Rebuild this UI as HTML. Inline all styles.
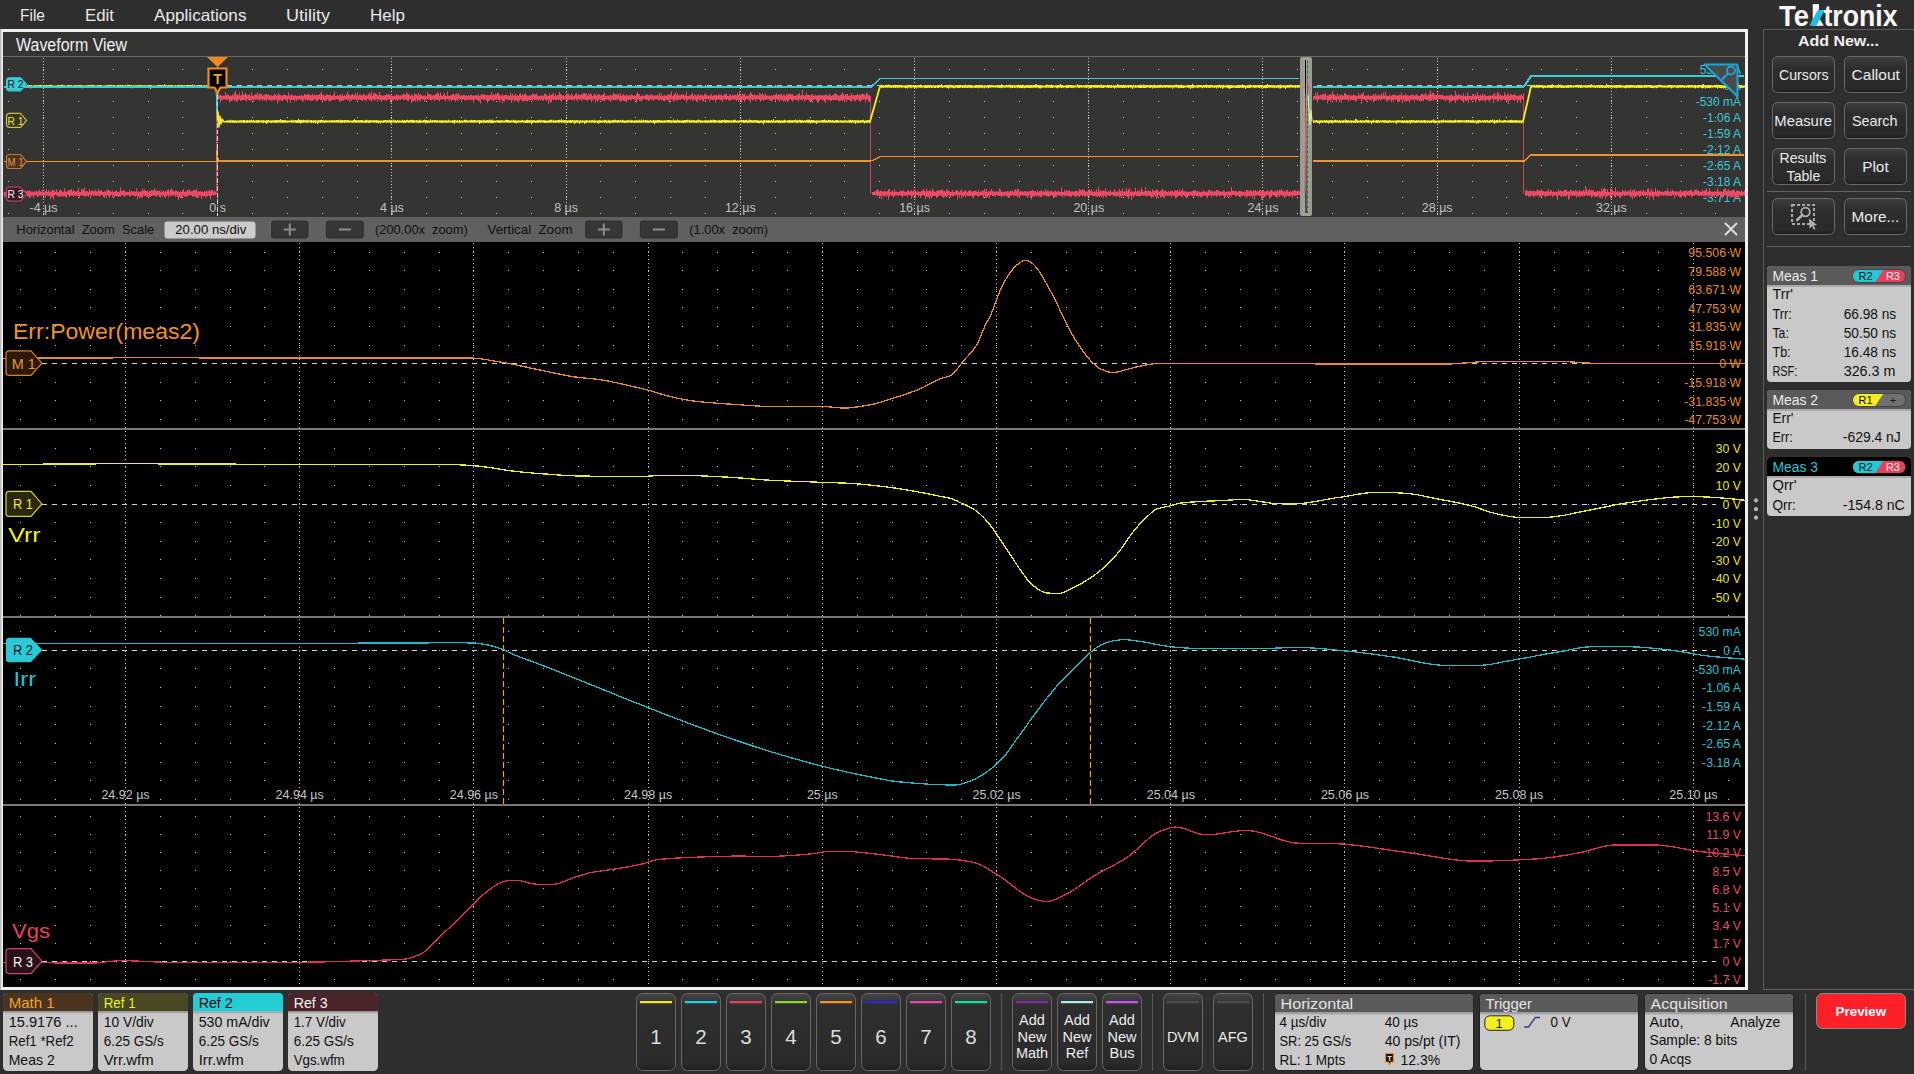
<!DOCTYPE html><html><head><meta charset="utf-8"><style>html,body{margin:0;padding:0;background:#2e2e2e;width:1914px;height:1074px;overflow:hidden;position:relative;font-family:"Liberation Sans",sans-serif}</style></head><body><svg width="1914" height="1074" viewBox="0 0 1914 1074" style="position:absolute;left:0;top:0;font-family:'Liberation Sans', sans-serif">
<defs>
<linearGradient id="btn" x1="0" y1="0" x2="0" y2="1">
<stop offset="0" stop-color="#3d3e40"/><stop offset="0.3" stop-color="#2e2e2e"/><stop offset="0.88" stop-color="#2a2a2a"/><stop offset="1" stop-color="#1c1c1c"/></linearGradient>
<linearGradient id="cbtn" x1="0" y1="0" x2="0" y2="1">
<stop offset="0" stop-color="#434446"/><stop offset="0.16" stop-color="#2e2e2e"/><stop offset="0.9" stop-color="#2b2b2b"/><stop offset="1" stop-color="#1e1e1e"/></linearGradient>
<linearGradient id="lb" x1="0" y1="0" x2="1" y2="0">
<stop offset="0" stop-color="#a9a9a9"/><stop offset="0.5" stop-color="#dcdcdc"/><stop offset="1" stop-color="#f4f4f4"/></linearGradient>
</defs>
<rect x="0" y="0" width="1914" height="1074" fill="#2e2e2e"/>
<text x="20" y="20.5" font-size="16.5" fill="#e8e8e8" text-anchor="start" font-weight="normal" textLength="25" lengthAdjust="spacingAndGlyphs">File</text>
<text x="85" y="20.5" font-size="16.5" fill="#e8e8e8" text-anchor="start" font-weight="normal" textLength="29" lengthAdjust="spacingAndGlyphs">Edit</text>
<text x="154" y="20.5" font-size="16.5" fill="#e8e8e8" text-anchor="start" font-weight="normal" textLength="92.5" lengthAdjust="spacingAndGlyphs">Applications</text>
<text x="286" y="20.5" font-size="16.5" fill="#e8e8e8" text-anchor="start" font-weight="normal" textLength="44" lengthAdjust="spacingAndGlyphs">Utility</text>
<text x="370" y="20.5" font-size="16.5" fill="#e8e8e8" text-anchor="start" font-weight="normal" textLength="35" lengthAdjust="spacingAndGlyphs">Help</text>
<text x="1779" y="25.8" font-size="30" font-weight="bold" fill="#f6f6f6" textLength="30" lengthAdjust="spacingAndGlyphs">Te</text>
<rect x="1812.7" y="4.1" width="6.3" height="21.7" fill="#f6f6f6"/>
<path d="M1818.5 17 L1823.8 25.8 L1817 25.8 L1815.5 22 Z" fill="#f6f6f6"/>
<path d="M1809.3 25.8 L1816.3 25.8 L1824.8 9.9 L1817.8 9.9 Z" fill="#1ec0e0"/>
<text x="1823.5" y="25.8" font-size="30" font-weight="bold" fill="#f6f6f6" textLength="74" lengthAdjust="spacingAndGlyphs">tronix</text>
<rect x="0" y="29" width="1748" height="961" fill="#f0f0f0"/>
<rect x="0" y="29" width="3" height="961" fill="url(#lb)"/>
<rect x="3" y="32" width="1742" height="955" fill="#343433"/>
<text x="16" y="51" font-size="17.5" fill="#f0f0f0" text-anchor="start" font-weight="normal" textLength="111" lengthAdjust="spacingAndGlyphs">Waveform View</text>
<rect x="3" y="56" width="1742" height="1" fill="#666666"/>
<rect x="3" y="217" width="1742" height="25" fill="#5f6060"/>
<rect x="3" y="242" width="1742" height="745" fill="#000000"/>
<path d="M8 69h1v1h-1zM8 85h1v1h-1zM8 101h1v1h-1zM8 117h1v1h-1zM8 133h1v1h-1zM8 149h1v1h-1zM8 165h1v1h-1zM8 181h1v1h-1zM8 197h1v1h-1zM8 213h1v1h-1zM43 69h1v1h-1zM43 85h1v1h-1zM43 101h1v1h-1zM43 117h1v1h-1zM43 133h1v1h-1zM43 149h1v1h-1zM43 165h1v1h-1zM43 181h1v1h-1zM43 197h1v1h-1zM43 213h1v1h-1zM78 69h1v1h-1zM78 85h1v1h-1zM78 101h1v1h-1zM78 117h1v1h-1zM78 133h1v1h-1zM78 149h1v1h-1zM78 165h1v1h-1zM78 181h1v1h-1zM78 197h1v1h-1zM78 213h1v1h-1zM113 69h1v1h-1zM113 85h1v1h-1zM113 101h1v1h-1zM113 117h1v1h-1zM113 133h1v1h-1zM113 149h1v1h-1zM113 165h1v1h-1zM113 181h1v1h-1zM113 197h1v1h-1zM113 213h1v1h-1zM148 69h1v1h-1zM148 85h1v1h-1zM148 101h1v1h-1zM148 117h1v1h-1zM148 133h1v1h-1zM148 149h1v1h-1zM148 165h1v1h-1zM148 181h1v1h-1zM148 197h1v1h-1zM148 213h1v1h-1zM182 69h1v1h-1zM182 85h1v1h-1zM182 101h1v1h-1zM182 117h1v1h-1zM182 133h1v1h-1zM182 149h1v1h-1zM182 165h1v1h-1zM182 181h1v1h-1zM182 197h1v1h-1zM182 213h1v1h-1zM217 69h1v1h-1zM217 85h1v1h-1zM217 101h1v1h-1zM217 117h1v1h-1zM217 133h1v1h-1zM217 149h1v1h-1zM217 165h1v1h-1zM217 181h1v1h-1zM217 197h1v1h-1zM217 213h1v1h-1zM252 69h1v1h-1zM252 85h1v1h-1zM252 101h1v1h-1zM252 117h1v1h-1zM252 133h1v1h-1zM252 149h1v1h-1zM252 165h1v1h-1zM252 181h1v1h-1zM252 197h1v1h-1zM252 213h1v1h-1zM287 69h1v1h-1zM287 85h1v1h-1zM287 101h1v1h-1zM287 117h1v1h-1zM287 133h1v1h-1zM287 149h1v1h-1zM287 165h1v1h-1zM287 181h1v1h-1zM287 197h1v1h-1zM287 213h1v1h-1zM322 69h1v1h-1zM322 85h1v1h-1zM322 101h1v1h-1zM322 117h1v1h-1zM322 133h1v1h-1zM322 149h1v1h-1zM322 165h1v1h-1zM322 181h1v1h-1zM322 197h1v1h-1zM322 213h1v1h-1zM357 69h1v1h-1zM357 85h1v1h-1zM357 101h1v1h-1zM357 117h1v1h-1zM357 133h1v1h-1zM357 149h1v1h-1zM357 165h1v1h-1zM357 181h1v1h-1zM357 197h1v1h-1zM357 213h1v1h-1zM391 69h1v1h-1zM391 85h1v1h-1zM391 101h1v1h-1zM391 117h1v1h-1zM391 133h1v1h-1zM391 149h1v1h-1zM391 165h1v1h-1zM391 181h1v1h-1zM391 197h1v1h-1zM391 213h1v1h-1zM426 69h1v1h-1zM426 85h1v1h-1zM426 101h1v1h-1zM426 117h1v1h-1zM426 133h1v1h-1zM426 149h1v1h-1zM426 165h1v1h-1zM426 181h1v1h-1zM426 197h1v1h-1zM426 213h1v1h-1zM461 69h1v1h-1zM461 85h1v1h-1zM461 101h1v1h-1zM461 117h1v1h-1zM461 133h1v1h-1zM461 149h1v1h-1zM461 165h1v1h-1zM461 181h1v1h-1zM461 197h1v1h-1zM461 213h1v1h-1zM496 69h1v1h-1zM496 85h1v1h-1zM496 101h1v1h-1zM496 117h1v1h-1zM496 133h1v1h-1zM496 149h1v1h-1zM496 165h1v1h-1zM496 181h1v1h-1zM496 197h1v1h-1zM496 213h1v1h-1zM531 69h1v1h-1zM531 85h1v1h-1zM531 101h1v1h-1zM531 117h1v1h-1zM531 133h1v1h-1zM531 149h1v1h-1zM531 165h1v1h-1zM531 181h1v1h-1zM531 197h1v1h-1zM531 213h1v1h-1zM566 69h1v1h-1zM566 85h1v1h-1zM566 101h1v1h-1zM566 117h1v1h-1zM566 133h1v1h-1zM566 149h1v1h-1zM566 165h1v1h-1zM566 181h1v1h-1zM566 197h1v1h-1zM566 213h1v1h-1zM600 69h1v1h-1zM600 85h1v1h-1zM600 101h1v1h-1zM600 117h1v1h-1zM600 133h1v1h-1zM600 149h1v1h-1zM600 165h1v1h-1zM600 181h1v1h-1zM600 197h1v1h-1zM600 213h1v1h-1zM635 69h1v1h-1zM635 85h1v1h-1zM635 101h1v1h-1zM635 117h1v1h-1zM635 133h1v1h-1zM635 149h1v1h-1zM635 165h1v1h-1zM635 181h1v1h-1zM635 197h1v1h-1zM635 213h1v1h-1zM670 69h1v1h-1zM670 85h1v1h-1zM670 101h1v1h-1zM670 117h1v1h-1zM670 133h1v1h-1zM670 149h1v1h-1zM670 165h1v1h-1zM670 181h1v1h-1zM670 197h1v1h-1zM670 213h1v1h-1zM705 69h1v1h-1zM705 85h1v1h-1zM705 101h1v1h-1zM705 117h1v1h-1zM705 133h1v1h-1zM705 149h1v1h-1zM705 165h1v1h-1zM705 181h1v1h-1zM705 197h1v1h-1zM705 213h1v1h-1zM740 69h1v1h-1zM740 85h1v1h-1zM740 101h1v1h-1zM740 117h1v1h-1zM740 133h1v1h-1zM740 149h1v1h-1zM740 165h1v1h-1zM740 181h1v1h-1zM740 197h1v1h-1zM740 213h1v1h-1zM775 69h1v1h-1zM775 85h1v1h-1zM775 101h1v1h-1zM775 117h1v1h-1zM775 133h1v1h-1zM775 149h1v1h-1zM775 165h1v1h-1zM775 181h1v1h-1zM775 197h1v1h-1zM775 213h1v1h-1zM810 69h1v1h-1zM810 85h1v1h-1zM810 101h1v1h-1zM810 117h1v1h-1zM810 133h1v1h-1zM810 149h1v1h-1zM810 165h1v1h-1zM810 181h1v1h-1zM810 197h1v1h-1zM810 213h1v1h-1zM844 69h1v1h-1zM844 85h1v1h-1zM844 101h1v1h-1zM844 117h1v1h-1zM844 133h1v1h-1zM844 149h1v1h-1zM844 165h1v1h-1zM844 181h1v1h-1zM844 197h1v1h-1zM844 213h1v1h-1zM879 69h1v1h-1zM879 85h1v1h-1zM879 101h1v1h-1zM879 117h1v1h-1zM879 133h1v1h-1zM879 149h1v1h-1zM879 165h1v1h-1zM879 181h1v1h-1zM879 197h1v1h-1zM879 213h1v1h-1zM914 69h1v1h-1zM914 85h1v1h-1zM914 101h1v1h-1zM914 117h1v1h-1zM914 133h1v1h-1zM914 149h1v1h-1zM914 165h1v1h-1zM914 181h1v1h-1zM914 197h1v1h-1zM914 213h1v1h-1zM949 69h1v1h-1zM949 85h1v1h-1zM949 101h1v1h-1zM949 117h1v1h-1zM949 133h1v1h-1zM949 149h1v1h-1zM949 165h1v1h-1zM949 181h1v1h-1zM949 197h1v1h-1zM949 213h1v1h-1zM984 69h1v1h-1zM984 85h1v1h-1zM984 101h1v1h-1zM984 117h1v1h-1zM984 133h1v1h-1zM984 149h1v1h-1zM984 165h1v1h-1zM984 181h1v1h-1zM984 197h1v1h-1zM984 213h1v1h-1zM1019 69h1v1h-1zM1019 85h1v1h-1zM1019 101h1v1h-1zM1019 117h1v1h-1zM1019 133h1v1h-1zM1019 149h1v1h-1zM1019 165h1v1h-1zM1019 181h1v1h-1zM1019 197h1v1h-1zM1019 213h1v1h-1zM1053 69h1v1h-1zM1053 85h1v1h-1zM1053 101h1v1h-1zM1053 117h1v1h-1zM1053 133h1v1h-1zM1053 149h1v1h-1zM1053 165h1v1h-1zM1053 181h1v1h-1zM1053 197h1v1h-1zM1053 213h1v1h-1zM1088 69h1v1h-1zM1088 85h1v1h-1zM1088 101h1v1h-1zM1088 117h1v1h-1zM1088 133h1v1h-1zM1088 149h1v1h-1zM1088 165h1v1h-1zM1088 181h1v1h-1zM1088 197h1v1h-1zM1088 213h1v1h-1zM1123 69h1v1h-1zM1123 85h1v1h-1zM1123 101h1v1h-1zM1123 117h1v1h-1zM1123 133h1v1h-1zM1123 149h1v1h-1zM1123 165h1v1h-1zM1123 181h1v1h-1zM1123 197h1v1h-1zM1123 213h1v1h-1zM1158 69h1v1h-1zM1158 85h1v1h-1zM1158 101h1v1h-1zM1158 117h1v1h-1zM1158 133h1v1h-1zM1158 149h1v1h-1zM1158 165h1v1h-1zM1158 181h1v1h-1zM1158 197h1v1h-1zM1158 213h1v1h-1zM1193 69h1v1h-1zM1193 85h1v1h-1zM1193 101h1v1h-1zM1193 117h1v1h-1zM1193 133h1v1h-1zM1193 149h1v1h-1zM1193 165h1v1h-1zM1193 181h1v1h-1zM1193 197h1v1h-1zM1193 213h1v1h-1zM1228 69h1v1h-1zM1228 85h1v1h-1zM1228 101h1v1h-1zM1228 117h1v1h-1zM1228 133h1v1h-1zM1228 149h1v1h-1zM1228 165h1v1h-1zM1228 181h1v1h-1zM1228 197h1v1h-1zM1228 213h1v1h-1zM1262 69h1v1h-1zM1262 85h1v1h-1zM1262 101h1v1h-1zM1262 117h1v1h-1zM1262 133h1v1h-1zM1262 149h1v1h-1zM1262 165h1v1h-1zM1262 181h1v1h-1zM1262 197h1v1h-1zM1262 213h1v1h-1zM1297 69h1v1h-1zM1297 85h1v1h-1zM1297 101h1v1h-1zM1297 117h1v1h-1zM1297 133h1v1h-1zM1297 149h1v1h-1zM1297 165h1v1h-1zM1297 181h1v1h-1zM1297 197h1v1h-1zM1297 213h1v1h-1zM1332 69h1v1h-1zM1332 85h1v1h-1zM1332 101h1v1h-1zM1332 117h1v1h-1zM1332 133h1v1h-1zM1332 149h1v1h-1zM1332 165h1v1h-1zM1332 181h1v1h-1zM1332 197h1v1h-1zM1332 213h1v1h-1zM1367 69h1v1h-1zM1367 85h1v1h-1zM1367 101h1v1h-1zM1367 117h1v1h-1zM1367 133h1v1h-1zM1367 149h1v1h-1zM1367 165h1v1h-1zM1367 181h1v1h-1zM1367 197h1v1h-1zM1367 213h1v1h-1zM1402 69h1v1h-1zM1402 85h1v1h-1zM1402 101h1v1h-1zM1402 117h1v1h-1zM1402 133h1v1h-1zM1402 149h1v1h-1zM1402 165h1v1h-1zM1402 181h1v1h-1zM1402 197h1v1h-1zM1402 213h1v1h-1zM1437 69h1v1h-1zM1437 85h1v1h-1zM1437 101h1v1h-1zM1437 117h1v1h-1zM1437 133h1v1h-1zM1437 149h1v1h-1zM1437 165h1v1h-1zM1437 181h1v1h-1zM1437 197h1v1h-1zM1437 213h1v1h-1zM1472 69h1v1h-1zM1472 85h1v1h-1zM1472 101h1v1h-1zM1472 117h1v1h-1zM1472 133h1v1h-1zM1472 149h1v1h-1zM1472 165h1v1h-1zM1472 181h1v1h-1zM1472 197h1v1h-1zM1472 213h1v1h-1zM1506 69h1v1h-1zM1506 85h1v1h-1zM1506 101h1v1h-1zM1506 117h1v1h-1zM1506 133h1v1h-1zM1506 149h1v1h-1zM1506 165h1v1h-1zM1506 181h1v1h-1zM1506 197h1v1h-1zM1506 213h1v1h-1zM1541 69h1v1h-1zM1541 85h1v1h-1zM1541 101h1v1h-1zM1541 117h1v1h-1zM1541 133h1v1h-1zM1541 149h1v1h-1zM1541 165h1v1h-1zM1541 181h1v1h-1zM1541 197h1v1h-1zM1541 213h1v1h-1zM1576 69h1v1h-1zM1576 85h1v1h-1zM1576 101h1v1h-1zM1576 117h1v1h-1zM1576 133h1v1h-1zM1576 149h1v1h-1zM1576 165h1v1h-1zM1576 181h1v1h-1zM1576 197h1v1h-1zM1576 213h1v1h-1zM1611 69h1v1h-1zM1611 85h1v1h-1zM1611 101h1v1h-1zM1611 117h1v1h-1zM1611 133h1v1h-1zM1611 149h1v1h-1zM1611 165h1v1h-1zM1611 181h1v1h-1zM1611 197h1v1h-1zM1611 213h1v1h-1zM1646 69h1v1h-1zM1646 85h1v1h-1zM1646 101h1v1h-1zM1646 117h1v1h-1zM1646 133h1v1h-1zM1646 149h1v1h-1zM1646 165h1v1h-1zM1646 181h1v1h-1zM1646 197h1v1h-1zM1646 213h1v1h-1zM1681 69h1v1h-1zM1681 85h1v1h-1zM1681 101h1v1h-1zM1681 117h1v1h-1zM1681 133h1v1h-1zM1681 149h1v1h-1zM1681 165h1v1h-1zM1681 181h1v1h-1zM1681 197h1v1h-1zM1681 213h1v1h-1zM1715 69h1v1h-1zM1715 85h1v1h-1zM1715 101h1v1h-1zM1715 117h1v1h-1zM1715 133h1v1h-1zM1715 149h1v1h-1zM1715 165h1v1h-1zM1715 181h1v1h-1zM1715 197h1v1h-1zM1715 213h1v1h-1z" fill="#c9c9c9"/>
<line x1="43.5" y1="58" x2="43.5" y2="216" stroke="#c9c9c9" stroke-width="1" stroke-dasharray="1 2"/>
<line x1="217.5" y1="58" x2="217.5" y2="216" stroke="#c9c9c9" stroke-width="1" stroke-dasharray="1 2"/>
<line x1="391.5" y1="58" x2="391.5" y2="216" stroke="#c9c9c9" stroke-width="1" stroke-dasharray="1 2"/>
<line x1="566.5" y1="58" x2="566.5" y2="216" stroke="#c9c9c9" stroke-width="1" stroke-dasharray="1 2"/>
<line x1="740.5" y1="58" x2="740.5" y2="216" stroke="#c9c9c9" stroke-width="1" stroke-dasharray="1 2"/>
<line x1="914.5" y1="58" x2="914.5" y2="216" stroke="#c9c9c9" stroke-width="1" stroke-dasharray="1 2"/>
<line x1="1088.5" y1="58" x2="1088.5" y2="216" stroke="#c9c9c9" stroke-width="1" stroke-dasharray="1 2"/>
<line x1="1262.5" y1="58" x2="1262.5" y2="216" stroke="#c9c9c9" stroke-width="1" stroke-dasharray="1 2"/>
<line x1="1437.5" y1="58" x2="1437.5" y2="216" stroke="#c9c9c9" stroke-width="1" stroke-dasharray="1 2"/>
<line x1="1611.5" y1="58" x2="1611.5" y2="216" stroke="#c9c9c9" stroke-width="1" stroke-dasharray="1 2"/>
<text x="43.5" y="212" font-size="12.5" fill="#c0c0c0" text-anchor="middle" font-weight="normal">-4 µs</text>
<text x="217.7" y="212" font-size="12.5" fill="#c0c0c0" text-anchor="middle" font-weight="normal">0 s</text>
<text x="391.9" y="212" font-size="12.5" fill="#c0c0c0" text-anchor="middle" font-weight="normal">4 µs</text>
<text x="566.1" y="212" font-size="12.5" fill="#c0c0c0" text-anchor="middle" font-weight="normal">8 µs</text>
<text x="740.3" y="212" font-size="12.5" fill="#c0c0c0" text-anchor="middle" font-weight="normal">12 µs</text>
<text x="914.6" y="212" font-size="12.5" fill="#c0c0c0" text-anchor="middle" font-weight="normal">16 µs</text>
<text x="1088.8" y="212" font-size="12.5" fill="#c0c0c0" text-anchor="middle" font-weight="normal">20 µs</text>
<text x="1263.0" y="212" font-size="12.5" fill="#c0c0c0" text-anchor="middle" font-weight="normal">24 µs</text>
<text x="1437.2" y="212" font-size="12.5" fill="#c0c0c0" text-anchor="middle" font-weight="normal">28 µs</text>
<text x="1611.4" y="212" font-size="12.5" fill="#c0c0c0" text-anchor="middle" font-weight="normal">32 µs</text>
<text x="1741" y="73.5" font-size="12" fill="#3cc8d8" text-anchor="end" font-weight="normal">530 mA</text>
<text x="1741" y="89.5" font-size="12" fill="#3cc8d8" text-anchor="end" font-weight="normal">0 A</text>
<text x="1741" y="106.0" font-size="12" fill="#3cc8d8" text-anchor="end" font-weight="normal">-530 mA</text>
<text x="1741" y="122.0" font-size="12" fill="#3cc8d8" text-anchor="end" font-weight="normal">-1.06 A</text>
<text x="1741" y="138.0" font-size="12" fill="#3cc8d8" text-anchor="end" font-weight="normal">-1.59 A</text>
<text x="1741" y="154.0" font-size="12" fill="#3cc8d8" text-anchor="end" font-weight="normal">-2.12 A</text>
<text x="1741" y="170.0" font-size="12" fill="#3cc8d8" text-anchor="end" font-weight="normal">-2.65 A</text>
<text x="1741" y="186.0" font-size="12" fill="#3cc8d8" text-anchor="end" font-weight="normal">-3.18 A</text>
<text x="1741" y="202.0" font-size="12" fill="#3cc8d8" text-anchor="end" font-weight="normal">-3.71 A</text>
<line x1="27" y1="85.5" x2="1745" y2="85.5" stroke="#c8c8c8" stroke-width="1" stroke-dasharray="5 5"/>
<path d="M4 191.7h1V197.2h-1zM5 191.7h1V196.6h-1zM6 191.5h1V195.2h-1zM7 191.4h1V195.6h-1zM8 190.9h1V198.1h-1zM9 190.9h1V195.6h-1zM10 191.3h1V196.4h-1zM11 191.0h1V195.1h-1zM12 191.1h1V195.5h-1zM13 191.3h1V197.0h-1zM14 190.7h1V195.7h-1zM15 190.0h1V198.3h-1zM16 189.2h1V196.1h-1zM17 189.8h1V196.1h-1zM18 190.7h1V195.9h-1zM19 190.7h1V197.6h-1zM20 189.7h1V198.0h-1zM21 189.3h1V196.5h-1zM22 189.3h1V195.7h-1zM23 191.7h1V195.4h-1zM24 190.3h1V196.5h-1zM25 191.0h1V195.6h-1zM26 191.6h1V195.6h-1zM27 190.4h1V196.4h-1zM28 190.9h1V196.1h-1zM29 190.3h1V197.9h-1zM30 191.5h1V197.4h-1zM31 191.5h1V195.5h-1zM32 191.8h1V195.7h-1zM33 191.7h1V198.1h-1zM34 191.5h1V195.4h-1zM35 191.6h1V195.5h-1zM36 190.3h1V195.3h-1zM37 191.7h1V197.2h-1zM38 191.3h1V196.7h-1zM39 189.6h1V195.3h-1zM40 191.5h1V195.5h-1zM41 191.8h1V196.1h-1zM42 189.7h1V195.2h-1zM43 191.9h1V195.9h-1zM44 191.7h1V195.1h-1zM45 190.9h1V197.8h-1zM46 189.0h1V195.2h-1zM47 191.9h1V195.8h-1zM48 190.1h1V196.3h-1zM49 191.8h1V195.5h-1zM50 191.6h1V199.3h-1zM51 190.9h1V196.9h-1zM52 189.6h1V197.1h-1zM53 190.5h1V199.6h-1zM54 190.3h1V195.2h-1zM55 191.9h1V195.1h-1zM56 189.2h1V195.5h-1zM57 191.6h1V195.7h-1zM58 191.9h1V196.6h-1zM59 190.2h1V196.9h-1zM60 189.7h1V196.3h-1zM61 190.5h1V196.3h-1zM62 192.0h1V196.5h-1zM63 191.8h1V196.5h-1zM64 188.3h1V195.7h-1zM65 191.7h1V197.0h-1zM66 191.8h1V197.6h-1zM67 190.6h1V195.1h-1zM68 190.7h1V195.3h-1zM69 190.0h1V197.0h-1zM70 189.5h1V195.8h-1zM71 189.2h1V195.4h-1zM72 191.4h1V195.4h-1zM73 190.5h1V196.9h-1zM74 190.8h1V195.4h-1zM75 191.6h1V195.6h-1zM76 191.6h1V195.7h-1zM77 190.5h1V196.2h-1zM78 188.0h1V196.0h-1zM79 191.4h1V197.4h-1zM80 191.9h1V195.6h-1zM81 188.9h1V195.8h-1zM82 189.8h1V195.5h-1zM83 189.5h1V196.2h-1zM84 187.4h1V196.2h-1zM85 191.2h1V196.3h-1zM86 191.0h1V196.5h-1zM87 191.2h1V195.3h-1zM88 191.9h1V197.0h-1zM89 188.9h1V195.1h-1zM90 191.5h1V198.7h-1zM91 190.7h1V195.6h-1zM92 190.2h1V195.1h-1zM93 191.1h1V196.6h-1zM94 191.6h1V195.3h-1zM95 189.5h1V195.7h-1zM96 191.5h1V195.9h-1zM97 191.3h1V195.2h-1zM98 188.9h1V195.8h-1zM99 191.0h1V196.4h-1zM100 190.6h1V195.2h-1zM101 189.9h1V195.1h-1zM102 191.7h1V195.8h-1zM103 192.0h1V196.8h-1zM104 191.2h1V197.9h-1zM105 191.8h1V195.3h-1zM106 190.6h1V198.0h-1zM107 189.7h1V195.1h-1zM108 189.8h1V196.3h-1zM109 190.9h1V197.8h-1zM110 190.4h1V195.6h-1zM111 191.9h1V195.0h-1zM112 190.5h1V197.2h-1zM113 192.0h1V195.5h-1zM114 191.5h1V196.9h-1zM115 191.0h1V195.9h-1zM116 190.3h1V196.2h-1zM117 192.0h1V196.2h-1zM118 191.8h1V196.8h-1zM119 191.6h1V196.4h-1zM120 187.2h1V196.7h-1zM121 190.7h1V195.1h-1zM122 191.1h1V195.3h-1zM123 190.0h1V196.5h-1zM124 190.5h1V196.6h-1zM125 191.7h1V195.8h-1zM126 191.9h1V195.0h-1zM127 191.8h1V195.6h-1zM128 192.0h1V195.1h-1zM129 190.0h1V196.9h-1zM130 191.7h1V196.1h-1zM131 191.0h1V195.6h-1zM132 191.5h1V195.2h-1zM133 191.2h1V195.4h-1zM134 191.6h1V196.1h-1zM135 191.4h1V196.6h-1zM136 188.0h1V195.6h-1zM137 192.0h1V199.5h-1zM138 191.1h1V196.0h-1zM139 191.8h1V198.3h-1zM140 191.5h1V196.9h-1zM141 191.3h1V197.5h-1zM142 188.6h1V197.8h-1zM143 190.4h1V195.6h-1zM144 189.7h1V196.1h-1zM145 190.7h1V195.8h-1zM146 191.1h1V196.9h-1zM147 190.4h1V196.7h-1zM148 192.0h1V196.2h-1zM149 190.5h1V197.0h-1zM150 190.9h1V197.0h-1zM151 190.0h1V196.0h-1zM152 190.4h1V195.6h-1zM153 190.2h1V195.7h-1zM154 188.2h1V195.4h-1zM155 190.5h1V196.6h-1zM156 190.6h1V196.4h-1zM157 191.0h1V195.6h-1zM158 191.0h1V195.1h-1zM159 190.5h1V197.0h-1zM160 191.9h1V198.1h-1zM161 190.6h1V195.2h-1zM162 191.9h1V196.8h-1zM163 190.9h1V195.2h-1zM164 191.3h1V197.0h-1zM165 191.1h1V198.1h-1zM166 191.9h1V195.8h-1zM167 190.0h1V195.4h-1zM168 189.3h1V197.5h-1zM169 191.2h1V195.1h-1zM170 190.0h1V196.5h-1zM171 188.2h1V195.4h-1zM172 190.3h1V195.4h-1zM173 190.8h1V195.6h-1zM174 191.4h1V195.2h-1zM175 190.6h1V196.7h-1zM176 190.7h1V195.4h-1zM177 191.6h1V197.3h-1zM178 191.1h1V199.7h-1zM179 191.9h1V197.0h-1zM180 191.6h1V198.0h-1zM181 191.8h1V198.3h-1zM182 190.5h1V196.6h-1zM183 189.0h1V195.5h-1zM184 192.0h1V196.3h-1zM185 191.1h1V197.0h-1zM186 191.8h1V196.6h-1zM187 190.1h1V196.6h-1zM188 190.3h1V195.4h-1zM189 189.5h1V195.3h-1zM190 191.5h1V195.3h-1zM191 191.2h1V195.3h-1zM192 191.1h1V196.8h-1zM193 190.3h1V196.6h-1zM194 189.9h1V196.4h-1zM195 190.6h1V197.0h-1zM196 189.0h1V197.3h-1zM197 191.4h1V198.1h-1zM198 191.0h1V198.0h-1zM199 191.4h1V195.5h-1zM200 191.0h1V195.5h-1zM201 191.9h1V198.9h-1zM202 191.4h1V196.2h-1zM203 191.9h1V196.6h-1zM204 190.9h1V196.0h-1zM205 191.4h1V197.4h-1zM206 190.8h1V196.4h-1zM207 191.6h1V196.2h-1zM208 191.0h1V195.3h-1zM209 189.9h1V196.2h-1zM210 191.4h1V199.5h-1zM211 190.0h1V196.0h-1zM212 189.7h1V195.2h-1zM213 191.6h1V195.3h-1zM214 191.3h1V195.0h-1zM215 191.5h1V195.3h-1zM218 92.4h1V99.2h-1zM219 95.6h1V99.0h-1zM220 94.6h1V102.3h-1zM221 95.8h1V100.2h-1zM222 95.7h1V99.8h-1zM223 95.5h1V99.4h-1zM224 95.7h1V99.2h-1zM225 92.0h1V99.5h-1zM226 95.3h1V99.7h-1zM227 94.4h1V99.8h-1zM228 94.4h1V99.2h-1zM229 95.8h1V102.5h-1zM230 95.5h1V100.7h-1zM231 95.7h1V101.2h-1zM232 94.2h1V100.4h-1zM233 95.4h1V99.2h-1zM234 92.8h1V101.2h-1zM235 91.1h1V99.7h-1zM236 95.0h1V102.1h-1zM237 94.1h1V101.2h-1zM238 95.8h1V99.9h-1zM239 92.5h1V99.2h-1zM240 95.4h1V101.0h-1zM241 95.3h1V99.9h-1zM242 90.8h1V100.2h-1zM243 94.3h1V100.3h-1zM244 95.0h1V99.5h-1zM245 92.7h1V100.8h-1zM246 93.8h1V101.6h-1zM247 95.5h1V99.1h-1zM248 94.7h1V100.3h-1zM249 94.8h1V100.3h-1zM250 95.7h1V100.6h-1zM251 92.2h1V100.0h-1zM252 95.7h1V99.4h-1zM253 95.8h1V102.1h-1zM254 95.0h1V99.4h-1zM255 94.2h1V99.8h-1zM256 94.6h1V99.4h-1zM257 92.4h1V99.7h-1zM258 95.5h1V99.6h-1zM259 93.7h1V100.7h-1zM260 93.6h1V99.8h-1zM261 93.7h1V99.1h-1zM262 95.9h1V101.0h-1zM263 94.9h1V99.3h-1zM264 94.9h1V100.6h-1zM265 94.1h1V99.8h-1zM266 94.0h1V101.4h-1zM267 95.1h1V99.1h-1zM268 94.1h1V99.7h-1zM269 95.6h1V99.8h-1zM270 95.4h1V100.7h-1zM271 95.0h1V100.6h-1zM272 95.8h1V100.5h-1zM273 95.7h1V99.4h-1zM274 93.8h1V100.8h-1zM275 94.2h1V99.5h-1zM276 96.0h1V99.4h-1zM277 95.1h1V103.6h-1zM278 92.9h1V100.6h-1zM279 94.7h1V100.8h-1zM280 95.0h1V99.7h-1zM281 95.7h1V100.8h-1zM282 95.6h1V100.9h-1zM283 94.6h1V99.3h-1zM284 94.8h1V99.2h-1zM285 94.9h1V100.5h-1zM286 95.7h1V99.4h-1zM287 95.4h1V102.4h-1zM288 92.4h1V99.1h-1zM289 95.5h1V99.8h-1zM290 95.6h1V102.7h-1zM291 94.2h1V100.0h-1zM292 95.2h1V99.8h-1zM293 95.6h1V99.9h-1zM294 95.8h1V101.6h-1zM295 95.3h1V99.6h-1zM296 95.9h1V101.0h-1zM297 95.7h1V99.6h-1zM298 96.0h1V99.7h-1zM299 95.5h1V99.3h-1zM300 95.9h1V99.8h-1zM301 94.9h1V99.6h-1zM302 95.3h1V102.0h-1zM303 95.9h1V100.7h-1zM304 93.9h1V99.2h-1zM305 94.8h1V100.6h-1zM306 94.8h1V99.3h-1zM307 94.3h1V100.8h-1zM308 94.4h1V100.1h-1zM309 94.2h1V99.9h-1zM310 95.6h1V101.4h-1zM311 94.9h1V100.4h-1zM312 94.1h1V100.6h-1zM313 95.6h1V100.6h-1zM314 94.4h1V99.5h-1zM315 95.3h1V99.3h-1zM316 94.9h1V101.5h-1zM317 94.9h1V100.8h-1zM318 94.7h1V99.9h-1zM319 94.3h1V99.1h-1zM320 93.5h1V100.6h-1zM321 91.5h1V100.3h-1zM322 95.1h1V100.6h-1zM323 94.4h1V99.9h-1zM324 95.7h1V100.9h-1zM325 95.6h1V101.1h-1zM326 94.6h1V100.5h-1zM327 94.5h1V99.3h-1zM328 95.0h1V100.4h-1zM329 95.0h1V101.7h-1zM330 94.6h1V100.9h-1zM331 96.0h1V100.3h-1zM332 95.8h1V99.9h-1zM333 94.5h1V99.7h-1zM334 91.4h1V100.0h-1zM335 95.9h1V99.6h-1zM336 95.8h1V99.0h-1zM337 95.3h1V99.6h-1zM338 95.6h1V99.6h-1zM339 94.8h1V101.2h-1zM340 94.8h1V101.2h-1zM341 95.4h1V100.7h-1zM342 93.7h1V99.9h-1zM343 95.9h1V101.1h-1zM344 95.1h1V100.1h-1zM345 95.9h1V99.1h-1zM346 94.4h1V99.7h-1zM347 91.4h1V100.5h-1zM348 94.4h1V99.3h-1zM349 94.4h1V102.0h-1zM350 95.7h1V99.2h-1zM351 94.7h1V101.0h-1zM352 94.0h1V99.3h-1zM353 94.7h1V99.7h-1zM354 95.4h1V100.1h-1zM355 92.7h1V99.1h-1zM356 95.5h1V99.9h-1zM357 92.4h1V100.6h-1zM358 95.6h1V99.7h-1zM359 94.6h1V99.8h-1zM360 94.6h1V99.9h-1zM361 95.5h1V100.5h-1zM362 95.3h1V100.7h-1zM363 94.0h1V99.5h-1zM364 94.5h1V100.6h-1zM365 95.9h1V100.0h-1zM366 94.4h1V101.4h-1zM367 95.4h1V99.1h-1zM368 93.7h1V99.6h-1zM369 92.9h1V100.3h-1zM370 94.6h1V100.1h-1zM371 91.3h1V101.7h-1zM372 95.8h1V99.2h-1zM373 93.6h1V99.8h-1zM374 92.9h1V100.5h-1zM375 93.3h1V99.7h-1zM376 94.0h1V99.2h-1zM377 95.1h1V102.1h-1zM378 95.6h1V99.0h-1zM379 91.9h1V99.7h-1zM380 95.0h1V100.3h-1zM381 95.3h1V101.8h-1zM382 95.9h1V99.4h-1zM383 95.5h1V100.0h-1zM384 95.2h1V100.4h-1zM385 95.1h1V99.8h-1zM386 94.3h1V101.1h-1zM387 94.6h1V99.7h-1zM388 93.8h1V99.6h-1zM389 95.1h1V99.4h-1zM390 94.9h1V103.1h-1zM391 95.8h1V99.8h-1zM392 95.8h1V100.6h-1zM393 95.8h1V99.9h-1zM394 95.5h1V99.1h-1zM395 95.8h1V100.6h-1zM396 94.6h1V99.8h-1zM397 95.2h1V100.7h-1zM398 94.7h1V99.8h-1zM399 95.6h1V99.4h-1zM400 95.1h1V100.3h-1zM401 95.7h1V99.0h-1zM402 94.5h1V99.1h-1zM403 93.4h1V100.3h-1zM404 94.5h1V99.5h-1zM405 94.5h1V99.5h-1zM406 91.7h1V99.9h-1zM407 93.8h1V101.1h-1zM408 94.1h1V101.3h-1zM409 95.3h1V99.2h-1zM410 95.9h1V99.3h-1zM411 93.9h1V102.9h-1zM412 95.6h1V101.1h-1zM413 95.9h1V101.8h-1zM414 93.3h1V100.1h-1zM415 94.3h1V102.0h-1zM416 94.0h1V99.2h-1zM417 95.5h1V101.7h-1zM418 92.4h1V100.0h-1zM419 95.1h1V100.0h-1zM420 93.7h1V101.4h-1zM421 95.4h1V99.2h-1zM422 95.4h1V99.4h-1zM423 95.6h1V99.6h-1zM424 95.5h1V102.0h-1zM425 95.6h1V99.7h-1zM426 96.0h1V99.8h-1zM427 92.4h1V99.0h-1zM428 94.2h1V99.7h-1zM429 93.8h1V99.2h-1zM430 94.0h1V100.3h-1zM431 95.2h1V100.5h-1zM432 95.5h1V99.8h-1zM433 95.0h1V99.0h-1zM434 95.4h1V101.1h-1zM435 94.2h1V99.8h-1zM436 93.9h1V99.7h-1zM437 92.3h1V100.1h-1zM438 92.9h1V99.7h-1zM439 95.4h1V101.5h-1zM440 92.5h1V99.5h-1zM441 95.3h1V99.8h-1zM442 96.0h1V99.4h-1zM443 94.6h1V99.0h-1zM444 92.9h1V99.7h-1zM445 95.7h1V101.2h-1zM446 95.9h1V99.2h-1zM447 91.5h1V99.3h-1zM448 95.4h1V99.2h-1zM449 95.9h1V101.4h-1zM450 95.6h1V99.5h-1zM451 94.8h1V100.9h-1zM452 94.0h1V100.1h-1zM453 94.1h1V99.7h-1zM454 95.3h1V100.1h-1zM455 94.1h1V101.7h-1zM456 93.3h1V99.7h-1zM457 95.2h1V101.1h-1zM458 92.8h1V99.0h-1zM459 94.4h1V99.7h-1zM460 95.8h1V99.2h-1zM461 95.6h1V99.9h-1zM462 95.3h1V99.6h-1zM463 95.1h1V99.3h-1zM464 94.8h1V100.1h-1zM465 95.8h1V100.7h-1zM466 95.3h1V99.7h-1zM467 96.0h1V99.5h-1zM468 94.8h1V100.0h-1zM469 95.7h1V100.3h-1zM470 95.0h1V99.2h-1zM471 94.8h1V100.2h-1zM472 95.4h1V99.7h-1zM473 95.2h1V102.5h-1zM474 95.8h1V99.4h-1zM475 94.9h1V99.5h-1zM476 95.3h1V99.5h-1zM477 95.4h1V99.9h-1zM478 94.3h1V100.6h-1zM479 95.9h1V101.0h-1zM480 95.6h1V103.5h-1zM481 94.0h1V99.1h-1zM482 94.5h1V99.4h-1zM483 94.9h1V100.2h-1zM484 94.1h1V99.5h-1zM485 94.9h1V99.4h-1zM486 95.2h1V101.1h-1zM487 95.0h1V103.0h-1zM488 95.0h1V101.1h-1zM489 95.6h1V100.4h-1zM490 94.7h1V99.6h-1zM491 91.8h1V100.0h-1zM492 95.5h1V100.1h-1zM493 94.3h1V101.3h-1zM494 95.1h1V99.7h-1zM495 93.8h1V100.1h-1zM496 94.4h1V99.6h-1zM497 92.9h1V99.4h-1zM498 92.7h1V100.3h-1zM499 94.4h1V102.3h-1zM500 95.4h1V99.8h-1zM501 95.7h1V99.7h-1zM502 93.7h1V103.3h-1zM503 95.8h1V100.9h-1zM504 95.1h1V101.8h-1zM505 95.1h1V99.3h-1zM506 94.4h1V99.5h-1zM507 95.5h1V99.6h-1zM508 95.3h1V100.5h-1zM509 95.9h1V100.1h-1zM510 92.8h1V99.8h-1zM511 95.2h1V102.7h-1zM512 93.4h1V100.5h-1zM513 96.0h1V99.4h-1zM514 95.0h1V101.4h-1zM515 93.6h1V100.8h-1zM516 95.9h1V100.2h-1zM517 95.1h1V101.3h-1zM518 96.0h1V102.7h-1zM519 94.0h1V100.5h-1zM520 93.2h1V99.3h-1zM521 96.0h1V99.8h-1zM522 94.3h1V101.5h-1zM523 95.2h1V100.9h-1zM524 93.8h1V100.9h-1zM525 93.8h1V101.1h-1zM526 95.1h1V101.1h-1zM527 95.8h1V101.6h-1zM528 96.0h1V100.6h-1zM529 95.0h1V100.0h-1zM530 95.8h1V100.2h-1zM531 95.0h1V100.1h-1zM532 93.6h1V100.6h-1zM533 94.1h1V99.0h-1zM534 94.7h1V100.4h-1zM535 94.3h1V100.1h-1zM536 93.3h1V99.7h-1zM537 95.3h1V100.0h-1zM538 96.0h1V101.3h-1zM539 95.8h1V99.5h-1zM540 95.4h1V100.2h-1zM541 95.8h1V99.2h-1zM542 95.0h1V101.1h-1zM543 96.0h1V100.3h-1zM544 93.7h1V99.0h-1zM545 93.7h1V100.4h-1zM546 94.4h1V100.4h-1zM547 96.0h1V99.5h-1zM548 96.0h1V104.1h-1zM549 93.5h1V100.3h-1zM550 95.2h1V102.6h-1zM551 94.7h1V101.9h-1zM552 94.2h1V99.5h-1zM553 93.0h1V99.9h-1zM554 96.0h1V99.4h-1zM555 93.6h1V100.0h-1zM556 95.9h1V99.9h-1zM557 95.0h1V99.4h-1zM558 95.0h1V100.2h-1zM559 92.1h1V99.6h-1zM560 94.0h1V100.4h-1zM561 94.6h1V101.7h-1zM562 95.4h1V99.2h-1zM563 95.5h1V99.6h-1zM564 96.0h1V99.5h-1zM565 95.5h1V99.2h-1zM566 92.7h1V100.4h-1zM567 94.0h1V101.0h-1zM568 93.7h1V99.7h-1zM569 95.8h1V99.7h-1zM570 95.3h1V99.3h-1zM571 93.5h1V100.1h-1zM572 95.0h1V100.1h-1zM573 96.0h1V99.3h-1zM574 95.2h1V100.7h-1zM575 93.7h1V99.0h-1zM576 93.1h1V99.9h-1zM577 95.7h1V101.4h-1zM578 93.7h1V99.0h-1zM579 95.1h1V99.4h-1zM580 95.0h1V99.5h-1zM581 93.9h1V101.3h-1zM582 94.7h1V99.4h-1zM583 92.9h1V99.8h-1zM584 93.0h1V99.5h-1zM585 94.3h1V99.7h-1zM586 93.3h1V100.3h-1zM587 95.7h1V100.6h-1zM588 93.5h1V100.2h-1zM589 94.9h1V99.6h-1zM590 92.9h1V99.4h-1zM591 94.2h1V102.1h-1zM592 96.0h1V100.4h-1zM593 95.5h1V99.3h-1zM594 93.6h1V99.6h-1zM595 94.2h1V102.6h-1zM596 95.9h1V99.5h-1zM597 94.6h1V101.7h-1zM598 93.9h1V100.6h-1zM599 94.4h1V99.2h-1zM600 95.7h1V100.2h-1zM601 94.9h1V100.1h-1zM602 95.0h1V100.7h-1zM603 93.9h1V101.0h-1zM604 92.4h1V101.3h-1zM605 95.8h1V99.6h-1zM606 96.0h1V99.8h-1zM607 95.2h1V99.3h-1zM608 95.4h1V100.4h-1zM609 95.5h1V99.5h-1zM610 95.2h1V102.1h-1zM611 95.2h1V100.2h-1zM612 95.3h1V99.2h-1zM613 92.4h1V99.9h-1zM614 93.9h1V100.2h-1zM615 94.2h1V100.0h-1zM616 94.5h1V99.3h-1zM617 94.4h1V100.4h-1zM618 93.6h1V99.0h-1zM619 95.8h1V100.4h-1zM620 93.0h1V101.2h-1zM621 95.7h1V101.4h-1zM622 95.2h1V99.9h-1zM623 94.0h1V101.0h-1zM624 95.8h1V101.0h-1zM625 95.1h1V101.2h-1zM626 94.4h1V102.2h-1zM627 96.0h1V99.9h-1zM628 95.1h1V100.0h-1zM629 94.9h1V99.7h-1zM630 95.8h1V100.5h-1zM631 94.1h1V99.8h-1zM632 94.9h1V99.1h-1zM633 95.7h1V99.3h-1zM634 95.4h1V99.9h-1zM635 95.8h1V99.8h-1zM636 94.1h1V102.6h-1zM637 92.0h1V99.4h-1zM638 94.0h1V99.5h-1zM639 94.3h1V101.1h-1zM640 96.0h1V100.7h-1zM641 95.8h1V101.2h-1zM642 95.3h1V100.2h-1zM643 95.8h1V99.0h-1zM644 95.6h1V99.0h-1zM645 95.3h1V99.5h-1zM646 94.1h1V100.2h-1zM647 94.7h1V99.8h-1zM648 95.0h1V100.7h-1zM649 95.8h1V101.1h-1zM650 94.7h1V99.2h-1zM651 94.0h1V99.2h-1zM652 95.8h1V100.1h-1zM653 95.6h1V101.0h-1zM654 95.3h1V99.3h-1zM655 95.6h1V99.6h-1zM656 95.8h1V99.2h-1zM657 94.6h1V99.2h-1zM658 95.6h1V100.3h-1zM659 92.5h1V100.2h-1zM660 95.7h1V99.3h-1zM661 93.5h1V100.4h-1zM662 96.0h1V99.9h-1zM663 95.4h1V100.9h-1zM664 95.2h1V101.6h-1zM665 95.4h1V99.7h-1zM666 95.8h1V100.1h-1zM667 95.0h1V100.5h-1zM668 93.8h1V100.2h-1zM669 94.7h1V103.2h-1zM670 94.7h1V99.0h-1zM671 91.2h1V99.7h-1zM672 95.8h1V99.5h-1zM673 95.5h1V102.1h-1zM674 94.0h1V100.8h-1zM675 92.5h1V99.2h-1zM676 95.6h1V100.7h-1zM677 93.0h1V100.6h-1zM678 95.1h1V99.7h-1zM679 95.5h1V99.7h-1zM680 95.1h1V100.1h-1zM681 94.8h1V99.1h-1zM682 94.2h1V99.1h-1zM683 94.2h1V99.6h-1zM684 95.8h1V100.2h-1zM685 94.8h1V99.2h-1zM686 91.5h1V102.4h-1zM687 96.0h1V100.6h-1zM688 95.8h1V99.6h-1zM689 95.7h1V99.2h-1zM690 95.1h1V100.2h-1zM691 94.0h1V99.0h-1zM692 92.7h1V101.1h-1zM693 96.0h1V100.2h-1zM694 94.4h1V99.3h-1zM695 95.0h1V100.1h-1zM696 95.8h1V101.6h-1zM697 94.6h1V102.0h-1zM698 94.6h1V99.3h-1zM699 95.9h1V99.7h-1zM700 94.6h1V100.7h-1zM701 94.9h1V99.3h-1zM702 95.5h1V100.6h-1zM703 95.5h1V101.6h-1zM704 94.2h1V99.0h-1zM705 93.4h1V100.9h-1zM706 95.1h1V99.1h-1zM707 95.8h1V99.2h-1zM708 95.3h1V99.3h-1zM709 95.6h1V101.7h-1zM710 95.5h1V99.6h-1zM711 93.8h1V99.8h-1zM712 95.8h1V100.0h-1zM713 95.6h1V100.0h-1zM714 95.3h1V99.4h-1zM715 94.8h1V102.5h-1zM716 94.9h1V100.0h-1zM717 96.0h1V99.3h-1zM718 93.8h1V99.5h-1zM719 95.0h1V99.8h-1zM720 95.2h1V100.6h-1zM721 94.2h1V99.5h-1zM722 95.9h1V102.0h-1zM723 95.6h1V99.3h-1zM724 94.3h1V99.6h-1zM725 94.3h1V99.6h-1zM726 93.8h1V100.0h-1zM727 95.9h1V99.0h-1zM728 95.9h1V100.0h-1zM729 94.7h1V100.4h-1zM730 94.6h1V100.6h-1zM731 95.9h1V99.4h-1zM732 94.6h1V99.3h-1zM733 95.7h1V99.8h-1zM734 95.0h1V99.3h-1zM735 95.0h1V99.4h-1zM736 95.5h1V100.8h-1zM737 93.3h1V99.8h-1zM738 94.8h1V102.0h-1zM739 91.8h1V99.7h-1zM740 95.6h1V100.3h-1zM741 95.8h1V102.5h-1zM742 93.5h1V99.5h-1zM743 94.5h1V99.9h-1zM744 93.6h1V102.1h-1zM745 95.8h1V99.8h-1zM746 95.4h1V99.3h-1zM747 95.6h1V99.6h-1zM748 95.8h1V99.2h-1zM749 94.4h1V100.5h-1zM750 91.9h1V102.5h-1zM751 93.2h1V99.1h-1zM752 94.8h1V100.6h-1zM753 94.8h1V99.8h-1zM754 94.7h1V99.1h-1zM755 95.5h1V101.5h-1zM756 94.9h1V99.2h-1zM757 95.0h1V99.3h-1zM758 96.0h1V99.8h-1zM759 93.0h1V99.6h-1zM760 93.4h1V101.7h-1zM761 94.9h1V100.2h-1zM762 92.8h1V99.6h-1zM763 94.7h1V101.3h-1zM764 95.6h1V99.4h-1zM765 93.4h1V99.9h-1zM766 95.5h1V99.6h-1zM767 95.4h1V99.6h-1zM768 95.8h1V99.1h-1zM769 95.6h1V100.5h-1zM770 96.0h1V100.9h-1zM771 95.0h1V100.8h-1zM772 95.8h1V100.6h-1zM773 95.2h1V99.3h-1zM774 94.4h1V99.4h-1zM775 94.8h1V100.8h-1zM776 93.2h1V99.2h-1zM777 95.2h1V99.5h-1zM778 94.8h1V99.9h-1zM779 94.4h1V101.9h-1zM780 94.6h1V99.2h-1zM781 94.1h1V100.7h-1zM782 95.9h1V99.5h-1zM783 94.4h1V101.7h-1zM784 94.5h1V100.7h-1zM785 95.9h1V101.3h-1zM786 93.9h1V99.9h-1zM787 95.1h1V101.9h-1zM788 93.6h1V101.1h-1zM789 94.2h1V99.7h-1zM790 93.4h1V99.1h-1zM791 94.4h1V100.3h-1zM792 93.9h1V101.8h-1zM793 95.4h1V99.9h-1zM794 96.0h1V99.4h-1zM795 95.5h1V100.2h-1zM796 95.6h1V99.7h-1zM797 94.5h1V99.7h-1zM798 94.4h1V101.7h-1zM799 93.0h1V99.6h-1zM800 95.4h1V99.7h-1zM801 95.1h1V99.7h-1zM802 89.9h1V100.7h-1zM803 95.3h1V99.0h-1zM804 95.7h1V101.5h-1zM805 95.1h1V100.1h-1zM806 92.7h1V100.1h-1zM807 94.9h1V99.3h-1zM808 95.0h1V100.0h-1zM809 94.9h1V101.5h-1zM810 95.4h1V100.4h-1zM811 94.5h1V101.2h-1zM812 94.1h1V103.0h-1zM813 95.7h1V99.2h-1zM814 95.4h1V99.8h-1zM815 94.8h1V99.3h-1zM816 95.4h1V100.7h-1zM817 95.5h1V102.5h-1zM818 95.0h1V102.4h-1zM819 95.5h1V100.4h-1zM820 95.0h1V99.3h-1zM821 95.2h1V99.2h-1zM822 95.7h1V100.8h-1zM823 95.1h1V99.7h-1zM824 95.3h1V101.5h-1zM825 94.6h1V102.9h-1zM826 94.5h1V99.3h-1zM827 95.8h1V100.1h-1zM828 95.6h1V100.6h-1zM829 93.8h1V99.6h-1zM830 95.1h1V101.0h-1zM831 96.0h1V100.8h-1zM832 95.2h1V99.7h-1zM833 94.8h1V100.4h-1zM834 94.2h1V99.7h-1zM835 93.0h1V100.0h-1zM836 94.2h1V100.3h-1zM837 94.9h1V99.5h-1zM838 95.2h1V100.4h-1zM839 95.7h1V101.3h-1zM840 95.0h1V100.5h-1zM841 93.9h1V100.5h-1zM842 92.4h1V101.0h-1zM843 93.5h1V99.6h-1zM844 95.9h1V101.9h-1zM845 93.9h1V99.3h-1zM846 93.9h1V101.9h-1zM847 94.0h1V99.7h-1zM848 95.9h1V100.0h-1zM849 95.2h1V99.8h-1zM850 95.6h1V101.1h-1zM851 93.1h1V101.9h-1zM852 95.6h1V99.2h-1zM853 95.0h1V99.6h-1zM854 95.6h1V101.4h-1zM855 95.0h1V100.7h-1zM856 95.1h1V100.0h-1zM857 93.7h1V99.3h-1zM858 95.3h1V100.8h-1zM859 94.6h1V100.8h-1zM860 95.0h1V102.1h-1zM861 94.3h1V100.5h-1zM862 93.6h1V99.2h-1zM863 94.0h1V100.1h-1zM864 94.8h1V99.3h-1zM865 95.2h1V102.6h-1zM866 92.4h1V99.7h-1zM867 93.5h1V99.3h-1zM868 95.2h1V101.8h-1zM869 95.3h1V101.8h-1zM870 95.9h1V100.2h-1zM872 191.9h1V195.1h-1zM873 191.9h1V195.1h-1zM874 191.7h1V195.1h-1zM875 191.0h1V195.5h-1zM876 190.3h1V195.2h-1zM877 189.2h1V196.3h-1zM878 190.5h1V195.4h-1zM879 191.6h1V196.6h-1zM880 190.5h1V196.1h-1zM881 190.9h1V199.2h-1zM882 191.6h1V195.3h-1zM883 191.8h1V196.2h-1zM884 190.4h1V196.5h-1zM885 191.2h1V195.3h-1zM886 191.7h1V196.8h-1zM887 191.1h1V195.5h-1zM888 189.4h1V199.4h-1zM889 188.9h1V196.2h-1zM890 191.9h1V195.0h-1zM891 191.4h1V196.3h-1zM892 190.2h1V195.5h-1zM893 191.9h1V197.6h-1zM894 189.5h1V196.2h-1zM895 191.5h1V195.3h-1zM896 191.7h1V195.4h-1zM897 191.7h1V195.5h-1zM898 191.9h1V195.7h-1zM899 191.6h1V195.1h-1zM900 190.8h1V195.8h-1zM901 190.7h1V196.1h-1zM902 191.2h1V197.5h-1zM903 190.2h1V195.3h-1zM904 191.5h1V195.5h-1zM905 191.8h1V195.9h-1zM906 191.8h1V195.5h-1zM907 190.4h1V197.3h-1zM908 190.0h1V195.1h-1zM909 191.8h1V195.1h-1zM910 191.1h1V195.5h-1zM911 190.4h1V198.8h-1zM912 191.3h1V196.6h-1zM913 191.3h1V195.2h-1zM914 189.3h1V195.7h-1zM915 190.2h1V197.9h-1zM916 191.8h1V195.1h-1zM917 191.3h1V195.0h-1zM918 191.3h1V196.9h-1zM919 192.0h1V195.3h-1zM920 191.8h1V198.1h-1zM921 191.1h1V196.3h-1zM922 190.5h1V195.5h-1zM923 188.8h1V195.1h-1zM924 191.0h1V195.7h-1zM925 191.5h1V199.0h-1zM926 188.3h1V196.9h-1zM927 190.7h1V196.7h-1zM928 191.2h1V197.0h-1zM929 190.1h1V198.9h-1zM930 190.7h1V196.2h-1zM931 191.8h1V198.0h-1zM932 188.4h1V196.5h-1zM933 190.3h1V196.1h-1zM934 191.7h1V196.1h-1zM935 191.7h1V195.8h-1zM936 191.1h1V198.0h-1zM937 190.2h1V197.1h-1zM938 190.4h1V196.2h-1zM939 190.4h1V195.2h-1zM940 189.9h1V195.6h-1zM941 189.8h1V195.9h-1zM942 189.8h1V196.8h-1zM943 190.9h1V197.9h-1zM944 190.8h1V197.0h-1zM945 191.7h1V195.7h-1zM946 189.5h1V197.4h-1zM947 189.8h1V196.2h-1zM948 191.1h1V195.2h-1zM949 191.6h1V195.5h-1zM950 191.9h1V197.4h-1zM951 191.6h1V195.8h-1zM952 190.0h1V196.0h-1zM953 192.0h1V196.6h-1zM954 191.9h1V195.2h-1zM955 190.6h1V195.2h-1zM956 190.3h1V195.1h-1zM957 190.6h1V199.5h-1zM958 191.0h1V195.3h-1zM959 191.9h1V197.7h-1zM960 190.4h1V195.0h-1zM961 189.5h1V198.6h-1zM962 191.6h1V195.5h-1zM963 191.7h1V197.0h-1zM964 190.8h1V195.4h-1zM965 190.1h1V197.3h-1zM966 191.7h1V195.3h-1zM967 191.8h1V196.0h-1zM968 190.7h1V195.7h-1zM969 190.4h1V196.2h-1zM970 190.2h1V196.1h-1zM971 191.8h1V195.4h-1zM972 191.2h1V196.7h-1zM973 191.0h1V198.3h-1zM974 191.0h1V196.0h-1zM975 190.6h1V195.1h-1zM976 191.5h1V195.6h-1zM977 191.9h1V196.3h-1zM978 189.4h1V196.7h-1zM979 191.9h1V196.1h-1zM980 191.4h1V195.6h-1zM981 191.4h1V195.1h-1zM982 190.6h1V195.7h-1zM983 190.8h1V197.9h-1zM984 189.1h1V195.2h-1zM985 191.8h1V197.3h-1zM986 188.8h1V198.0h-1zM987 191.9h1V197.2h-1zM988 190.8h1V196.1h-1zM989 191.8h1V198.0h-1zM990 191.1h1V195.0h-1zM991 189.0h1V195.0h-1zM992 191.4h1V195.9h-1zM993 190.8h1V195.9h-1zM994 191.7h1V195.4h-1zM995 191.8h1V197.1h-1zM996 191.2h1V195.0h-1zM997 191.3h1V195.2h-1zM998 191.8h1V195.8h-1zM999 188.6h1V195.9h-1zM1000 189.8h1V195.8h-1zM1001 191.5h1V197.5h-1zM1002 191.9h1V195.9h-1zM1003 192.0h1V195.3h-1zM1004 191.6h1V196.7h-1zM1005 191.3h1V195.5h-1zM1006 192.0h1V195.7h-1zM1007 191.1h1V196.7h-1zM1008 191.6h1V197.8h-1zM1009 191.7h1V198.0h-1zM1010 190.7h1V195.9h-1zM1011 190.9h1V195.2h-1zM1012 190.7h1V195.6h-1zM1013 192.0h1V196.8h-1zM1014 190.1h1V195.3h-1zM1015 189.4h1V195.9h-1zM1016 191.0h1V195.8h-1zM1017 188.7h1V197.2h-1zM1018 189.0h1V195.7h-1zM1019 191.5h1V198.1h-1zM1020 191.1h1V195.6h-1zM1021 191.4h1V195.3h-1zM1022 191.6h1V195.6h-1zM1023 191.7h1V195.5h-1zM1024 191.3h1V195.6h-1zM1025 190.9h1V195.8h-1zM1026 191.7h1V196.3h-1zM1027 191.5h1V198.0h-1zM1028 191.5h1V195.8h-1zM1029 191.3h1V195.0h-1zM1030 191.1h1V198.0h-1zM1031 191.0h1V199.4h-1zM1032 190.0h1V196.6h-1zM1033 190.7h1V196.8h-1zM1034 191.2h1V196.5h-1zM1035 191.0h1V195.7h-1zM1036 192.0h1V195.9h-1zM1037 190.1h1V195.1h-1zM1038 192.0h1V196.8h-1zM1039 191.0h1V196.1h-1zM1040 190.7h1V196.9h-1zM1041 190.2h1V197.2h-1zM1042 191.8h1V195.3h-1zM1043 190.9h1V195.3h-1zM1044 191.4h1V195.6h-1zM1045 188.7h1V195.6h-1zM1046 191.6h1V196.6h-1zM1047 190.2h1V196.2h-1zM1048 190.3h1V196.9h-1zM1049 191.9h1V196.0h-1zM1050 190.7h1V196.0h-1zM1051 190.8h1V195.1h-1zM1052 191.7h1V196.1h-1zM1053 191.8h1V197.4h-1zM1054 190.3h1V197.4h-1zM1055 191.1h1V196.9h-1zM1056 191.9h1V197.2h-1zM1057 190.7h1V195.1h-1zM1058 191.3h1V195.3h-1zM1059 191.9h1V195.8h-1zM1060 191.7h1V195.6h-1zM1061 187.3h1V195.8h-1zM1062 191.9h1V197.4h-1zM1063 191.9h1V195.3h-1zM1064 189.6h1V196.7h-1zM1065 191.4h1V195.2h-1zM1066 190.6h1V195.8h-1zM1067 190.7h1V195.7h-1zM1068 191.0h1V196.6h-1zM1069 190.1h1V196.4h-1zM1070 191.5h1V196.5h-1zM1071 191.6h1V196.8h-1zM1072 191.6h1V195.2h-1zM1073 191.6h1V195.2h-1zM1074 191.2h1V196.0h-1zM1075 190.9h1V197.2h-1zM1076 190.6h1V196.5h-1zM1077 191.3h1V195.4h-1zM1078 191.4h1V196.3h-1zM1079 189.1h1V197.0h-1zM1080 189.4h1V195.6h-1zM1081 191.1h1V195.6h-1zM1082 189.0h1V196.1h-1zM1083 189.7h1V195.1h-1zM1084 190.2h1V197.0h-1zM1085 191.5h1V196.5h-1zM1086 191.4h1V195.2h-1zM1087 191.6h1V196.5h-1zM1088 190.6h1V195.9h-1zM1089 189.3h1V196.3h-1zM1090 190.9h1V195.0h-1zM1091 189.3h1V195.6h-1zM1092 191.4h1V196.0h-1zM1093 191.9h1V196.2h-1zM1094 190.7h1V195.8h-1zM1095 191.7h1V196.2h-1zM1096 189.3h1V196.6h-1zM1097 191.8h1V196.9h-1zM1098 186.7h1V195.9h-1zM1099 191.3h1V196.9h-1zM1100 190.0h1V196.3h-1zM1101 191.3h1V197.2h-1zM1102 191.1h1V195.4h-1zM1103 190.5h1V197.8h-1zM1104 190.9h1V195.5h-1zM1105 188.2h1V196.2h-1zM1106 191.4h1V197.5h-1zM1107 191.9h1V195.3h-1zM1108 190.8h1V195.6h-1zM1109 191.4h1V196.0h-1zM1110 190.2h1V195.8h-1zM1111 192.0h1V195.1h-1zM1112 191.9h1V195.0h-1zM1113 191.2h1V196.4h-1zM1114 189.1h1V195.7h-1zM1115 191.5h1V196.1h-1zM1116 191.4h1V197.0h-1zM1117 191.6h1V196.0h-1zM1118 191.5h1V195.5h-1zM1119 188.8h1V197.7h-1zM1120 190.8h1V196.6h-1zM1121 190.9h1V198.0h-1zM1122 188.6h1V195.6h-1zM1123 191.9h1V195.9h-1zM1124 190.9h1V195.8h-1zM1125 191.5h1V195.8h-1zM1126 188.1h1V196.5h-1zM1127 191.3h1V196.9h-1zM1128 189.6h1V199.0h-1zM1129 187.9h1V196.4h-1zM1130 192.0h1V195.6h-1zM1131 190.6h1V199.8h-1zM1132 191.8h1V195.2h-1zM1133 191.6h1V196.9h-1zM1134 191.7h1V196.2h-1zM1135 188.1h1V195.0h-1zM1136 191.8h1V195.9h-1zM1137 190.6h1V195.9h-1zM1138 191.0h1V196.1h-1zM1139 189.8h1V196.5h-1zM1140 192.0h1V195.9h-1zM1141 187.3h1V195.6h-1zM1142 190.0h1V195.4h-1zM1143 191.9h1V196.1h-1zM1144 191.4h1V195.4h-1zM1145 187.0h1V195.8h-1zM1146 190.9h1V196.6h-1zM1147 191.3h1V195.7h-1zM1148 190.3h1V195.6h-1zM1149 191.0h1V196.1h-1zM1150 191.0h1V196.3h-1zM1151 191.9h1V198.2h-1zM1152 189.1h1V196.4h-1zM1153 190.9h1V197.5h-1zM1154 190.7h1V195.1h-1zM1155 190.2h1V196.4h-1zM1156 189.5h1V198.7h-1zM1157 189.8h1V196.7h-1zM1158 190.9h1V195.1h-1zM1159 191.9h1V195.4h-1zM1160 190.5h1V197.4h-1zM1161 190.4h1V197.5h-1zM1162 188.6h1V196.2h-1zM1163 190.4h1V197.5h-1zM1164 191.1h1V197.8h-1zM1165 190.6h1V195.7h-1zM1166 191.6h1V195.0h-1zM1167 192.0h1V195.9h-1zM1168 190.9h1V195.8h-1zM1169 191.9h1V195.8h-1zM1170 190.6h1V195.4h-1zM1171 190.8h1V197.4h-1zM1172 191.1h1V195.5h-1zM1173 192.0h1V195.7h-1zM1174 190.4h1V196.1h-1zM1175 190.3h1V198.5h-1zM1176 190.7h1V197.7h-1zM1177 189.7h1V196.4h-1zM1178 191.7h1V196.1h-1zM1179 189.3h1V195.5h-1zM1180 191.5h1V195.8h-1zM1181 190.5h1V196.3h-1zM1182 188.5h1V197.5h-1zM1183 191.2h1V195.1h-1zM1184 191.6h1V195.9h-1zM1185 191.3h1V197.2h-1zM1186 191.5h1V198.6h-1zM1187 191.8h1V197.3h-1zM1188 191.8h1V196.1h-1zM1189 191.8h1V195.9h-1zM1190 191.5h1V195.0h-1zM1191 191.5h1V195.5h-1zM1192 191.1h1V195.9h-1zM1193 190.5h1V196.9h-1zM1194 190.2h1V196.1h-1zM1195 190.3h1V195.3h-1zM1196 191.5h1V196.4h-1zM1197 191.0h1V196.0h-1zM1198 191.8h1V196.4h-1zM1199 191.6h1V195.7h-1zM1200 191.8h1V196.9h-1zM1201 192.0h1V197.7h-1zM1202 191.7h1V196.2h-1zM1203 190.1h1V195.2h-1zM1204 191.4h1V195.8h-1zM1205 191.9h1V195.8h-1zM1206 191.0h1V196.5h-1zM1207 191.9h1V198.3h-1zM1208 190.2h1V195.3h-1zM1209 189.5h1V196.1h-1zM1210 190.9h1V195.1h-1zM1211 191.4h1V197.5h-1zM1212 190.8h1V195.5h-1zM1213 191.7h1V195.6h-1zM1214 191.4h1V195.9h-1zM1215 191.3h1V195.3h-1zM1216 190.1h1V196.8h-1zM1217 190.1h1V195.5h-1zM1218 190.8h1V195.1h-1zM1219 191.2h1V196.5h-1zM1220 191.2h1V195.6h-1zM1221 191.3h1V195.5h-1zM1222 191.9h1V195.3h-1zM1223 190.2h1V195.9h-1zM1224 191.0h1V198.5h-1zM1225 191.9h1V197.4h-1zM1226 191.8h1V195.2h-1zM1227 191.8h1V197.1h-1zM1228 190.9h1V195.4h-1zM1229 191.6h1V197.3h-1zM1230 191.8h1V195.5h-1zM1231 187.1h1V196.4h-1zM1232 190.4h1V195.0h-1zM1233 191.0h1V195.0h-1zM1234 191.3h1V195.1h-1zM1235 190.3h1V196.7h-1zM1236 191.3h1V195.8h-1zM1237 191.9h1V195.5h-1zM1238 190.7h1V196.2h-1zM1239 190.9h1V197.0h-1zM1240 190.9h1V197.3h-1zM1241 191.3h1V196.1h-1zM1242 191.7h1V196.3h-1zM1243 192.0h1V195.3h-1zM1244 191.3h1V196.6h-1zM1245 191.8h1V195.7h-1zM1246 190.1h1V198.3h-1zM1247 190.0h1V196.4h-1zM1248 191.3h1V195.8h-1zM1249 190.4h1V196.4h-1zM1250 189.9h1V195.8h-1zM1251 191.1h1V196.0h-1zM1252 191.7h1V198.3h-1zM1253 190.1h1V195.3h-1zM1254 191.0h1V199.7h-1zM1255 189.9h1V195.8h-1zM1256 191.5h1V195.6h-1zM1257 190.7h1V195.2h-1zM1258 191.5h1V195.5h-1zM1259 189.7h1V196.3h-1zM1260 190.0h1V195.8h-1zM1261 191.3h1V199.6h-1zM1262 190.4h1V197.6h-1zM1263 189.9h1V198.3h-1zM1264 191.6h1V196.9h-1zM1265 191.6h1V196.1h-1zM1266 190.9h1V195.3h-1zM1267 190.0h1V195.3h-1zM1268 191.5h1V195.6h-1zM1269 191.3h1V198.8h-1zM1270 190.6h1V197.4h-1zM1271 189.8h1V196.7h-1zM1272 190.8h1V195.1h-1zM1273 191.9h1V195.0h-1zM1274 191.3h1V196.3h-1zM1275 190.5h1V196.5h-1zM1276 191.6h1V196.8h-1zM1277 190.3h1V197.6h-1zM1278 191.3h1V195.0h-1zM1279 189.7h1V196.9h-1zM1280 190.7h1V195.3h-1zM1281 189.1h1V195.3h-1zM1282 190.7h1V195.6h-1zM1283 191.3h1V196.8h-1zM1284 191.3h1V197.9h-1zM1285 191.8h1V195.6h-1zM1286 190.2h1V197.1h-1zM1287 189.7h1V195.5h-1zM1288 191.6h1V196.3h-1zM1289 191.9h1V196.6h-1zM1290 190.6h1V196.2h-1zM1291 191.9h1V195.3h-1zM1292 190.9h1V198.3h-1zM1293 190.7h1V195.1h-1zM1294 190.1h1V196.2h-1zM1295 190.5h1V196.0h-1zM1296 191.2h1V195.4h-1zM1297 191.0h1V195.6h-1zM1298 190.3h1V195.1h-1zM1299 191.4h1V195.1h-1zM1313 95.9h1V99.8h-1zM1314 95.9h1V99.2h-1zM1315 93.1h1V99.6h-1zM1316 95.7h1V100.0h-1zM1317 91.7h1V102.5h-1zM1318 95.5h1V99.6h-1zM1319 95.5h1V99.3h-1zM1320 94.8h1V99.2h-1zM1321 95.0h1V99.2h-1zM1322 94.4h1V100.4h-1zM1323 93.7h1V99.8h-1zM1324 94.4h1V100.0h-1zM1325 93.6h1V100.0h-1zM1326 95.7h1V99.2h-1zM1327 95.5h1V103.3h-1zM1328 95.2h1V100.8h-1zM1329 94.6h1V100.0h-1zM1330 94.0h1V101.7h-1zM1331 95.2h1V99.5h-1zM1332 91.3h1V99.6h-1zM1333 93.9h1V100.4h-1zM1334 94.4h1V100.0h-1zM1335 95.5h1V100.2h-1zM1336 95.7h1V102.3h-1zM1337 93.6h1V99.0h-1zM1338 95.8h1V100.1h-1zM1339 95.5h1V102.3h-1zM1340 95.1h1V99.3h-1zM1341 94.8h1V103.0h-1zM1342 95.5h1V100.0h-1zM1343 95.4h1V99.5h-1zM1344 93.1h1V100.0h-1zM1345 93.0h1V99.3h-1zM1346 95.0h1V99.5h-1zM1347 95.3h1V100.0h-1zM1348 94.9h1V101.7h-1zM1349 94.7h1V99.1h-1zM1350 95.9h1V100.9h-1zM1351 95.3h1V99.7h-1zM1352 95.6h1V100.1h-1zM1353 94.5h1V100.5h-1zM1354 95.3h1V100.1h-1zM1355 95.6h1V101.3h-1zM1356 95.7h1V101.2h-1zM1357 95.9h1V99.1h-1zM1358 93.0h1V99.0h-1zM1359 95.5h1V99.1h-1zM1360 95.1h1V99.0h-1zM1361 93.5h1V104.1h-1zM1362 94.1h1V99.2h-1zM1363 92.3h1V99.7h-1zM1364 95.4h1V99.5h-1zM1365 95.7h1V100.7h-1zM1366 95.4h1V100.4h-1zM1367 95.6h1V99.4h-1zM1368 94.4h1V99.7h-1zM1369 95.8h1V100.3h-1zM1370 95.8h1V99.5h-1zM1371 96.0h1V101.2h-1zM1372 94.9h1V99.0h-1zM1373 94.0h1V102.6h-1zM1374 95.8h1V100.9h-1zM1375 93.5h1V100.6h-1zM1376 95.7h1V100.6h-1zM1377 94.8h1V99.1h-1zM1378 95.3h1V100.5h-1zM1379 95.7h1V99.2h-1zM1380 95.0h1V100.6h-1zM1381 93.5h1V99.8h-1zM1382 95.7h1V99.3h-1zM1383 92.6h1V99.1h-1zM1384 95.5h1V99.3h-1zM1385 91.3h1V99.2h-1zM1386 95.6h1V101.7h-1zM1387 96.0h1V100.6h-1zM1388 95.9h1V100.7h-1zM1389 94.6h1V99.7h-1zM1390 95.7h1V99.0h-1zM1391 95.5h1V102.1h-1zM1392 95.0h1V100.1h-1zM1393 94.9h1V101.5h-1zM1394 94.3h1V99.3h-1zM1395 95.4h1V99.6h-1zM1396 95.2h1V99.7h-1zM1397 95.5h1V101.9h-1zM1398 95.2h1V101.4h-1zM1399 94.8h1V101.8h-1zM1400 95.3h1V99.3h-1zM1401 92.4h1V100.2h-1zM1402 95.4h1V103.2h-1zM1403 95.3h1V99.0h-1zM1404 95.4h1V101.8h-1zM1405 93.6h1V101.3h-1zM1406 95.8h1V100.7h-1zM1407 94.9h1V101.0h-1zM1408 95.3h1V100.7h-1zM1409 95.9h1V102.5h-1zM1410 95.3h1V99.6h-1zM1411 94.5h1V100.4h-1zM1412 95.2h1V99.6h-1zM1413 94.7h1V99.6h-1zM1414 95.8h1V101.4h-1zM1415 95.2h1V99.5h-1zM1416 93.9h1V99.7h-1zM1417 95.5h1V100.8h-1zM1418 95.8h1V99.6h-1zM1419 95.6h1V100.9h-1zM1420 95.5h1V101.3h-1zM1421 94.0h1V100.9h-1zM1422 93.8h1V100.0h-1zM1423 94.9h1V101.2h-1zM1424 94.6h1V99.1h-1zM1425 93.2h1V99.7h-1zM1426 94.4h1V99.8h-1zM1427 95.7h1V100.3h-1zM1428 93.7h1V100.5h-1zM1429 94.3h1V101.1h-1zM1430 90.3h1V100.9h-1zM1431 94.4h1V100.6h-1zM1432 92.4h1V99.2h-1zM1433 93.2h1V100.8h-1zM1434 94.6h1V99.8h-1zM1435 95.0h1V99.9h-1zM1436 94.9h1V99.7h-1zM1437 92.4h1V100.0h-1zM1438 94.8h1V99.3h-1zM1439 94.7h1V99.1h-1zM1440 94.9h1V99.4h-1zM1441 95.3h1V99.6h-1zM1442 94.4h1V99.3h-1zM1443 95.6h1V100.1h-1zM1444 95.9h1V99.4h-1zM1445 95.9h1V101.6h-1zM1446 95.3h1V99.7h-1zM1447 95.7h1V99.7h-1zM1448 95.8h1V100.1h-1zM1449 95.3h1V102.9h-1zM1450 95.3h1V101.3h-1zM1451 94.4h1V101.3h-1zM1452 95.6h1V100.9h-1zM1453 95.7h1V100.0h-1zM1454 95.9h1V100.6h-1zM1455 90.8h1V103.1h-1zM1456 94.4h1V100.3h-1zM1457 95.7h1V100.5h-1zM1458 94.0h1V99.5h-1zM1459 95.1h1V99.0h-1zM1460 95.2h1V100.0h-1zM1461 95.6h1V100.4h-1zM1462 95.7h1V101.0h-1zM1463 93.6h1V102.8h-1zM1464 95.7h1V99.4h-1zM1465 95.7h1V101.5h-1zM1466 96.0h1V100.9h-1zM1467 92.2h1V99.9h-1zM1468 95.6h1V102.7h-1zM1469 95.9h1V99.2h-1zM1470 95.9h1V100.1h-1zM1471 96.0h1V100.6h-1zM1472 94.0h1V99.3h-1zM1473 94.2h1V100.0h-1zM1474 95.7h1V99.6h-1zM1475 93.8h1V102.7h-1zM1476 95.9h1V100.5h-1zM1477 92.3h1V99.0h-1zM1478 95.2h1V99.9h-1zM1479 95.5h1V101.8h-1zM1480 94.6h1V100.6h-1zM1481 95.9h1V100.3h-1zM1482 93.6h1V100.8h-1zM1483 95.4h1V99.5h-1zM1484 94.3h1V100.6h-1zM1485 95.6h1V101.7h-1zM1486 95.8h1V100.0h-1zM1487 96.0h1V99.4h-1zM1488 95.6h1V100.3h-1zM1489 95.7h1V101.7h-1zM1490 95.4h1V100.1h-1zM1491 95.5h1V99.1h-1zM1492 95.8h1V99.1h-1zM1493 94.2h1V103.0h-1zM1494 93.0h1V99.3h-1zM1495 95.8h1V99.7h-1zM1496 95.4h1V99.3h-1zM1497 91.8h1V101.9h-1zM1498 92.9h1V100.6h-1zM1499 95.3h1V99.0h-1zM1500 94.3h1V100.8h-1zM1501 95.9h1V100.3h-1zM1502 94.9h1V99.9h-1zM1503 96.0h1V99.2h-1zM1504 92.3h1V99.9h-1zM1505 94.7h1V100.3h-1zM1506 95.4h1V100.8h-1zM1507 93.3h1V100.2h-1zM1508 94.3h1V104.3h-1zM1509 96.0h1V100.7h-1zM1510 93.5h1V100.0h-1zM1511 94.8h1V99.7h-1zM1512 95.1h1V99.9h-1zM1513 94.9h1V99.4h-1zM1514 93.7h1V101.3h-1zM1515 95.0h1V99.8h-1zM1516 96.0h1V99.2h-1zM1517 95.7h1V103.0h-1zM1518 95.5h1V99.8h-1zM1519 95.6h1V100.3h-1zM1520 95.3h1V103.1h-1zM1521 94.1h1V99.4h-1zM1522 95.9h1V99.4h-1zM1523 93.5h1V99.4h-1zM1525 190.7h1V195.9h-1zM1526 189.6h1V195.8h-1zM1527 191.0h1V195.5h-1zM1528 191.2h1V196.7h-1zM1529 191.0h1V196.6h-1zM1530 190.8h1V196.6h-1zM1531 191.3h1V195.3h-1zM1532 190.8h1V195.8h-1zM1533 190.9h1V197.1h-1zM1534 191.0h1V195.4h-1zM1535 191.4h1V196.0h-1zM1536 190.8h1V195.2h-1zM1537 189.6h1V196.2h-1zM1538 190.2h1V195.3h-1zM1539 190.4h1V196.9h-1zM1540 190.6h1V196.4h-1zM1541 189.2h1V196.4h-1zM1542 191.2h1V195.4h-1zM1543 191.0h1V195.3h-1zM1544 191.8h1V196.1h-1zM1545 191.2h1V197.5h-1zM1546 191.5h1V195.8h-1zM1547 190.9h1V195.7h-1zM1548 189.0h1V196.1h-1zM1549 191.7h1V195.5h-1zM1550 190.6h1V195.6h-1zM1551 190.3h1V195.2h-1zM1552 191.9h1V197.3h-1zM1553 191.5h1V195.6h-1zM1554 192.0h1V195.7h-1zM1555 191.2h1V195.6h-1zM1556 191.9h1V196.4h-1zM1557 191.6h1V200.0h-1zM1558 189.2h1V195.1h-1zM1559 191.3h1V195.7h-1zM1560 190.6h1V196.2h-1zM1561 191.0h1V197.0h-1zM1562 191.5h1V195.4h-1zM1563 190.8h1V196.4h-1zM1564 189.8h1V196.0h-1zM1565 189.9h1V196.2h-1zM1566 190.0h1V196.4h-1zM1567 191.5h1V195.1h-1zM1568 191.3h1V199.7h-1zM1569 191.6h1V198.6h-1zM1570 189.9h1V195.5h-1zM1571 190.0h1V195.2h-1zM1572 191.6h1V196.1h-1zM1573 190.9h1V195.4h-1zM1574 191.1h1V196.0h-1zM1575 189.9h1V195.5h-1zM1576 190.8h1V198.1h-1zM1577 191.5h1V195.4h-1zM1578 191.4h1V196.8h-1zM1579 190.2h1V197.1h-1zM1580 191.2h1V196.2h-1zM1581 190.9h1V195.8h-1zM1582 191.6h1V196.8h-1zM1583 189.9h1V195.2h-1zM1584 191.5h1V196.2h-1zM1585 186.3h1V195.6h-1zM1586 188.7h1V195.2h-1zM1587 191.5h1V196.0h-1zM1588 189.7h1V195.2h-1zM1589 189.2h1V196.3h-1zM1590 190.8h1V195.5h-1zM1591 190.1h1V197.7h-1zM1592 190.7h1V196.7h-1zM1593 189.7h1V195.2h-1zM1594 192.0h1V196.8h-1zM1595 191.4h1V196.7h-1zM1596 191.4h1V196.9h-1zM1597 190.7h1V196.6h-1zM1598 191.4h1V195.5h-1zM1599 190.7h1V197.6h-1zM1600 191.7h1V198.5h-1zM1601 188.5h1V196.3h-1zM1602 191.1h1V198.5h-1zM1603 188.5h1V196.2h-1zM1604 188.1h1V195.3h-1zM1605 189.1h1V198.5h-1zM1606 191.9h1V196.5h-1zM1607 189.3h1V196.2h-1zM1608 191.9h1V195.2h-1zM1609 192.0h1V196.1h-1zM1610 188.8h1V198.8h-1zM1611 188.6h1V195.5h-1zM1612 189.9h1V195.5h-1zM1613 191.1h1V195.2h-1zM1614 191.8h1V196.8h-1zM1615 187.2h1V197.5h-1zM1616 191.4h1V195.3h-1zM1617 191.5h1V196.1h-1zM1618 191.5h1V195.8h-1zM1619 191.2h1V197.2h-1zM1620 192.0h1V197.9h-1zM1621 191.9h1V196.6h-1zM1622 189.7h1V195.8h-1zM1623 190.9h1V195.1h-1zM1624 191.4h1V196.0h-1zM1625 189.9h1V195.7h-1zM1626 191.5h1V195.3h-1zM1627 191.6h1V195.5h-1zM1628 190.7h1V195.2h-1zM1629 191.3h1V195.4h-1zM1630 188.9h1V197.4h-1zM1631 191.7h1V196.7h-1zM1632 190.3h1V199.2h-1zM1633 190.4h1V195.7h-1zM1634 189.1h1V197.9h-1zM1635 191.9h1V196.7h-1zM1636 190.2h1V196.6h-1zM1637 191.5h1V195.6h-1zM1638 190.9h1V195.3h-1zM1639 191.1h1V197.1h-1zM1640 190.1h1V196.0h-1zM1641 191.8h1V195.5h-1zM1642 190.8h1V195.2h-1zM1643 189.7h1V196.3h-1zM1644 191.8h1V195.2h-1zM1645 191.3h1V195.8h-1zM1646 191.8h1V195.0h-1zM1647 189.0h1V196.4h-1zM1648 188.6h1V195.0h-1zM1649 191.4h1V199.6h-1zM1650 191.3h1V196.3h-1zM1651 188.3h1V195.7h-1zM1652 191.7h1V197.1h-1zM1653 191.6h1V200.0h-1zM1654 191.8h1V196.1h-1zM1655 187.8h1V195.5h-1zM1656 191.6h1V196.4h-1zM1657 190.3h1V196.0h-1zM1658 191.2h1V197.2h-1zM1659 190.4h1V195.8h-1zM1660 191.7h1V195.3h-1zM1661 191.4h1V195.5h-1zM1662 191.4h1V195.6h-1zM1663 191.9h1V195.7h-1zM1664 191.3h1V195.3h-1zM1665 191.1h1V195.4h-1zM1666 190.7h1V195.8h-1zM1667 188.8h1V196.1h-1zM1668 191.6h1V195.4h-1zM1669 191.8h1V196.0h-1zM1670 190.6h1V195.5h-1zM1671 191.4h1V196.1h-1zM1672 189.7h1V195.3h-1zM1673 191.1h1V195.0h-1zM1674 191.4h1V198.6h-1zM1675 191.4h1V195.2h-1zM1676 191.2h1V196.5h-1zM1677 191.8h1V195.1h-1zM1678 191.6h1V196.3h-1zM1679 191.3h1V197.3h-1zM1680 189.9h1V196.9h-1zM1681 191.6h1V198.2h-1zM1682 191.7h1V195.6h-1zM1683 191.0h1V196.1h-1zM1684 190.9h1V196.7h-1zM1685 190.5h1V197.7h-1zM1686 190.5h1V195.8h-1zM1687 191.6h1V195.3h-1zM1688 190.8h1V195.8h-1zM1689 191.0h1V195.8h-1zM1690 190.0h1V195.2h-1zM1691 190.0h1V197.3h-1zM1692 191.7h1V196.5h-1zM1693 191.8h1V195.8h-1zM1694 190.3h1V195.8h-1zM1695 189.8h1V195.0h-1zM1696 189.2h1V195.1h-1zM1697 190.7h1V195.2h-1zM1698 190.4h1V195.8h-1zM1699 191.2h1V196.2h-1zM1700 191.8h1V195.2h-1zM1701 191.8h1V196.1h-1zM1702 189.5h1V195.1h-1zM1703 191.2h1V195.9h-1zM1704 190.5h1V195.6h-1zM1705 190.1h1V199.1h-1zM1706 188.2h1V195.3h-1zM1707 191.4h1V195.8h-1zM1708 191.6h1V197.5h-1zM1709 188.0h1V195.3h-1zM1710 190.9h1V195.6h-1zM1711 191.8h1V195.6h-1zM1712 191.5h1V196.2h-1zM1713 192.0h1V196.2h-1zM1714 190.9h1V197.6h-1zM1715 191.4h1V195.1h-1zM1716 191.8h1V196.4h-1zM1717 187.8h1V196.2h-1zM1718 191.1h1V196.1h-1zM1719 191.4h1V195.1h-1zM1720 191.2h1V197.1h-1zM1721 191.5h1V195.0h-1zM1722 191.9h1V198.5h-1zM1723 189.5h1V196.9h-1zM1724 189.1h1V195.2h-1zM1725 188.1h1V195.1h-1zM1726 191.2h1V195.4h-1zM1727 190.3h1V195.2h-1zM1728 189.3h1V196.5h-1zM1729 190.7h1V195.9h-1zM1730 190.8h1V197.4h-1zM1731 189.9h1V197.4h-1zM1732 190.5h1V196.5h-1zM1733 189.7h1V196.9h-1zM1734 190.3h1V196.7h-1zM1735 191.9h1V198.3h-1zM1736 190.8h1V197.8h-1zM1737 190.4h1V197.0h-1zM1738 191.0h1V195.4h-1zM1739 190.9h1V195.3h-1zM1740 191.9h1V196.5h-1zM1741 190.6h1V195.6h-1zM1742 191.3h1V196.4h-1zM1743 191.9h1V195.2h-1zM1744 190.2h1V196.3h-1z" fill="#ea4a64"/>
<path d="M216 96h1V194h-1z M870 96h1V194h-1z M1523 96h1V194h-1z" fill="#ea4a64" opacity="0.8"/>
<polyline points="4.0,161.5 215.0,161.5 216.5,161.5 217.0,150.0 217.5,170.0 218.0,158.5 219.0,161.0 871.0,161.0 880.0,156.7 1299.0,156.7" fill="none" stroke="#f0922e" stroke-width="1.3" stroke-linejoin="round" shape-rendering="crispEdges"/>
<polyline points="1313.0,161.0 1524.0,161.0 1531.0,155.0 1744.0,155.0" fill="none" stroke="#f0922e" stroke-width="1.6" stroke-linejoin="round" shape-rendering="crispEdges"/>
<path d="M27 85.5h1V87.7h-1zM28 85.5h1V88.0h-1zM29 85.6h1V88.1h-1zM30 85.6h1V88.6h-1zM31 85.5h1V87.7h-1zM32 85.4h1V87.7h-1zM33 85.5h1V87.5h-1zM34 85.1h1V87.5h-1zM35 84.9h1V87.7h-1zM36 85.5h1V87.8h-1zM37 85.3h1V87.4h-1zM38 85.2h1V87.4h-1zM39 85.5h1V87.4h-1zM40 84.8h1V87.7h-1zM41 85.5h1V87.5h-1zM42 85.4h1V87.5h-1zM43 85.3h1V87.8h-1zM44 85.0h1V87.5h-1zM45 85.2h1V87.8h-1zM46 85.1h1V87.5h-1zM47 85.4h1V87.5h-1zM48 85.5h1V87.4h-1zM49 85.1h1V87.7h-1zM50 84.8h1V87.6h-1zM51 85.5h1V87.6h-1zM52 85.3h1V87.6h-1zM53 85.5h1V87.8h-1zM54 85.5h1V87.6h-1zM55 85.5h1V87.5h-1zM56 85.5h1V88.0h-1zM57 84.9h1V88.3h-1zM58 85.3h1V87.7h-1zM59 85.4h1V87.9h-1zM60 85.3h1V87.8h-1zM61 85.3h1V87.8h-1zM62 84.5h1V87.7h-1zM63 85.2h1V88.0h-1zM64 85.3h1V87.8h-1zM65 85.4h1V87.8h-1zM66 85.6h1V87.8h-1zM67 85.2h1V87.8h-1zM68 85.5h1V87.5h-1zM69 85.2h1V87.5h-1zM70 85.4h1V87.7h-1zM71 85.3h1V87.5h-1zM72 85.5h1V87.5h-1zM73 85.6h1V87.7h-1zM74 85.0h1V87.6h-1zM75 85.1h1V87.6h-1zM76 85.3h1V87.7h-1zM77 85.6h1V87.4h-1zM78 85.5h1V87.5h-1zM79 85.3h1V87.7h-1zM80 85.5h1V87.5h-1zM81 85.3h1V87.9h-1zM82 85.4h1V88.2h-1zM83 85.3h1V88.0h-1zM84 85.5h1V87.7h-1zM85 85.5h1V87.7h-1zM86 85.3h1V87.5h-1zM87 85.4h1V87.7h-1zM88 85.3h1V87.7h-1zM89 85.5h1V87.8h-1zM90 85.3h1V87.7h-1zM91 84.8h1V87.7h-1zM92 85.1h1V87.5h-1zM93 85.1h1V87.7h-1zM94 85.3h1V87.6h-1zM95 85.5h1V87.6h-1zM96 85.6h1V87.5h-1zM97 85.3h1V87.5h-1zM98 85.3h1V87.5h-1zM99 85.5h1V87.7h-1zM100 85.5h1V87.9h-1zM101 85.4h1V87.5h-1zM102 85.4h1V87.7h-1zM103 85.6h1V87.6h-1zM104 85.4h1V87.5h-1zM105 85.2h1V87.6h-1zM106 85.3h1V87.6h-1zM107 85.5h1V87.5h-1zM108 85.4h1V87.6h-1zM109 85.6h1V87.6h-1zM110 84.7h1V87.6h-1zM111 85.6h1V87.5h-1zM112 85.3h1V87.7h-1zM113 85.4h1V87.5h-1zM114 85.1h1V87.9h-1zM115 85.5h1V87.8h-1zM116 85.5h1V87.9h-1zM117 85.2h1V87.6h-1zM118 85.5h1V87.6h-1zM119 85.4h1V87.9h-1zM120 85.4h1V87.4h-1zM121 85.3h1V87.7h-1zM122 84.9h1V87.6h-1zM123 85.6h1V87.6h-1zM124 85.3h1V87.7h-1zM125 85.0h1V87.5h-1zM126 85.5h1V87.4h-1zM127 84.8h1V88.1h-1zM128 84.7h1V87.5h-1zM129 85.0h1V87.6h-1zM130 85.5h1V87.5h-1zM131 85.5h1V87.6h-1zM132 85.4h1V88.2h-1zM133 85.0h1V87.8h-1zM134 85.4h1V87.6h-1zM135 85.3h1V87.5h-1zM136 85.3h1V87.9h-1zM137 85.5h1V87.9h-1zM138 85.5h1V87.4h-1zM139 85.5h1V87.5h-1zM140 85.2h1V87.8h-1zM141 85.2h1V87.7h-1zM142 85.2h1V87.5h-1zM143 85.2h1V87.7h-1zM144 85.3h1V87.5h-1zM145 84.9h1V87.6h-1zM146 85.6h1V88.0h-1zM147 85.5h1V87.7h-1zM148 85.3h1V87.5h-1zM149 85.4h1V87.5h-1zM150 85.3h1V88.9h-1zM151 85.5h1V87.8h-1zM152 85.4h1V87.5h-1zM153 85.5h1V87.4h-1zM154 85.5h1V87.7h-1zM155 85.6h1V87.9h-1zM156 85.5h1V87.5h-1zM157 85.6h1V87.9h-1zM158 85.5h1V87.6h-1zM159 85.3h1V87.5h-1zM160 85.3h1V87.7h-1zM161 85.5h1V87.9h-1zM162 85.1h1V87.5h-1zM163 85.4h1V87.7h-1zM164 83.9h1V88.0h-1zM165 85.0h1V87.5h-1zM166 85.4h1V87.4h-1zM167 85.3h1V87.5h-1zM168 84.9h1V87.5h-1zM169 85.2h1V87.7h-1zM170 85.5h1V87.6h-1zM171 85.3h1V87.9h-1zM172 85.0h1V87.8h-1zM173 85.6h1V87.9h-1zM174 85.4h1V87.5h-1zM175 85.1h1V87.4h-1zM176 85.4h1V87.8h-1zM177 85.2h1V87.6h-1zM178 85.6h1V87.6h-1zM179 85.1h1V87.9h-1zM180 85.6h1V87.4h-1zM181 85.3h1V87.7h-1zM182 85.4h1V88.1h-1zM183 85.3h1V88.1h-1zM184 85.1h1V88.0h-1zM185 85.6h1V88.0h-1zM186 85.1h1V87.8h-1zM187 85.1h1V87.7h-1zM188 85.2h1V87.4h-1zM189 85.2h1V88.0h-1zM190 85.1h1V88.0h-1zM191 85.4h1V87.4h-1zM192 84.6h1V88.1h-1zM193 85.4h1V87.6h-1zM194 84.8h1V87.7h-1zM195 85.6h1V87.4h-1zM196 85.5h1V87.6h-1zM197 85.4h1V87.9h-1zM198 85.0h1V87.7h-1zM199 85.5h1V87.7h-1zM200 85.6h1V87.8h-1zM201 85.0h1V87.4h-1zM202 85.5h1V87.5h-1zM203 85.4h1V87.8h-1zM204 84.9h1V88.0h-1zM205 85.5h1V87.7h-1zM206 85.2h1V87.8h-1zM207 85.5h1V87.8h-1zM208 85.1h1V87.8h-1zM209 85.2h1V87.6h-1zM210 85.3h1V87.6h-1zM211 85.4h1V87.6h-1zM212 85.1h1V87.8h-1zM213 85.1h1V88.0h-1zM214 85.3h1V87.4h-1zM215 85.5h1V87.4h-1zM226 120.4h1V122.7h-1zM227 120.3h1V122.6h-1zM228 120.4h1V122.6h-1zM229 120.3h1V122.7h-1zM230 119.7h1V122.8h-1zM231 120.5h1V122.6h-1zM232 120.2h1V122.9h-1zM233 120.3h1V122.5h-1zM234 120.3h1V123.0h-1zM235 120.4h1V122.9h-1zM236 120.5h1V122.9h-1zM237 120.5h1V122.5h-1zM238 120.5h1V122.7h-1zM239 120.2h1V122.7h-1zM240 120.2h1V122.8h-1zM241 120.3h1V122.7h-1zM242 120.2h1V122.5h-1zM243 120.1h1V122.9h-1zM244 119.9h1V123.1h-1zM245 120.4h1V122.8h-1zM246 120.2h1V122.7h-1zM247 119.9h1V123.0h-1zM248 120.5h1V122.5h-1zM249 120.3h1V122.9h-1zM250 120.3h1V122.6h-1zM251 119.8h1V122.6h-1zM252 120.4h1V122.8h-1zM253 120.0h1V122.6h-1zM254 120.4h1V122.9h-1zM255 120.4h1V122.6h-1zM256 120.3h1V123.0h-1zM257 120.1h1V122.6h-1zM258 120.1h1V123.2h-1zM259 120.3h1V122.5h-1zM260 120.4h1V122.6h-1zM261 120.3h1V122.8h-1zM262 119.9h1V122.5h-1zM263 120.3h1V123.2h-1zM264 120.5h1V122.6h-1zM265 120.4h1V123.1h-1zM266 120.0h1V123.9h-1zM267 120.2h1V122.7h-1zM268 120.0h1V122.7h-1zM269 120.4h1V122.5h-1zM270 120.3h1V122.8h-1zM271 120.5h1V123.2h-1zM272 120.2h1V122.8h-1zM273 120.3h1V122.6h-1zM274 120.3h1V122.8h-1zM275 119.9h1V122.9h-1zM276 120.0h1V122.7h-1zM277 120.1h1V122.7h-1zM278 120.3h1V123.0h-1zM279 119.9h1V122.5h-1zM280 119.1h1V122.8h-1zM281 120.2h1V122.7h-1zM282 120.1h1V122.7h-1zM283 119.9h1V123.0h-1zM284 120.3h1V122.7h-1zM285 120.1h1V122.7h-1zM286 120.5h1V122.7h-1zM287 120.4h1V122.7h-1zM288 120.4h1V122.5h-1zM289 120.4h1V122.6h-1zM290 120.4h1V122.5h-1zM291 119.7h1V122.8h-1zM292 120.2h1V122.6h-1zM293 120.3h1V122.7h-1zM294 120.2h1V122.8h-1zM295 120.1h1V122.5h-1zM296 120.3h1V123.0h-1zM297 120.1h1V123.0h-1zM298 118.8h1V123.0h-1zM299 119.7h1V122.8h-1zM300 120.1h1V123.8h-1zM301 120.1h1V123.0h-1zM302 120.0h1V122.6h-1zM303 119.7h1V122.9h-1zM304 120.0h1V122.6h-1zM305 120.3h1V122.5h-1zM306 120.2h1V123.2h-1zM307 119.8h1V122.8h-1zM308 120.3h1V122.6h-1zM309 120.5h1V122.6h-1zM310 120.1h1V122.7h-1zM311 120.0h1V123.2h-1zM312 120.3h1V122.6h-1zM313 120.4h1V123.3h-1zM314 120.3h1V122.6h-1zM315 120.1h1V123.4h-1zM316 120.4h1V122.5h-1zM317 120.4h1V124.1h-1zM318 120.1h1V123.2h-1zM319 120.2h1V122.5h-1zM320 120.1h1V123.0h-1zM321 119.8h1V122.5h-1zM322 120.1h1V122.5h-1zM323 120.2h1V122.7h-1zM324 120.5h1V122.9h-1zM325 120.3h1V122.6h-1zM326 120.3h1V122.7h-1zM327 120.4h1V122.5h-1zM328 120.4h1V122.6h-1zM329 119.9h1V122.6h-1zM330 120.5h1V122.7h-1zM331 120.3h1V122.6h-1zM332 120.0h1V122.8h-1zM333 120.3h1V122.5h-1zM334 120.2h1V122.8h-1zM335 120.2h1V122.6h-1zM336 120.1h1V122.6h-1zM337 119.9h1V122.8h-1zM338 120.1h1V122.7h-1zM339 120.4h1V122.6h-1zM340 119.8h1V122.9h-1zM341 120.0h1V122.9h-1zM342 120.0h1V122.8h-1zM343 120.2h1V122.6h-1zM344 120.1h1V122.9h-1zM345 120.1h1V122.6h-1zM346 120.3h1V122.7h-1zM347 120.0h1V122.5h-1zM348 119.9h1V122.5h-1zM349 120.4h1V122.7h-1zM350 120.4h1V122.8h-1zM351 120.5h1V122.6h-1zM352 120.4h1V123.0h-1zM353 120.1h1V122.6h-1zM354 119.0h1V122.5h-1zM355 120.0h1V122.7h-1zM356 120.2h1V122.9h-1zM357 120.3h1V122.6h-1zM358 120.0h1V122.8h-1zM359 120.2h1V122.8h-1zM360 120.1h1V122.6h-1zM361 120.1h1V122.9h-1zM362 120.2h1V122.7h-1zM363 120.4h1V122.7h-1zM364 120.4h1V122.7h-1zM365 119.9h1V122.9h-1zM366 119.7h1V123.0h-1zM367 120.2h1V122.5h-1zM368 120.3h1V122.9h-1zM369 120.3h1V122.9h-1zM370 120.1h1V122.8h-1zM371 120.2h1V122.6h-1zM372 120.5h1V122.5h-1zM373 120.1h1V122.6h-1zM374 120.3h1V123.0h-1zM375 120.2h1V122.6h-1zM376 119.9h1V123.1h-1zM377 120.5h1V122.7h-1zM378 120.2h1V123.3h-1zM379 120.4h1V122.7h-1zM380 120.4h1V123.4h-1zM381 120.4h1V122.6h-1zM382 120.4h1V122.6h-1zM383 120.3h1V123.1h-1zM384 119.9h1V122.6h-1zM385 119.9h1V122.5h-1zM386 120.3h1V122.7h-1zM387 120.3h1V122.7h-1zM388 120.2h1V122.6h-1zM389 119.8h1V122.6h-1zM390 120.2h1V123.4h-1zM391 120.1h1V123.2h-1zM392 120.5h1V122.5h-1zM393 119.4h1V122.5h-1zM394 120.2h1V122.5h-1zM395 120.3h1V122.9h-1zM396 120.5h1V122.9h-1zM397 120.1h1V122.5h-1zM398 120.5h1V122.8h-1zM399 120.3h1V122.8h-1zM400 120.4h1V122.8h-1zM401 120.4h1V122.6h-1zM402 119.8h1V122.8h-1zM403 120.4h1V123.0h-1zM404 120.0h1V123.0h-1zM405 120.4h1V122.9h-1zM406 120.1h1V122.5h-1zM407 119.7h1V122.6h-1zM408 120.2h1V122.8h-1zM409 120.3h1V123.0h-1zM410 120.0h1V122.5h-1zM411 119.8h1V122.5h-1zM412 120.1h1V123.1h-1zM413 120.1h1V122.9h-1zM414 120.2h1V122.7h-1zM415 120.4h1V122.6h-1zM416 120.0h1V122.7h-1zM417 120.3h1V122.7h-1zM418 120.5h1V123.2h-1zM419 119.8h1V122.7h-1zM420 120.3h1V122.9h-1zM421 120.5h1V122.8h-1zM422 120.4h1V122.6h-1zM423 120.0h1V122.8h-1zM424 119.6h1V122.6h-1zM425 119.9h1V123.8h-1zM426 120.1h1V122.7h-1zM427 120.3h1V122.9h-1zM428 120.5h1V122.9h-1zM429 120.4h1V122.8h-1zM430 119.5h1V122.7h-1zM431 120.4h1V122.6h-1zM432 120.0h1V122.7h-1zM433 120.4h1V122.6h-1zM434 120.0h1V122.8h-1zM435 120.0h1V122.5h-1zM436 120.3h1V122.8h-1zM437 120.2h1V122.6h-1zM438 120.4h1V122.8h-1zM439 120.2h1V122.5h-1zM440 120.2h1V122.8h-1zM441 120.4h1V122.7h-1zM442 120.2h1V123.2h-1zM443 120.2h1V122.7h-1zM444 120.4h1V122.5h-1zM445 120.3h1V122.7h-1zM446 120.3h1V122.9h-1zM447 120.5h1V122.8h-1zM448 119.7h1V122.8h-1zM449 120.4h1V122.6h-1zM450 120.4h1V122.6h-1zM451 120.4h1V122.8h-1zM452 120.3h1V122.9h-1zM453 120.3h1V123.0h-1zM454 120.1h1V123.7h-1zM455 120.3h1V122.6h-1zM456 120.5h1V123.1h-1zM457 120.2h1V122.6h-1zM458 120.5h1V122.6h-1zM459 120.1h1V123.4h-1zM460 120.5h1V122.7h-1zM461 120.3h1V122.6h-1zM462 120.4h1V123.2h-1zM463 120.4h1V122.5h-1zM464 119.8h1V122.6h-1zM465 119.9h1V122.9h-1zM466 119.8h1V122.6h-1zM467 120.3h1V122.5h-1zM468 120.4h1V122.8h-1zM469 120.3h1V122.6h-1zM470 120.2h1V122.6h-1zM471 119.8h1V122.7h-1zM472 120.3h1V122.7h-1zM473 120.1h1V122.5h-1zM474 120.1h1V122.9h-1zM475 120.0h1V122.6h-1zM476 120.4h1V122.6h-1zM477 120.3h1V122.8h-1zM478 120.3h1V122.6h-1zM479 120.0h1V124.1h-1zM480 120.3h1V123.0h-1zM481 120.0h1V123.0h-1zM482 120.4h1V122.6h-1zM483 120.2h1V123.3h-1zM484 119.7h1V122.5h-1zM485 120.4h1V122.9h-1zM486 120.2h1V122.9h-1zM487 120.1h1V122.8h-1zM488 120.2h1V123.1h-1zM489 119.5h1V122.7h-1zM490 119.7h1V122.9h-1zM491 120.3h1V123.1h-1zM492 119.5h1V123.2h-1zM493 120.4h1V122.9h-1zM494 120.5h1V122.6h-1zM495 120.4h1V122.7h-1zM496 120.3h1V122.5h-1zM497 120.3h1V122.6h-1zM498 120.3h1V123.0h-1zM499 120.3h1V122.9h-1zM500 120.5h1V122.8h-1zM501 120.1h1V122.7h-1zM502 120.3h1V122.8h-1zM503 120.4h1V122.5h-1zM504 120.4h1V122.8h-1zM505 119.9h1V122.6h-1zM506 119.8h1V122.5h-1zM507 120.0h1V123.0h-1zM508 120.1h1V122.5h-1zM509 120.3h1V122.7h-1zM510 120.4h1V123.0h-1zM511 120.3h1V122.6h-1zM512 120.4h1V122.5h-1zM513 119.8h1V122.6h-1zM514 120.3h1V123.0h-1zM515 120.2h1V123.0h-1zM516 120.5h1V123.4h-1zM517 120.4h1V122.8h-1zM518 120.1h1V122.6h-1zM519 120.4h1V122.8h-1zM520 120.4h1V122.8h-1zM521 120.3h1V122.5h-1zM522 120.1h1V122.6h-1zM523 120.4h1V122.9h-1zM524 120.5h1V122.6h-1zM525 120.2h1V122.9h-1zM526 120.0h1V123.0h-1zM527 119.7h1V123.1h-1zM528 120.3h1V122.9h-1zM529 120.1h1V122.8h-1zM530 120.2h1V122.7h-1zM531 120.3h1V124.6h-1zM532 120.3h1V123.1h-1zM533 120.1h1V122.5h-1zM534 120.2h1V122.5h-1zM535 120.5h1V122.9h-1zM536 120.4h1V122.8h-1zM537 120.0h1V122.7h-1zM538 120.2h1V122.9h-1zM539 120.2h1V122.6h-1zM540 119.8h1V122.8h-1zM541 120.2h1V122.6h-1zM542 120.4h1V122.6h-1zM543 120.0h1V122.8h-1zM544 120.3h1V122.9h-1zM545 120.2h1V122.9h-1zM546 120.5h1V122.7h-1zM547 120.4h1V122.8h-1zM548 120.4h1V123.0h-1zM549 119.9h1V122.8h-1zM550 119.8h1V122.5h-1zM551 119.8h1V122.7h-1zM552 120.5h1V122.5h-1zM553 119.8h1V122.7h-1zM554 120.5h1V122.8h-1zM555 120.3h1V123.0h-1zM556 120.3h1V122.5h-1zM557 120.2h1V122.8h-1zM558 120.1h1V122.7h-1zM559 119.8h1V122.7h-1zM560 120.2h1V122.6h-1zM561 119.1h1V122.8h-1zM562 120.2h1V122.7h-1zM563 120.2h1V122.6h-1zM564 120.1h1V123.2h-1zM565 120.3h1V122.8h-1zM566 120.1h1V122.9h-1zM567 120.4h1V123.3h-1zM568 120.2h1V122.6h-1zM569 120.3h1V123.1h-1zM570 120.1h1V123.0h-1zM571 120.3h1V123.1h-1zM572 119.9h1V122.5h-1zM573 120.4h1V122.8h-1zM574 120.3h1V124.2h-1zM575 120.3h1V122.9h-1zM576 120.1h1V122.5h-1zM577 120.2h1V122.9h-1zM578 120.5h1V122.5h-1zM579 120.4h1V123.9h-1zM580 120.2h1V122.6h-1zM581 120.4h1V123.0h-1zM582 120.3h1V122.7h-1zM583 120.5h1V122.6h-1zM584 120.5h1V124.0h-1zM585 120.2h1V122.9h-1zM586 120.3h1V122.9h-1zM587 120.3h1V122.5h-1zM588 120.5h1V122.5h-1zM589 120.2h1V122.8h-1zM590 120.5h1V122.6h-1zM591 120.2h1V122.8h-1zM592 119.9h1V122.6h-1zM593 120.4h1V122.8h-1zM594 119.8h1V123.0h-1zM595 120.5h1V122.7h-1zM596 120.4h1V122.6h-1zM597 120.5h1V122.9h-1zM598 120.5h1V123.9h-1zM599 120.0h1V122.8h-1zM600 120.3h1V123.0h-1zM601 120.5h1V122.6h-1zM602 120.2h1V122.8h-1zM603 120.4h1V122.6h-1zM604 119.7h1V123.1h-1zM605 120.1h1V122.5h-1zM606 120.5h1V123.4h-1zM607 120.4h1V122.7h-1zM608 120.2h1V122.7h-1zM609 119.8h1V123.4h-1zM610 120.5h1V122.9h-1zM611 120.4h1V122.7h-1zM612 120.0h1V122.9h-1zM613 119.8h1V122.7h-1zM614 120.3h1V122.6h-1zM615 119.8h1V122.7h-1zM616 120.2h1V122.5h-1zM617 120.2h1V122.9h-1zM618 120.0h1V122.7h-1zM619 120.3h1V122.6h-1zM620 119.9h1V122.6h-1zM621 120.5h1V122.6h-1zM622 119.8h1V122.7h-1zM623 120.3h1V122.8h-1zM624 120.5h1V122.9h-1zM625 120.5h1V122.9h-1zM626 120.2h1V122.7h-1zM627 120.1h1V122.7h-1zM628 120.3h1V122.6h-1zM629 120.4h1V122.8h-1zM630 119.8h1V122.6h-1zM631 120.3h1V122.9h-1zM632 120.3h1V122.6h-1zM633 120.5h1V123.1h-1zM634 120.2h1V122.9h-1zM635 120.4h1V122.7h-1zM636 120.0h1V122.7h-1zM637 120.2h1V122.7h-1zM638 120.4h1V122.7h-1zM639 119.8h1V122.8h-1zM640 120.4h1V122.7h-1zM641 119.5h1V123.1h-1zM642 120.4h1V122.8h-1zM643 119.8h1V122.6h-1zM644 120.2h1V122.6h-1zM645 119.9h1V122.9h-1zM646 120.3h1V122.6h-1zM647 120.2h1V122.9h-1zM648 120.4h1V123.0h-1zM649 120.5h1V122.7h-1zM650 120.1h1V122.6h-1zM651 120.4h1V122.8h-1zM652 120.5h1V122.7h-1zM653 120.1h1V123.1h-1zM654 120.3h1V124.3h-1zM655 120.3h1V123.1h-1zM656 120.3h1V122.7h-1zM657 120.0h1V122.9h-1zM658 119.9h1V122.8h-1zM659 120.1h1V122.6h-1zM660 120.5h1V123.0h-1zM661 120.2h1V122.8h-1zM662 120.5h1V122.7h-1zM663 120.5h1V122.8h-1zM664 120.2h1V122.9h-1zM665 120.2h1V122.6h-1zM666 120.3h1V122.5h-1zM667 120.1h1V122.6h-1zM668 120.0h1V122.9h-1zM669 120.1h1V122.7h-1zM670 120.3h1V122.6h-1zM671 120.3h1V123.2h-1zM672 120.5h1V122.5h-1zM673 119.4h1V122.8h-1zM674 120.2h1V122.9h-1zM675 120.5h1V122.7h-1zM676 120.2h1V122.9h-1zM677 119.5h1V122.6h-1zM678 120.2h1V122.7h-1zM679 120.3h1V122.9h-1zM680 120.5h1V122.8h-1zM681 120.4h1V122.8h-1zM682 120.3h1V122.9h-1zM683 120.2h1V123.1h-1zM684 119.9h1V122.8h-1zM685 119.9h1V122.9h-1zM686 119.9h1V122.6h-1zM687 119.8h1V122.7h-1zM688 120.3h1V122.6h-1zM689 119.8h1V122.8h-1zM690 120.4h1V122.7h-1zM691 120.0h1V122.9h-1zM692 120.3h1V122.5h-1zM693 120.2h1V122.6h-1zM694 120.0h1V123.1h-1zM695 120.5h1V122.7h-1zM696 120.3h1V122.9h-1zM697 120.2h1V122.7h-1zM698 119.4h1V122.6h-1zM699 120.3h1V122.6h-1zM700 120.2h1V123.2h-1zM701 120.2h1V122.6h-1zM702 120.4h1V122.9h-1zM703 120.5h1V122.5h-1zM704 120.2h1V122.7h-1zM705 120.3h1V122.9h-1zM706 120.2h1V122.6h-1zM707 120.3h1V123.0h-1zM708 120.3h1V122.7h-1zM709 120.4h1V122.7h-1zM710 119.7h1V123.0h-1zM711 120.1h1V122.8h-1zM712 120.2h1V122.5h-1zM713 119.6h1V122.7h-1zM714 120.1h1V122.9h-1zM715 119.9h1V122.8h-1zM716 120.2h1V122.6h-1zM717 120.5h1V122.6h-1zM718 120.5h1V123.3h-1zM719 120.0h1V122.7h-1zM720 120.4h1V123.0h-1zM721 120.0h1V123.0h-1zM722 120.1h1V122.8h-1zM723 120.3h1V122.6h-1zM724 119.4h1V122.5h-1zM725 120.1h1V122.9h-1zM726 120.2h1V122.9h-1zM727 120.0h1V122.6h-1zM728 120.0h1V122.5h-1zM729 120.4h1V122.9h-1zM730 120.2h1V122.6h-1zM731 120.2h1V122.7h-1zM732 120.4h1V122.6h-1zM733 119.7h1V122.7h-1zM734 120.1h1V122.8h-1zM735 119.7h1V122.5h-1zM736 120.5h1V122.7h-1zM737 120.4h1V122.6h-1zM738 120.5h1V122.9h-1zM739 120.3h1V122.5h-1zM740 120.3h1V122.6h-1zM741 119.7h1V122.6h-1zM742 120.1h1V122.6h-1zM743 120.1h1V123.1h-1zM744 120.3h1V122.9h-1zM745 119.9h1V122.8h-1zM746 119.8h1V122.6h-1zM747 120.4h1V123.3h-1zM748 120.2h1V122.8h-1zM749 119.6h1V122.8h-1zM750 120.0h1V122.5h-1zM751 120.0h1V122.8h-1zM752 120.4h1V122.7h-1zM753 119.9h1V123.0h-1zM754 119.9h1V122.5h-1zM755 120.3h1V122.5h-1zM756 120.2h1V122.9h-1zM757 120.1h1V122.9h-1zM758 120.4h1V122.9h-1zM759 120.4h1V123.3h-1zM760 120.5h1V123.0h-1zM761 120.2h1V122.6h-1zM762 120.4h1V122.9h-1zM763 120.3h1V124.5h-1zM764 119.9h1V122.7h-1zM765 120.4h1V122.6h-1zM766 120.3h1V122.7h-1zM767 120.3h1V123.0h-1zM768 120.0h1V122.9h-1zM769 120.4h1V122.9h-1zM770 120.4h1V122.8h-1zM771 120.0h1V122.6h-1zM772 120.4h1V123.0h-1zM773 119.1h1V122.7h-1zM774 120.4h1V122.6h-1zM775 120.4h1V123.1h-1zM776 120.3h1V122.7h-1zM777 120.1h1V122.6h-1zM778 120.3h1V122.7h-1zM779 120.2h1V123.2h-1zM780 120.4h1V122.9h-1zM781 120.2h1V122.7h-1zM782 120.4h1V123.0h-1zM783 120.2h1V122.8h-1zM784 119.7h1V123.0h-1zM785 120.3h1V122.6h-1zM786 120.4h1V122.6h-1zM787 120.2h1V122.7h-1zM788 120.2h1V122.7h-1zM789 120.0h1V122.9h-1zM790 120.2h1V122.7h-1zM791 120.3h1V122.8h-1zM792 120.1h1V122.7h-1zM793 120.4h1V122.7h-1zM794 120.1h1V122.6h-1zM795 119.4h1V122.5h-1zM796 120.2h1V122.7h-1zM797 120.3h1V123.2h-1zM798 120.3h1V122.5h-1zM799 119.7h1V122.5h-1zM800 120.0h1V122.9h-1zM801 120.3h1V123.0h-1zM802 120.2h1V122.8h-1zM803 120.4h1V122.7h-1zM804 120.2h1V122.6h-1zM805 120.5h1V122.7h-1zM806 119.9h1V122.7h-1zM807 119.7h1V122.7h-1zM808 119.7h1V122.9h-1zM809 119.7h1V122.7h-1zM810 120.2h1V123.7h-1zM811 120.1h1V122.7h-1zM812 120.1h1V123.0h-1zM813 120.0h1V122.9h-1zM814 120.5h1V122.8h-1zM815 120.4h1V122.9h-1zM816 120.2h1V124.1h-1zM817 120.5h1V122.6h-1zM818 120.4h1V122.9h-1zM819 120.2h1V122.5h-1zM820 120.5h1V122.5h-1zM821 120.3h1V122.6h-1zM822 120.1h1V123.0h-1zM823 120.1h1V122.6h-1zM824 119.6h1V122.5h-1zM825 120.3h1V122.9h-1zM826 120.2h1V122.7h-1zM827 120.4h1V122.6h-1zM828 119.7h1V122.7h-1zM829 120.1h1V122.7h-1zM830 119.9h1V122.5h-1zM831 120.4h1V122.7h-1zM832 119.9h1V122.7h-1zM833 120.5h1V122.7h-1zM834 120.4h1V123.0h-1zM835 120.2h1V122.6h-1zM836 119.9h1V123.0h-1zM837 120.0h1V122.8h-1zM838 120.5h1V122.7h-1zM839 120.5h1V122.6h-1zM840 120.3h1V122.5h-1zM841 120.3h1V123.1h-1zM842 120.4h1V122.8h-1zM843 120.4h1V122.8h-1zM844 120.3h1V122.7h-1zM845 120.3h1V122.6h-1zM846 120.5h1V122.5h-1zM847 120.4h1V122.7h-1zM848 120.2h1V122.6h-1zM849 119.8h1V122.8h-1zM850 120.0h1V123.1h-1zM851 120.3h1V122.9h-1zM852 120.1h1V122.6h-1zM853 120.5h1V123.0h-1zM854 119.9h1V122.6h-1zM855 120.2h1V124.1h-1zM856 120.3h1V122.6h-1zM857 120.2h1V123.0h-1zM858 120.3h1V123.3h-1zM859 120.4h1V122.7h-1zM860 119.9h1V122.8h-1zM861 120.2h1V122.8h-1zM862 120.2h1V122.7h-1zM863 119.8h1V122.5h-1zM864 120.4h1V123.4h-1zM865 120.4h1V122.8h-1zM866 120.2h1V122.9h-1zM867 120.2h1V122.7h-1zM868 120.0h1V122.8h-1zM869 120.3h1V122.9h-1zM870 120.4h1V122.6h-1zM880 85.0h1V87.7h-1zM881 84.7h1V87.8h-1zM882 85.3h1V87.7h-1zM883 85.1h1V88.0h-1zM884 85.4h1V87.6h-1zM885 85.1h1V87.8h-1zM886 84.8h1V87.8h-1zM887 85.1h1V87.8h-1zM888 84.4h1V87.6h-1zM889 85.3h1V87.7h-1zM890 85.5h1V87.7h-1zM891 85.5h1V87.8h-1zM892 85.4h1V87.8h-1zM893 85.1h1V87.9h-1zM894 84.8h1V87.5h-1zM895 84.9h1V87.9h-1zM896 84.9h1V87.5h-1zM897 85.2h1V88.2h-1zM898 85.3h1V87.7h-1zM899 85.2h1V87.5h-1zM900 85.2h1V87.6h-1zM901 85.1h1V87.9h-1zM902 85.3h1V87.6h-1zM903 85.4h1V87.5h-1zM904 85.4h1V87.7h-1zM905 85.0h1V88.3h-1zM906 85.4h1V88.1h-1zM907 85.5h1V88.4h-1zM908 84.7h1V87.6h-1zM909 85.5h1V87.6h-1zM910 85.3h1V88.2h-1zM911 85.0h1V87.7h-1zM912 85.3h1V87.6h-1zM913 85.2h1V87.5h-1zM914 85.2h1V87.9h-1zM915 85.1h1V87.7h-1zM916 85.5h1V88.4h-1zM917 85.4h1V87.5h-1zM918 85.5h1V87.6h-1zM919 85.5h1V87.7h-1zM920 84.5h1V87.7h-1zM921 85.1h1V88.1h-1zM922 85.5h1V87.6h-1zM923 85.3h1V87.6h-1zM924 85.3h1V88.3h-1zM925 85.1h1V88.0h-1zM926 85.2h1V87.9h-1zM927 85.4h1V87.9h-1zM928 85.4h1V87.7h-1zM929 85.2h1V88.0h-1zM930 85.5h1V87.5h-1zM931 85.5h1V88.1h-1zM932 85.4h1V87.7h-1zM933 85.3h1V87.5h-1zM934 85.2h1V88.1h-1zM935 85.3h1V87.9h-1zM936 85.5h1V87.6h-1zM937 85.4h1V87.9h-1zM938 85.0h1V87.9h-1zM939 85.5h1V87.6h-1zM940 85.4h1V87.5h-1zM941 84.1h1V87.6h-1zM942 85.2h1V87.9h-1zM943 85.4h1V87.6h-1zM944 85.3h1V87.6h-1zM945 85.1h1V87.5h-1zM946 84.9h1V87.8h-1zM947 85.3h1V87.9h-1zM948 85.3h1V88.7h-1zM949 84.9h1V87.7h-1zM950 84.8h1V87.6h-1zM951 85.4h1V87.7h-1zM952 84.9h1V87.7h-1zM953 85.4h1V88.2h-1zM954 85.5h1V88.2h-1zM955 84.9h1V87.8h-1zM956 85.2h1V87.5h-1zM957 85.2h1V87.9h-1zM958 85.4h1V88.1h-1zM959 85.3h1V87.9h-1zM960 85.1h1V87.8h-1zM961 85.5h1V87.6h-1zM962 85.3h1V88.0h-1zM963 85.5h1V87.8h-1zM964 84.8h1V88.0h-1zM965 84.8h1V87.8h-1zM966 85.4h1V87.8h-1zM967 85.4h1V87.9h-1zM968 85.2h1V87.8h-1zM969 85.4h1V87.7h-1zM970 85.1h1V87.9h-1zM971 85.2h1V88.2h-1zM972 85.5h1V87.8h-1zM973 85.4h1V87.7h-1zM974 85.5h1V87.8h-1zM975 84.9h1V87.9h-1zM976 84.9h1V87.7h-1zM977 85.1h1V87.8h-1zM978 85.3h1V88.3h-1zM979 85.3h1V87.7h-1zM980 85.2h1V87.7h-1zM981 85.4h1V87.7h-1zM982 85.2h1V88.2h-1zM983 85.4h1V87.5h-1zM984 85.0h1V88.2h-1zM985 85.4h1V87.5h-1zM986 85.4h1V87.7h-1zM987 85.3h1V87.5h-1zM988 85.3h1V88.2h-1zM989 85.3h1V87.8h-1zM990 85.4h1V87.5h-1zM991 85.4h1V87.5h-1zM992 85.3h1V87.5h-1zM993 85.1h1V87.6h-1zM994 85.4h1V87.6h-1zM995 85.3h1V87.8h-1zM996 85.3h1V87.6h-1zM997 85.4h1V87.7h-1zM998 85.4h1V87.7h-1zM999 85.4h1V87.9h-1zM1000 85.5h1V87.8h-1zM1001 84.3h1V88.3h-1zM1002 85.1h1V87.8h-1zM1003 85.2h1V87.6h-1zM1004 85.4h1V87.7h-1zM1005 85.3h1V87.7h-1zM1006 84.9h1V87.5h-1zM1007 85.5h1V87.6h-1zM1008 85.5h1V87.6h-1zM1009 84.8h1V87.6h-1zM1010 85.4h1V88.2h-1zM1011 85.1h1V87.7h-1zM1012 85.0h1V88.1h-1zM1013 85.4h1V87.5h-1zM1014 84.8h1V88.1h-1zM1015 85.5h1V87.7h-1zM1016 85.2h1V87.6h-1zM1017 85.3h1V88.2h-1zM1018 84.7h1V87.6h-1zM1019 85.4h1V87.9h-1zM1020 85.3h1V88.1h-1zM1021 85.4h1V87.9h-1zM1022 84.7h1V88.2h-1zM1023 84.9h1V87.7h-1zM1024 85.5h1V88.3h-1zM1025 85.2h1V87.9h-1zM1026 85.1h1V87.7h-1zM1027 85.5h1V87.8h-1zM1028 85.1h1V87.9h-1zM1029 85.4h1V88.0h-1zM1030 85.3h1V87.7h-1zM1031 85.1h1V87.9h-1zM1032 85.3h1V87.8h-1zM1033 85.1h1V87.7h-1zM1034 85.1h1V87.8h-1zM1035 84.3h1V88.1h-1zM1036 84.2h1V87.6h-1zM1037 85.1h1V87.7h-1zM1038 85.2h1V88.2h-1zM1039 85.2h1V88.2h-1zM1040 85.3h1V88.4h-1zM1041 85.5h1V87.7h-1zM1042 85.4h1V87.8h-1zM1043 85.5h1V87.8h-1zM1044 85.4h1V87.5h-1zM1045 85.3h1V87.8h-1zM1046 84.6h1V87.7h-1zM1047 84.7h1V87.6h-1zM1048 85.4h1V87.7h-1zM1049 85.0h1V87.8h-1zM1050 85.0h1V87.7h-1zM1051 84.6h1V88.0h-1zM1052 85.3h1V88.0h-1zM1053 85.4h1V87.6h-1zM1054 85.5h1V87.5h-1zM1055 85.3h1V87.6h-1zM1056 85.2h1V87.9h-1zM1057 85.1h1V88.4h-1zM1058 85.4h1V87.7h-1zM1059 85.4h1V87.7h-1zM1060 83.8h1V87.5h-1zM1061 85.3h1V87.9h-1zM1062 85.0h1V87.7h-1zM1063 85.4h1V87.7h-1zM1064 85.4h1V87.6h-1zM1065 85.4h1V87.6h-1zM1066 85.0h1V88.2h-1zM1067 85.2h1V88.1h-1zM1068 85.4h1V88.1h-1zM1069 85.3h1V87.6h-1zM1070 85.2h1V87.7h-1zM1071 85.4h1V87.9h-1zM1072 85.3h1V87.7h-1zM1073 85.3h1V88.2h-1zM1074 85.4h1V87.5h-1zM1075 85.2h1V87.5h-1zM1076 85.4h1V87.6h-1zM1077 84.2h1V87.6h-1zM1078 85.1h1V87.8h-1zM1079 85.4h1V88.1h-1zM1080 85.4h1V87.6h-1zM1081 84.9h1V87.7h-1zM1082 85.4h1V87.5h-1zM1083 85.3h1V87.6h-1zM1084 85.3h1V87.7h-1zM1085 85.0h1V87.8h-1zM1086 84.9h1V88.3h-1zM1087 84.8h1V87.6h-1zM1088 85.1h1V87.6h-1zM1089 85.0h1V88.0h-1zM1090 85.3h1V88.0h-1zM1091 85.1h1V88.6h-1zM1092 85.3h1V87.5h-1zM1093 85.1h1V87.5h-1zM1094 85.1h1V87.8h-1zM1095 85.1h1V87.7h-1zM1096 85.0h1V87.8h-1zM1097 85.0h1V87.9h-1zM1098 85.0h1V87.6h-1zM1099 85.3h1V87.7h-1zM1100 85.5h1V87.8h-1zM1101 84.6h1V87.7h-1zM1102 85.4h1V87.9h-1zM1103 85.1h1V87.9h-1zM1104 85.3h1V87.6h-1zM1105 84.9h1V87.6h-1zM1106 85.5h1V87.6h-1zM1107 84.8h1V87.7h-1zM1108 85.4h1V87.9h-1zM1109 85.3h1V87.8h-1zM1110 85.4h1V87.8h-1zM1111 85.3h1V87.9h-1zM1112 85.4h1V87.6h-1zM1113 85.2h1V87.8h-1zM1114 85.5h1V88.8h-1zM1115 85.1h1V87.8h-1zM1116 85.4h1V87.8h-1zM1117 84.1h1V87.8h-1zM1118 84.7h1V87.6h-1zM1119 85.4h1V88.0h-1zM1120 85.1h1V87.8h-1zM1121 85.4h1V87.7h-1zM1122 84.9h1V88.0h-1zM1123 84.9h1V87.7h-1zM1124 84.9h1V88.0h-1zM1125 84.8h1V87.7h-1zM1126 85.4h1V87.7h-1zM1127 85.3h1V87.5h-1zM1128 85.3h1V87.9h-1zM1129 85.4h1V87.6h-1zM1130 85.1h1V87.5h-1zM1131 84.9h1V87.7h-1zM1132 85.5h1V89.0h-1zM1133 84.8h1V87.6h-1zM1134 85.4h1V87.5h-1zM1135 84.9h1V88.0h-1zM1136 85.5h1V87.7h-1zM1137 85.3h1V87.5h-1zM1138 85.3h1V88.0h-1zM1139 85.0h1V88.0h-1zM1140 84.7h1V87.9h-1zM1141 84.7h1V88.1h-1zM1142 85.2h1V87.7h-1zM1143 84.4h1V88.1h-1zM1144 84.8h1V87.9h-1zM1145 85.2h1V87.9h-1zM1146 85.1h1V87.8h-1zM1147 85.5h1V87.5h-1zM1148 85.4h1V87.6h-1zM1149 85.3h1V88.1h-1zM1150 85.0h1V88.0h-1zM1151 85.3h1V87.5h-1zM1152 85.3h1V88.5h-1zM1153 85.0h1V87.6h-1zM1154 84.7h1V87.9h-1zM1155 85.2h1V88.2h-1zM1156 85.3h1V87.7h-1zM1157 85.1h1V87.8h-1zM1158 85.4h1V87.9h-1zM1159 85.1h1V87.7h-1zM1160 84.8h1V87.8h-1zM1161 84.9h1V87.6h-1zM1162 85.2h1V87.8h-1zM1163 85.2h1V87.7h-1zM1164 85.1h1V87.6h-1zM1165 85.0h1V88.0h-1zM1166 85.0h1V87.6h-1zM1167 85.2h1V87.5h-1zM1168 85.0h1V87.7h-1zM1169 85.4h1V87.7h-1zM1170 85.0h1V87.7h-1zM1171 85.4h1V87.6h-1zM1172 85.3h1V88.7h-1zM1173 85.3h1V87.7h-1zM1174 84.9h1V87.6h-1zM1175 84.8h1V87.6h-1zM1176 84.5h1V87.8h-1zM1177 85.0h1V87.5h-1zM1178 85.4h1V88.2h-1zM1179 85.3h1V88.3h-1zM1180 85.5h1V87.8h-1zM1181 84.5h1V88.1h-1zM1182 85.2h1V88.0h-1zM1183 85.2h1V88.1h-1zM1184 85.4h1V87.7h-1zM1185 85.2h1V87.6h-1zM1186 85.4h1V87.6h-1zM1187 85.4h1V87.7h-1zM1188 85.1h1V87.8h-1zM1189 85.4h1V87.8h-1zM1190 85.2h1V89.1h-1zM1191 85.1h1V87.8h-1zM1192 83.7h1V88.3h-1zM1193 85.1h1V87.7h-1zM1194 85.3h1V87.7h-1zM1195 85.5h1V87.6h-1zM1196 85.3h1V87.6h-1zM1197 85.3h1V88.2h-1zM1198 85.0h1V87.5h-1zM1199 85.2h1V87.6h-1zM1200 84.9h1V87.5h-1zM1201 85.3h1V87.6h-1zM1202 85.4h1V88.3h-1zM1203 85.1h1V87.6h-1zM1204 85.1h1V87.7h-1zM1205 85.1h1V87.5h-1zM1206 84.6h1V87.9h-1zM1207 85.2h1V87.6h-1zM1208 85.4h1V87.7h-1zM1209 85.3h1V87.9h-1zM1210 85.3h1V87.7h-1zM1211 85.1h1V87.6h-1zM1212 85.1h1V87.7h-1zM1213 85.4h1V87.6h-1zM1214 85.3h1V88.0h-1zM1215 85.3h1V87.6h-1zM1216 85.3h1V88.4h-1zM1217 85.3h1V87.5h-1zM1218 85.2h1V87.7h-1zM1219 84.8h1V87.6h-1zM1220 85.3h1V87.9h-1zM1221 85.4h1V87.6h-1zM1222 85.3h1V88.9h-1zM1223 84.8h1V87.7h-1zM1224 85.4h1V87.6h-1zM1225 85.3h1V87.6h-1zM1226 85.3h1V87.6h-1zM1227 85.3h1V87.9h-1zM1228 85.3h1V88.6h-1zM1229 85.5h1V88.7h-1zM1230 85.4h1V88.2h-1zM1231 85.1h1V87.9h-1zM1232 85.2h1V88.0h-1zM1233 85.3h1V87.6h-1zM1234 85.4h1V87.8h-1zM1235 85.4h1V87.9h-1zM1236 85.2h1V88.0h-1zM1237 85.3h1V87.9h-1zM1238 85.1h1V88.0h-1zM1239 85.4h1V88.1h-1zM1240 85.2h1V87.7h-1zM1241 85.4h1V87.8h-1zM1242 84.6h1V88.0h-1zM1243 85.1h1V88.0h-1zM1244 85.1h1V87.6h-1zM1245 85.4h1V88.9h-1zM1246 85.4h1V87.7h-1zM1247 85.4h1V88.0h-1zM1248 84.9h1V88.0h-1zM1249 85.5h1V88.0h-1zM1250 84.6h1V87.8h-1zM1251 85.1h1V87.6h-1zM1252 85.4h1V87.6h-1zM1253 84.9h1V87.6h-1zM1254 85.1h1V88.2h-1zM1255 85.0h1V87.7h-1zM1256 85.3h1V87.7h-1zM1257 85.1h1V87.5h-1zM1258 85.4h1V87.7h-1zM1259 85.1h1V87.9h-1zM1260 85.3h1V87.6h-1zM1261 85.0h1V88.2h-1zM1262 85.3h1V87.6h-1zM1263 85.4h1V88.1h-1zM1264 85.3h1V88.1h-1zM1265 85.0h1V88.4h-1zM1266 84.9h1V87.9h-1zM1267 84.0h1V88.1h-1zM1268 85.1h1V87.6h-1zM1269 84.9h1V87.8h-1zM1270 85.3h1V87.5h-1zM1271 85.5h1V87.7h-1zM1272 85.3h1V87.7h-1zM1273 85.0h1V87.7h-1zM1274 85.1h1V88.3h-1zM1275 85.4h1V87.6h-1zM1276 85.5h1V88.1h-1zM1277 85.4h1V87.7h-1zM1278 85.4h1V87.6h-1zM1279 85.2h1V88.5h-1zM1280 84.8h1V88.6h-1zM1281 85.2h1V88.0h-1zM1282 85.4h1V87.6h-1zM1283 85.0h1V87.8h-1zM1284 85.2h1V87.7h-1zM1285 85.3h1V88.9h-1zM1286 85.2h1V87.8h-1zM1287 85.3h1V87.7h-1zM1288 85.4h1V87.7h-1zM1289 85.1h1V87.8h-1zM1290 84.5h1V87.6h-1zM1291 85.1h1V87.6h-1zM1292 85.2h1V87.7h-1zM1293 84.9h1V87.6h-1zM1294 85.3h1V87.6h-1zM1295 85.1h1V88.2h-1zM1296 85.2h1V87.6h-1zM1297 85.1h1V87.8h-1zM1298 85.3h1V87.8h-1zM1299 85.5h1V87.6h-1zM1313 120.3h1V122.9h-1zM1314 120.4h1V122.6h-1zM1315 120.2h1V122.6h-1zM1316 120.1h1V122.6h-1zM1317 120.4h1V123.0h-1zM1318 120.4h1V122.8h-1zM1319 120.4h1V123.9h-1zM1320 120.2h1V122.8h-1zM1321 120.3h1V122.7h-1zM1322 120.4h1V122.9h-1zM1323 120.4h1V122.6h-1zM1324 120.1h1V122.6h-1zM1325 120.4h1V123.0h-1zM1326 120.0h1V122.9h-1zM1327 120.4h1V122.7h-1zM1328 120.5h1V123.7h-1zM1329 120.1h1V122.7h-1zM1330 120.3h1V122.7h-1zM1331 120.3h1V123.0h-1zM1332 119.9h1V123.6h-1zM1333 120.4h1V122.7h-1zM1334 120.1h1V122.6h-1zM1335 119.8h1V122.7h-1zM1336 120.3h1V122.7h-1zM1337 120.2h1V122.6h-1zM1338 120.4h1V122.7h-1zM1339 120.1h1V123.0h-1zM1340 120.4h1V123.0h-1zM1341 120.5h1V122.6h-1zM1342 120.2h1V122.9h-1zM1343 120.3h1V122.9h-1zM1344 120.4h1V122.5h-1zM1345 119.3h1V122.7h-1zM1346 119.9h1V123.0h-1zM1347 120.4h1V123.2h-1zM1348 120.0h1V122.5h-1zM1349 120.4h1V122.9h-1zM1350 120.5h1V122.5h-1zM1351 120.3h1V123.2h-1zM1352 120.4h1V122.6h-1zM1353 120.5h1V122.9h-1zM1354 120.4h1V122.7h-1zM1355 118.8h1V123.0h-1zM1356 119.2h1V122.6h-1zM1357 120.3h1V123.0h-1zM1358 120.4h1V122.8h-1zM1359 120.4h1V122.5h-1zM1360 120.1h1V122.7h-1zM1361 120.5h1V123.1h-1zM1362 120.0h1V122.5h-1zM1363 120.4h1V122.8h-1zM1364 120.5h1V122.9h-1zM1365 119.9h1V122.6h-1zM1366 119.8h1V122.5h-1zM1367 120.3h1V123.1h-1zM1368 120.1h1V123.0h-1zM1369 120.5h1V122.7h-1zM1370 120.5h1V122.6h-1zM1371 120.5h1V124.0h-1zM1372 120.4h1V122.5h-1zM1373 119.8h1V123.0h-1zM1374 120.5h1V122.6h-1zM1375 120.5h1V122.6h-1zM1376 120.1h1V123.1h-1zM1377 120.3h1V123.0h-1zM1378 120.0h1V122.6h-1zM1379 120.4h1V122.9h-1zM1380 120.5h1V122.6h-1zM1381 120.2h1V122.5h-1zM1382 120.3h1V122.6h-1zM1383 120.2h1V122.7h-1zM1384 120.3h1V123.1h-1zM1385 120.0h1V122.7h-1zM1386 120.5h1V122.8h-1zM1387 120.4h1V123.2h-1zM1388 120.2h1V123.0h-1zM1389 120.0h1V122.6h-1zM1390 120.4h1V122.8h-1zM1391 120.4h1V122.7h-1zM1392 120.4h1V122.5h-1zM1393 120.5h1V122.8h-1zM1394 120.4h1V122.5h-1zM1395 120.4h1V122.8h-1zM1396 120.3h1V123.9h-1zM1397 120.3h1V122.7h-1zM1398 120.3h1V122.8h-1zM1399 120.2h1V122.6h-1zM1400 120.2h1V122.6h-1zM1401 120.4h1V122.9h-1zM1402 120.0h1V123.0h-1zM1403 120.4h1V123.1h-1zM1404 120.3h1V123.1h-1zM1405 120.5h1V122.7h-1zM1406 120.2h1V123.1h-1zM1407 120.2h1V123.2h-1zM1408 120.4h1V122.9h-1zM1409 120.0h1V122.6h-1zM1410 120.3h1V123.7h-1zM1411 120.1h1V122.7h-1zM1412 119.9h1V122.8h-1zM1413 120.2h1V122.6h-1zM1414 120.3h1V123.0h-1zM1415 120.4h1V123.0h-1zM1416 120.0h1V123.0h-1zM1417 120.4h1V122.7h-1zM1418 120.0h1V122.6h-1zM1419 120.4h1V122.9h-1zM1420 120.5h1V122.6h-1zM1421 120.0h1V122.8h-1zM1422 120.4h1V122.9h-1zM1423 120.3h1V122.6h-1zM1424 120.0h1V123.0h-1zM1425 120.2h1V122.9h-1zM1426 120.4h1V122.5h-1zM1427 120.3h1V123.0h-1zM1428 120.5h1V122.6h-1zM1429 120.4h1V122.9h-1zM1430 120.4h1V122.9h-1zM1431 120.3h1V122.7h-1zM1432 120.3h1V122.6h-1zM1433 119.3h1V122.8h-1zM1434 120.2h1V123.0h-1zM1435 120.5h1V123.4h-1zM1436 120.5h1V122.7h-1zM1437 120.4h1V122.7h-1zM1438 120.4h1V122.7h-1zM1439 120.2h1V123.2h-1zM1440 120.5h1V122.6h-1zM1441 120.0h1V123.2h-1zM1442 120.2h1V122.6h-1zM1443 119.6h1V122.6h-1zM1444 120.4h1V122.6h-1zM1445 120.3h1V122.7h-1zM1446 120.3h1V122.6h-1zM1447 120.4h1V122.7h-1zM1448 120.4h1V122.7h-1zM1449 119.9h1V122.6h-1zM1450 120.2h1V122.9h-1zM1451 120.3h1V122.8h-1zM1452 120.3h1V122.8h-1zM1453 120.4h1V122.9h-1zM1454 119.9h1V122.5h-1zM1455 119.8h1V122.9h-1zM1456 120.4h1V122.6h-1zM1457 120.1h1V122.6h-1zM1458 120.0h1V122.7h-1zM1459 120.0h1V122.8h-1zM1460 120.3h1V122.5h-1zM1461 120.2h1V122.6h-1zM1462 119.9h1V122.5h-1zM1463 120.4h1V122.6h-1zM1464 120.3h1V122.5h-1zM1465 120.2h1V122.8h-1zM1466 119.9h1V122.7h-1zM1467 120.0h1V122.5h-1zM1468 119.9h1V122.7h-1zM1469 120.4h1V122.7h-1zM1470 120.1h1V122.7h-1zM1471 120.3h1V122.9h-1zM1472 119.8h1V122.8h-1zM1473 120.4h1V123.0h-1zM1474 120.4h1V122.7h-1zM1475 120.2h1V122.6h-1zM1476 120.4h1V123.4h-1zM1477 120.4h1V123.2h-1zM1478 120.0h1V123.5h-1zM1479 120.0h1V122.6h-1zM1480 120.2h1V122.7h-1zM1481 120.5h1V122.6h-1zM1482 120.3h1V122.5h-1zM1483 120.2h1V122.7h-1zM1484 120.1h1V122.5h-1zM1485 120.3h1V123.1h-1zM1486 120.2h1V122.6h-1zM1487 120.1h1V122.7h-1zM1488 120.4h1V122.7h-1zM1489 120.5h1V123.0h-1zM1490 120.1h1V122.6h-1zM1491 120.1h1V122.5h-1zM1492 119.6h1V122.6h-1zM1493 120.4h1V122.8h-1zM1494 119.8h1V123.9h-1zM1495 120.4h1V122.7h-1zM1496 119.9h1V122.8h-1zM1497 120.1h1V122.9h-1zM1498 120.4h1V122.6h-1zM1499 119.3h1V122.5h-1zM1500 120.2h1V122.6h-1zM1501 120.5h1V122.5h-1zM1502 120.5h1V122.8h-1zM1503 120.2h1V122.8h-1zM1504 120.0h1V122.6h-1zM1505 120.1h1V122.6h-1zM1506 120.5h1V122.5h-1zM1507 120.4h1V122.7h-1zM1508 120.2h1V122.7h-1zM1509 120.3h1V122.6h-1zM1510 120.0h1V123.0h-1zM1511 119.8h1V122.7h-1zM1512 120.2h1V122.9h-1zM1513 120.2h1V122.7h-1zM1514 120.0h1V122.6h-1zM1515 120.3h1V122.9h-1zM1516 120.3h1V122.9h-1zM1517 120.0h1V122.5h-1zM1518 120.5h1V122.8h-1zM1519 120.2h1V122.9h-1zM1520 120.2h1V122.7h-1zM1521 120.5h1V123.6h-1zM1522 120.4h1V122.5h-1zM1523 120.5h1V122.8h-1zM1531 85.1h1V87.8h-1zM1532 85.2h1V87.5h-1zM1533 85.2h1V87.6h-1zM1534 84.7h1V87.6h-1zM1535 85.4h1V87.7h-1zM1536 84.7h1V87.7h-1zM1537 85.2h1V87.8h-1zM1538 85.5h1V87.8h-1zM1539 85.1h1V87.8h-1zM1540 85.3h1V87.6h-1zM1541 85.0h1V87.6h-1zM1542 85.1h1V87.9h-1zM1543 85.4h1V88.4h-1zM1544 85.2h1V87.8h-1zM1545 85.4h1V87.9h-1zM1546 85.5h1V87.6h-1zM1547 85.4h1V87.9h-1zM1548 85.2h1V87.8h-1zM1549 85.4h1V87.7h-1zM1550 85.3h1V88.0h-1zM1551 84.8h1V88.0h-1zM1552 84.3h1V88.0h-1zM1553 85.0h1V87.6h-1zM1554 85.3h1V87.6h-1zM1555 85.3h1V87.7h-1zM1556 85.4h1V87.7h-1zM1557 85.3h1V87.8h-1zM1558 84.3h1V88.1h-1zM1559 85.2h1V87.5h-1zM1560 84.8h1V87.7h-1zM1561 85.2h1V88.1h-1zM1562 85.0h1V87.7h-1zM1563 85.5h1V88.0h-1zM1564 85.5h1V87.9h-1zM1565 85.4h1V87.6h-1zM1566 85.3h1V87.9h-1zM1567 85.4h1V87.7h-1zM1568 85.5h1V88.1h-1zM1569 85.4h1V87.6h-1zM1570 85.2h1V87.7h-1zM1571 85.0h1V87.7h-1zM1572 85.5h1V87.6h-1zM1573 85.2h1V87.8h-1zM1574 85.4h1V87.5h-1zM1575 84.9h1V87.6h-1zM1576 85.2h1V87.6h-1zM1577 84.8h1V87.6h-1zM1578 85.1h1V87.9h-1zM1579 85.2h1V87.5h-1zM1580 85.5h1V87.9h-1zM1581 84.7h1V87.8h-1zM1582 85.5h1V87.7h-1zM1583 85.3h1V87.6h-1zM1584 85.3h1V87.5h-1zM1585 85.2h1V87.7h-1zM1586 85.3h1V87.7h-1zM1587 84.9h1V87.8h-1zM1588 85.4h1V87.6h-1zM1589 85.4h1V87.5h-1zM1590 84.8h1V88.1h-1zM1591 84.3h1V87.6h-1zM1592 85.3h1V87.6h-1zM1593 85.1h1V87.5h-1zM1594 85.2h1V87.7h-1zM1595 85.4h1V87.9h-1zM1596 85.2h1V87.6h-1zM1597 85.0h1V87.9h-1zM1598 85.5h1V87.6h-1zM1599 85.4h1V87.9h-1zM1600 85.4h1V87.8h-1zM1601 85.2h1V87.8h-1zM1602 85.0h1V88.0h-1zM1603 85.4h1V87.7h-1zM1604 85.4h1V87.9h-1zM1605 85.2h1V87.8h-1zM1606 83.8h1V87.9h-1zM1607 85.2h1V87.6h-1zM1608 85.5h1V88.1h-1zM1609 85.3h1V87.6h-1zM1610 85.5h1V87.7h-1zM1611 85.1h1V87.6h-1zM1612 85.2h1V87.8h-1zM1613 85.5h1V87.6h-1zM1614 84.9h1V87.9h-1zM1615 85.2h1V87.7h-1zM1616 85.1h1V88.2h-1zM1617 85.2h1V87.7h-1zM1618 85.0h1V87.7h-1zM1619 84.9h1V87.7h-1zM1620 85.2h1V87.9h-1zM1621 85.2h1V87.6h-1zM1622 85.4h1V87.5h-1zM1623 85.5h1V87.8h-1zM1624 85.4h1V87.9h-1zM1625 85.3h1V88.6h-1zM1626 85.0h1V87.9h-1zM1627 85.4h1V87.7h-1zM1628 85.3h1V87.8h-1zM1629 85.2h1V88.0h-1zM1630 85.1h1V87.7h-1zM1631 85.0h1V87.7h-1zM1632 85.2h1V87.8h-1zM1633 84.9h1V87.5h-1zM1634 85.2h1V87.9h-1zM1635 85.5h1V87.7h-1zM1636 85.3h1V87.9h-1zM1637 84.9h1V87.7h-1zM1638 85.1h1V87.7h-1zM1639 85.3h1V88.1h-1zM1640 85.5h1V87.9h-1zM1641 85.4h1V87.9h-1zM1642 85.3h1V87.7h-1zM1643 85.5h1V87.6h-1zM1644 84.8h1V88.0h-1zM1645 85.1h1V87.6h-1zM1646 85.4h1V87.9h-1zM1647 85.4h1V87.5h-1zM1648 85.1h1V87.5h-1zM1649 85.3h1V87.5h-1zM1650 85.0h1V87.9h-1zM1651 85.5h1V88.1h-1zM1652 85.5h1V87.9h-1zM1653 85.4h1V88.2h-1zM1654 85.4h1V87.8h-1zM1655 85.3h1V87.8h-1zM1656 85.3h1V88.2h-1zM1657 85.3h1V87.7h-1zM1658 85.2h1V87.5h-1zM1659 84.8h1V87.5h-1zM1660 85.5h1V87.6h-1zM1661 85.3h1V87.6h-1zM1662 85.3h1V87.5h-1zM1663 85.4h1V87.7h-1zM1664 85.2h1V87.7h-1zM1665 85.5h1V87.8h-1zM1666 85.4h1V87.6h-1zM1667 85.3h1V87.7h-1zM1668 85.3h1V87.8h-1zM1669 85.0h1V87.6h-1zM1670 85.0h1V87.8h-1zM1671 85.5h1V88.5h-1zM1672 85.0h1V87.8h-1zM1673 85.4h1V87.7h-1zM1674 85.1h1V87.6h-1zM1675 85.2h1V87.5h-1zM1676 85.5h1V87.8h-1zM1677 85.0h1V88.3h-1zM1678 85.1h1V87.9h-1zM1679 85.2h1V87.5h-1zM1680 84.9h1V87.7h-1zM1681 85.2h1V87.7h-1zM1682 85.0h1V87.6h-1zM1683 85.4h1V87.7h-1zM1684 85.2h1V87.9h-1zM1685 85.5h1V87.6h-1zM1686 85.4h1V87.8h-1zM1687 85.5h1V87.6h-1zM1688 85.1h1V87.9h-1zM1689 84.9h1V87.6h-1zM1690 85.0h1V87.7h-1zM1691 85.2h1V87.7h-1zM1692 85.1h1V87.6h-1zM1693 85.4h1V87.8h-1zM1694 85.1h1V88.0h-1zM1695 85.1h1V88.5h-1zM1696 85.4h1V87.6h-1zM1697 84.9h1V87.9h-1zM1698 85.2h1V87.8h-1zM1699 85.4h1V87.6h-1zM1700 85.2h1V87.5h-1zM1701 85.5h1V88.1h-1zM1702 84.6h1V88.4h-1zM1703 84.1h1V87.9h-1zM1704 85.1h1V87.5h-1zM1705 85.3h1V88.8h-1zM1706 85.2h1V87.8h-1zM1707 85.4h1V88.1h-1zM1708 85.2h1V88.1h-1zM1709 85.3h1V88.3h-1zM1710 85.5h1V88.0h-1zM1711 85.5h1V87.6h-1zM1712 85.4h1V87.8h-1zM1713 85.3h1V87.6h-1zM1714 85.0h1V87.5h-1zM1715 85.2h1V87.6h-1zM1716 84.8h1V87.8h-1zM1717 85.1h1V88.7h-1zM1718 84.8h1V87.6h-1zM1719 85.2h1V87.9h-1zM1720 85.4h1V87.9h-1zM1721 85.5h1V88.2h-1zM1722 85.3h1V88.0h-1zM1723 85.4h1V88.6h-1zM1724 85.2h1V87.8h-1zM1725 85.3h1V87.7h-1zM1726 85.2h1V87.7h-1zM1727 85.3h1V87.9h-1zM1728 85.4h1V88.1h-1zM1729 85.4h1V87.7h-1zM1730 85.2h1V87.8h-1zM1731 85.4h1V87.8h-1zM1732 85.3h1V87.9h-1zM1733 85.1h1V89.1h-1zM1734 85.4h1V88.3h-1zM1735 84.8h1V87.9h-1zM1736 85.1h1V87.7h-1zM1737 85.1h1V87.5h-1zM1738 84.8h1V87.6h-1zM1739 85.4h1V87.5h-1zM1740 85.5h1V88.0h-1zM1741 85.2h1V87.8h-1zM1742 85.5h1V88.1h-1zM1743 85.4h1V87.7h-1zM1744 85.2h1V87.6h-1z" fill="#f2f020"/>
<polyline points="216.0,86.5 217.0,100.0 217.5,120.0 218.0,112.0 219.0,127.0 220.0,116.0 221.0,124.0 222.0,119.0 224.0,122.0 226.0,121.5" fill="none" stroke="#f2f020" stroke-width="1.5" stroke-linejoin="round"/>
<polyline points="870.0,121.5 880.0,86.5" fill="none" stroke="#f2f020" stroke-width="1.8" stroke-linejoin="round"/>
<polyline points="1523.0,121.5 1531.0,86.5" fill="none" stroke="#f2f020" stroke-width="1.8" stroke-linejoin="round"/>
<polyline points="4.0,87.0 215.0,87.0 216.5,87.0 217.0,110.0 217.5,92.0 219.0,88.0 221.0,87.0 871.0,87.0 880.0,78.5 1299.0,78.5" fill="none" stroke="#3dcad8" stroke-width="1.6" stroke-linejoin="round" shape-rendering="crispEdges"/>
<polyline points="1313.0,86.5 1524.0,86.5 1531.0,76.0 1744.0,76.0" fill="none" stroke="#3dcad8" stroke-width="2" stroke-linejoin="round" shape-rendering="crispEdges"/>
<rect x="1300" y="57" width="12" height="159" rx="2" fill="#9a9a9a"/>
<rect x="1305" y="60" width="2.5" height="153" fill="#000"/>
<line x1="1304" y1="58" x2="1304" y2="215" stroke="#f0a030" stroke-width="1" stroke-dasharray="3 2"/>
<line x1="1308" y1="58" x2="1308" y2="215" stroke="#f0a030" stroke-width="1" stroke-dasharray="3 2"/>
<polyline points="1305,193 1306,98 1307,80 1308,86 1309,90" fill="none" stroke="#e8455f" stroke-width="1.2"/>
<polyline points="1306,213 1306.5,60" fill="none" stroke="#3dcad8" stroke-width="1"/>
<polyline points="1308,96 1310,125 1311,110 1312,121" fill="none" stroke="#e8e890" stroke-width="1.2"/>
<path d="M1704.5 64.5 L1737.5 64.5 L1737.5 96.5 Z" fill="#4a4a4a" stroke="#1aa6d6" stroke-width="2" stroke-linejoin="round"/>
<circle cx="1731" cy="70.5" r="4" fill="none" stroke="#1aa6d6" stroke-width="1.8"/>
<line x1="1728" y1="73.5" x2="1722" y2="79.5" stroke="#1aa6d6" stroke-width="2.2"/>
<path d="M9.5 77.8 L20.5 77.8 L26.5 84.3 L20.5 90.8 L9.5 90.8 Q6.5 90.8 6.5 87.8 L6.5 80.8 Q6.5 77.8 9.5 77.8 Z" fill="#3ccad6" stroke="#3ccad6" stroke-width="1.2"/>
<text x="15.5" y="88.44" font-size="11.5" fill="#102020" text-anchor="middle" font-weight="normal" textLength="16" lengthAdjust="spacingAndGlyphs">R 2</text>
<path d="M9.5 113.4 L20.5 113.4 L26.5 120.4 L20.5 127.4 L9.5 127.4 Q6.5 127.4 6.5 124.4 L6.5 116.4 Q6.5 113.4 9.5 113.4 Z" fill="#3a3520" stroke="#c8c040" stroke-width="1.2"/>
<text x="15.5" y="124.54" font-size="11.5" fill="#f0e838" text-anchor="middle" font-weight="normal" textLength="16" lengthAdjust="spacingAndGlyphs">R 1</text>
<path d="M9.5 154.5 L20.5 154.5 L26.5 161.5 L20.5 168.5 L9.5 168.5 Q6.5 168.5 6.5 165.5 L6.5 157.5 Q6.5 154.5 9.5 154.5 Z" fill="#4a3420" stroke="#c07a30" stroke-width="1.2"/>
<text x="15.5" y="165.64" font-size="11.5" fill="#e89040" text-anchor="middle" font-weight="normal" textLength="16" lengthAdjust="spacingAndGlyphs">M 1</text>
<path d="M9.5 187.1 L20.5 187.1 L26.5 194.1 L20.5 201.1 L9.5 201.1 Q6.5 201.1 6.5 198.1 L6.5 190.1 Q6.5 187.1 9.5 187.1 Z" fill="#3a1a22" stroke="#b04058" stroke-width="1.2"/>
<text x="15.5" y="198.23999999999998" font-size="11.5" fill="#f4f4f4" text-anchor="middle" font-weight="normal" textLength="16" lengthAdjust="spacingAndGlyphs">R 3</text>
<line x1="217.5" y1="88" x2="217.5" y2="216" stroke="#d8d8d8" stroke-width="1" stroke-dasharray="4 3"/>
<path d="M207 57 L228 57 L217.5 67 Z" fill="#f08a1c"/>
<path d="M208.5 68.5 L226.5 68.5 L226.5 87.5 L220.5 87.5 L217.5 92.5 L214.5 87.5 L208.5 87.5 Z" fill="#000" stroke="#f08a1c" stroke-width="2.2"/>
<text x="217.5" y="84" font-size="14" fill="#f4a040" text-anchor="middle" font-weight="bold">T</text>
<text x="16.3" y="234.2" font-size="12.8" fill="#101010" text-anchor="start" font-weight="normal" textLength="138" lengthAdjust="spacingAndGlyphs">Horizontal&#160;&#160;Zoom&#160;&#160;Scale</text>
<rect x="164.5" y="221.5" width="91" height="17" rx="3" fill="#cbcbcb"/>
<text x="175.3" y="234.2" font-size="12.8" fill="#101010" text-anchor="start" font-weight="normal" textLength="71" lengthAdjust="spacingAndGlyphs">20.00 ns/div</text>
<rect x="271.6" y="221" width="36.39999999999998" height="17" rx="2" fill="#353636" stroke="#2a2a2a" stroke-width="0.8"/>
<rect x="283.8" y="228.5" width="12" height="2" fill="#8c8c8c"/>
<rect x="288.8" y="223.5" width="2" height="12" fill="#8c8c8c"/>
<rect x="326.4" y="221" width="36.900000000000034" height="17" rx="2" fill="#353636" stroke="#2a2a2a" stroke-width="0.8"/>
<rect x="338.85" y="228.5" width="12" height="2" fill="#8c8c8c"/>
<text x="375" y="234.2" font-size="12.8" fill="#101010" text-anchor="start" font-weight="normal" textLength="92.7" lengthAdjust="spacingAndGlyphs">(200.00x&#160;&#160;zoom)</text>
<text x="487.5" y="234.2" font-size="12.8" fill="#101010" text-anchor="start" font-weight="normal" textLength="85" lengthAdjust="spacingAndGlyphs">Vertical&#160;&#160;Zoom</text>
<rect x="585.6" y="221" width="36.39999999999998" height="17" rx="2" fill="#353636" stroke="#2a2a2a" stroke-width="0.8"/>
<rect x="597.8" y="228.5" width="12" height="2" fill="#8c8c8c"/>
<rect x="602.8" y="223.5" width="2" height="12" fill="#8c8c8c"/>
<rect x="640.4" y="221" width="37.0" height="17" rx="2" fill="#353636" stroke="#2a2a2a" stroke-width="0.8"/>
<rect x="652.9" y="228.5" width="12" height="2" fill="#8c8c8c"/>
<text x="689.2" y="234.2" font-size="12.8" fill="#101010" text-anchor="start" font-weight="normal" textLength="78.8" lengthAdjust="spacingAndGlyphs">(1.00x&#160;&#160;zoom)</text>
<path d="M1725 223 L1737 235 M1737 223 L1725 235" stroke="#dcdcdc" stroke-width="2"/>
<rect x="3" y="428" width="1742" height="2" fill="#777777"/>
<rect x="3" y="616" width="1742" height="2" fill="#777777"/>
<rect x="3" y="804" width="1742" height="2" fill="#777777"/>
<path d="M20 252h1v1h-1zM55 252h1v1h-1zM90 252h1v1h-1zM125 252h1v1h-1zM160 252h1v1h-1zM195 252h1v1h-1zM230 252h1v1h-1zM264 252h1v1h-1zM299 252h1v1h-1zM334 252h1v1h-1zM369 252h1v1h-1zM404 252h1v1h-1zM439 252h1v1h-1zM473 252h1v1h-1zM508 252h1v1h-1zM543 252h1v1h-1zM578 252h1v1h-1zM613 252h1v1h-1zM648 252h1v1h-1zM682 252h1v1h-1zM717 252h1v1h-1zM752 252h1v1h-1zM787 252h1v1h-1zM822 252h1v1h-1zM857 252h1v1h-1zM892 252h1v1h-1zM926 252h1v1h-1zM961 252h1v1h-1zM996 252h1v1h-1zM1031 252h1v1h-1zM1066 252h1v1h-1zM1101 252h1v1h-1zM1135 252h1v1h-1zM1170 252h1v1h-1zM1205 252h1v1h-1zM1240 252h1v1h-1zM1275 252h1v1h-1zM1310 252h1v1h-1zM1344 252h1v1h-1zM1379 252h1v1h-1zM1414 252h1v1h-1zM1449 252h1v1h-1zM1484 252h1v1h-1zM1519 252h1v1h-1zM1554 252h1v1h-1zM1588 252h1v1h-1zM1623 252h1v1h-1zM1658 252h1v1h-1zM1693 252h1v1h-1zM1728 252h1v1h-1zM20 270h1v1h-1zM55 270h1v1h-1zM90 270h1v1h-1zM125 270h1v1h-1zM160 270h1v1h-1zM195 270h1v1h-1zM230 270h1v1h-1zM264 270h1v1h-1zM299 270h1v1h-1zM334 270h1v1h-1zM369 270h1v1h-1zM404 270h1v1h-1zM439 270h1v1h-1zM473 270h1v1h-1zM508 270h1v1h-1zM543 270h1v1h-1zM578 270h1v1h-1zM613 270h1v1h-1zM648 270h1v1h-1zM682 270h1v1h-1zM717 270h1v1h-1zM752 270h1v1h-1zM787 270h1v1h-1zM822 270h1v1h-1zM857 270h1v1h-1zM892 270h1v1h-1zM926 270h1v1h-1zM961 270h1v1h-1zM996 270h1v1h-1zM1031 270h1v1h-1zM1066 270h1v1h-1zM1101 270h1v1h-1zM1135 270h1v1h-1zM1170 270h1v1h-1zM1205 270h1v1h-1zM1240 270h1v1h-1zM1275 270h1v1h-1zM1310 270h1v1h-1zM1344 270h1v1h-1zM1379 270h1v1h-1zM1414 270h1v1h-1zM1449 270h1v1h-1zM1484 270h1v1h-1zM1519 270h1v1h-1zM1554 270h1v1h-1zM1588 270h1v1h-1zM1623 270h1v1h-1zM1658 270h1v1h-1zM1693 270h1v1h-1zM1728 270h1v1h-1zM20 289h1v1h-1zM55 289h1v1h-1zM90 289h1v1h-1zM125 289h1v1h-1zM160 289h1v1h-1zM195 289h1v1h-1zM230 289h1v1h-1zM264 289h1v1h-1zM299 289h1v1h-1zM334 289h1v1h-1zM369 289h1v1h-1zM404 289h1v1h-1zM439 289h1v1h-1zM473 289h1v1h-1zM508 289h1v1h-1zM543 289h1v1h-1zM578 289h1v1h-1zM613 289h1v1h-1zM648 289h1v1h-1zM682 289h1v1h-1zM717 289h1v1h-1zM752 289h1v1h-1zM787 289h1v1h-1zM822 289h1v1h-1zM857 289h1v1h-1zM892 289h1v1h-1zM926 289h1v1h-1zM961 289h1v1h-1zM996 289h1v1h-1zM1031 289h1v1h-1zM1066 289h1v1h-1zM1101 289h1v1h-1zM1135 289h1v1h-1zM1170 289h1v1h-1zM1205 289h1v1h-1zM1240 289h1v1h-1zM1275 289h1v1h-1zM1310 289h1v1h-1zM1344 289h1v1h-1zM1379 289h1v1h-1zM1414 289h1v1h-1zM1449 289h1v1h-1zM1484 289h1v1h-1zM1519 289h1v1h-1zM1554 289h1v1h-1zM1588 289h1v1h-1zM1623 289h1v1h-1zM1658 289h1v1h-1zM1693 289h1v1h-1zM1728 289h1v1h-1zM20 307h1v1h-1zM55 307h1v1h-1zM90 307h1v1h-1zM125 307h1v1h-1zM160 307h1v1h-1zM195 307h1v1h-1zM230 307h1v1h-1zM264 307h1v1h-1zM299 307h1v1h-1zM334 307h1v1h-1zM369 307h1v1h-1zM404 307h1v1h-1zM439 307h1v1h-1zM473 307h1v1h-1zM508 307h1v1h-1zM543 307h1v1h-1zM578 307h1v1h-1zM613 307h1v1h-1zM648 307h1v1h-1zM682 307h1v1h-1zM717 307h1v1h-1zM752 307h1v1h-1zM787 307h1v1h-1zM822 307h1v1h-1zM857 307h1v1h-1zM892 307h1v1h-1zM926 307h1v1h-1zM961 307h1v1h-1zM996 307h1v1h-1zM1031 307h1v1h-1zM1066 307h1v1h-1zM1101 307h1v1h-1zM1135 307h1v1h-1zM1170 307h1v1h-1zM1205 307h1v1h-1zM1240 307h1v1h-1zM1275 307h1v1h-1zM1310 307h1v1h-1zM1344 307h1v1h-1zM1379 307h1v1h-1zM1414 307h1v1h-1zM1449 307h1v1h-1zM1484 307h1v1h-1zM1519 307h1v1h-1zM1554 307h1v1h-1zM1588 307h1v1h-1zM1623 307h1v1h-1zM1658 307h1v1h-1zM1693 307h1v1h-1zM1728 307h1v1h-1zM20 326h1v1h-1zM55 326h1v1h-1zM90 326h1v1h-1zM125 326h1v1h-1zM160 326h1v1h-1zM195 326h1v1h-1zM230 326h1v1h-1zM264 326h1v1h-1zM299 326h1v1h-1zM334 326h1v1h-1zM369 326h1v1h-1zM404 326h1v1h-1zM439 326h1v1h-1zM473 326h1v1h-1zM508 326h1v1h-1zM543 326h1v1h-1zM578 326h1v1h-1zM613 326h1v1h-1zM648 326h1v1h-1zM682 326h1v1h-1zM717 326h1v1h-1zM752 326h1v1h-1zM787 326h1v1h-1zM822 326h1v1h-1zM857 326h1v1h-1zM892 326h1v1h-1zM926 326h1v1h-1zM961 326h1v1h-1zM996 326h1v1h-1zM1031 326h1v1h-1zM1066 326h1v1h-1zM1101 326h1v1h-1zM1135 326h1v1h-1zM1170 326h1v1h-1zM1205 326h1v1h-1zM1240 326h1v1h-1zM1275 326h1v1h-1zM1310 326h1v1h-1zM1344 326h1v1h-1zM1379 326h1v1h-1zM1414 326h1v1h-1zM1449 326h1v1h-1zM1484 326h1v1h-1zM1519 326h1v1h-1zM1554 326h1v1h-1zM1588 326h1v1h-1zM1623 326h1v1h-1zM1658 326h1v1h-1zM1693 326h1v1h-1zM1728 326h1v1h-1zM20 345h1v1h-1zM55 345h1v1h-1zM90 345h1v1h-1zM125 345h1v1h-1zM160 345h1v1h-1zM195 345h1v1h-1zM230 345h1v1h-1zM264 345h1v1h-1zM299 345h1v1h-1zM334 345h1v1h-1zM369 345h1v1h-1zM404 345h1v1h-1zM439 345h1v1h-1zM473 345h1v1h-1zM508 345h1v1h-1zM543 345h1v1h-1zM578 345h1v1h-1zM613 345h1v1h-1zM648 345h1v1h-1zM682 345h1v1h-1zM717 345h1v1h-1zM752 345h1v1h-1zM787 345h1v1h-1zM822 345h1v1h-1zM857 345h1v1h-1zM892 345h1v1h-1zM926 345h1v1h-1zM961 345h1v1h-1zM996 345h1v1h-1zM1031 345h1v1h-1zM1066 345h1v1h-1zM1101 345h1v1h-1zM1135 345h1v1h-1zM1170 345h1v1h-1zM1205 345h1v1h-1zM1240 345h1v1h-1zM1275 345h1v1h-1zM1310 345h1v1h-1zM1344 345h1v1h-1zM1379 345h1v1h-1zM1414 345h1v1h-1zM1449 345h1v1h-1zM1484 345h1v1h-1zM1519 345h1v1h-1zM1554 345h1v1h-1zM1588 345h1v1h-1zM1623 345h1v1h-1zM1658 345h1v1h-1zM1693 345h1v1h-1zM1728 345h1v1h-1zM20 363h1v1h-1zM55 363h1v1h-1zM90 363h1v1h-1zM125 363h1v1h-1zM160 363h1v1h-1zM195 363h1v1h-1zM230 363h1v1h-1zM264 363h1v1h-1zM299 363h1v1h-1zM334 363h1v1h-1zM369 363h1v1h-1zM404 363h1v1h-1zM439 363h1v1h-1zM473 363h1v1h-1zM508 363h1v1h-1zM543 363h1v1h-1zM578 363h1v1h-1zM613 363h1v1h-1zM648 363h1v1h-1zM682 363h1v1h-1zM717 363h1v1h-1zM752 363h1v1h-1zM787 363h1v1h-1zM822 363h1v1h-1zM857 363h1v1h-1zM892 363h1v1h-1zM926 363h1v1h-1zM961 363h1v1h-1zM996 363h1v1h-1zM1031 363h1v1h-1zM1066 363h1v1h-1zM1101 363h1v1h-1zM1135 363h1v1h-1zM1170 363h1v1h-1zM1205 363h1v1h-1zM1240 363h1v1h-1zM1275 363h1v1h-1zM1310 363h1v1h-1zM1344 363h1v1h-1zM1379 363h1v1h-1zM1414 363h1v1h-1zM1449 363h1v1h-1zM1484 363h1v1h-1zM1519 363h1v1h-1zM1554 363h1v1h-1zM1588 363h1v1h-1zM1623 363h1v1h-1zM1658 363h1v1h-1zM1693 363h1v1h-1zM1728 363h1v1h-1zM20 382h1v1h-1zM55 382h1v1h-1zM90 382h1v1h-1zM125 382h1v1h-1zM160 382h1v1h-1zM195 382h1v1h-1zM230 382h1v1h-1zM264 382h1v1h-1zM299 382h1v1h-1zM334 382h1v1h-1zM369 382h1v1h-1zM404 382h1v1h-1zM439 382h1v1h-1zM473 382h1v1h-1zM508 382h1v1h-1zM543 382h1v1h-1zM578 382h1v1h-1zM613 382h1v1h-1zM648 382h1v1h-1zM682 382h1v1h-1zM717 382h1v1h-1zM752 382h1v1h-1zM787 382h1v1h-1zM822 382h1v1h-1zM857 382h1v1h-1zM892 382h1v1h-1zM926 382h1v1h-1zM961 382h1v1h-1zM996 382h1v1h-1zM1031 382h1v1h-1zM1066 382h1v1h-1zM1101 382h1v1h-1zM1135 382h1v1h-1zM1170 382h1v1h-1zM1205 382h1v1h-1zM1240 382h1v1h-1zM1275 382h1v1h-1zM1310 382h1v1h-1zM1344 382h1v1h-1zM1379 382h1v1h-1zM1414 382h1v1h-1zM1449 382h1v1h-1zM1484 382h1v1h-1zM1519 382h1v1h-1zM1554 382h1v1h-1zM1588 382h1v1h-1zM1623 382h1v1h-1zM1658 382h1v1h-1zM1693 382h1v1h-1zM1728 382h1v1h-1zM20 400h1v1h-1zM55 400h1v1h-1zM90 400h1v1h-1zM125 400h1v1h-1zM160 400h1v1h-1zM195 400h1v1h-1zM230 400h1v1h-1zM264 400h1v1h-1zM299 400h1v1h-1zM334 400h1v1h-1zM369 400h1v1h-1zM404 400h1v1h-1zM439 400h1v1h-1zM473 400h1v1h-1zM508 400h1v1h-1zM543 400h1v1h-1zM578 400h1v1h-1zM613 400h1v1h-1zM648 400h1v1h-1zM682 400h1v1h-1zM717 400h1v1h-1zM752 400h1v1h-1zM787 400h1v1h-1zM822 400h1v1h-1zM857 400h1v1h-1zM892 400h1v1h-1zM926 400h1v1h-1zM961 400h1v1h-1zM996 400h1v1h-1zM1031 400h1v1h-1zM1066 400h1v1h-1zM1101 400h1v1h-1zM1135 400h1v1h-1zM1170 400h1v1h-1zM1205 400h1v1h-1zM1240 400h1v1h-1zM1275 400h1v1h-1zM1310 400h1v1h-1zM1344 400h1v1h-1zM1379 400h1v1h-1zM1414 400h1v1h-1zM1449 400h1v1h-1zM1484 400h1v1h-1zM1519 400h1v1h-1zM1554 400h1v1h-1zM1588 400h1v1h-1zM1623 400h1v1h-1zM1658 400h1v1h-1zM1693 400h1v1h-1zM1728 400h1v1h-1zM20 419h1v1h-1zM55 419h1v1h-1zM90 419h1v1h-1zM125 419h1v1h-1zM160 419h1v1h-1zM195 419h1v1h-1zM230 419h1v1h-1zM264 419h1v1h-1zM299 419h1v1h-1zM334 419h1v1h-1zM369 419h1v1h-1zM404 419h1v1h-1zM439 419h1v1h-1zM473 419h1v1h-1zM508 419h1v1h-1zM543 419h1v1h-1zM578 419h1v1h-1zM613 419h1v1h-1zM648 419h1v1h-1zM682 419h1v1h-1zM717 419h1v1h-1zM752 419h1v1h-1zM787 419h1v1h-1zM822 419h1v1h-1zM857 419h1v1h-1zM892 419h1v1h-1zM926 419h1v1h-1zM961 419h1v1h-1zM996 419h1v1h-1zM1031 419h1v1h-1zM1066 419h1v1h-1zM1101 419h1v1h-1zM1135 419h1v1h-1zM1170 419h1v1h-1zM1205 419h1v1h-1zM1240 419h1v1h-1zM1275 419h1v1h-1zM1310 419h1v1h-1zM1344 419h1v1h-1zM1379 419h1v1h-1zM1414 419h1v1h-1zM1449 419h1v1h-1zM1484 419h1v1h-1zM1519 419h1v1h-1zM1554 419h1v1h-1zM1588 419h1v1h-1zM1623 419h1v1h-1zM1658 419h1v1h-1zM1693 419h1v1h-1zM1728 419h1v1h-1zM20 448h1v1h-1zM55 448h1v1h-1zM90 448h1v1h-1zM125 448h1v1h-1zM160 448h1v1h-1zM195 448h1v1h-1zM230 448h1v1h-1zM264 448h1v1h-1zM299 448h1v1h-1zM334 448h1v1h-1zM369 448h1v1h-1zM404 448h1v1h-1zM439 448h1v1h-1zM473 448h1v1h-1zM508 448h1v1h-1zM543 448h1v1h-1zM578 448h1v1h-1zM613 448h1v1h-1zM648 448h1v1h-1zM682 448h1v1h-1zM717 448h1v1h-1zM752 448h1v1h-1zM787 448h1v1h-1zM822 448h1v1h-1zM857 448h1v1h-1zM892 448h1v1h-1zM926 448h1v1h-1zM961 448h1v1h-1zM996 448h1v1h-1zM1031 448h1v1h-1zM1066 448h1v1h-1zM1101 448h1v1h-1zM1135 448h1v1h-1zM1170 448h1v1h-1zM1205 448h1v1h-1zM1240 448h1v1h-1zM1275 448h1v1h-1zM1310 448h1v1h-1zM1344 448h1v1h-1zM1379 448h1v1h-1zM1414 448h1v1h-1zM1449 448h1v1h-1zM1484 448h1v1h-1zM1519 448h1v1h-1zM1554 448h1v1h-1zM1588 448h1v1h-1zM1623 448h1v1h-1zM1658 448h1v1h-1zM1693 448h1v1h-1zM1728 448h1v1h-1zM20 466h1v1h-1zM55 466h1v1h-1zM90 466h1v1h-1zM125 466h1v1h-1zM160 466h1v1h-1zM195 466h1v1h-1zM230 466h1v1h-1zM264 466h1v1h-1zM299 466h1v1h-1zM334 466h1v1h-1zM369 466h1v1h-1zM404 466h1v1h-1zM439 466h1v1h-1zM473 466h1v1h-1zM508 466h1v1h-1zM543 466h1v1h-1zM578 466h1v1h-1zM613 466h1v1h-1zM648 466h1v1h-1zM682 466h1v1h-1zM717 466h1v1h-1zM752 466h1v1h-1zM787 466h1v1h-1zM822 466h1v1h-1zM857 466h1v1h-1zM892 466h1v1h-1zM926 466h1v1h-1zM961 466h1v1h-1zM996 466h1v1h-1zM1031 466h1v1h-1zM1066 466h1v1h-1zM1101 466h1v1h-1zM1135 466h1v1h-1zM1170 466h1v1h-1zM1205 466h1v1h-1zM1240 466h1v1h-1zM1275 466h1v1h-1zM1310 466h1v1h-1zM1344 466h1v1h-1zM1379 466h1v1h-1zM1414 466h1v1h-1zM1449 466h1v1h-1zM1484 466h1v1h-1zM1519 466h1v1h-1zM1554 466h1v1h-1zM1588 466h1v1h-1zM1623 466h1v1h-1zM1658 466h1v1h-1zM1693 466h1v1h-1zM1728 466h1v1h-1zM20 485h1v1h-1zM55 485h1v1h-1zM90 485h1v1h-1zM125 485h1v1h-1zM160 485h1v1h-1zM195 485h1v1h-1zM230 485h1v1h-1zM264 485h1v1h-1zM299 485h1v1h-1zM334 485h1v1h-1zM369 485h1v1h-1zM404 485h1v1h-1zM439 485h1v1h-1zM473 485h1v1h-1zM508 485h1v1h-1zM543 485h1v1h-1zM578 485h1v1h-1zM613 485h1v1h-1zM648 485h1v1h-1zM682 485h1v1h-1zM717 485h1v1h-1zM752 485h1v1h-1zM787 485h1v1h-1zM822 485h1v1h-1zM857 485h1v1h-1zM892 485h1v1h-1zM926 485h1v1h-1zM961 485h1v1h-1zM996 485h1v1h-1zM1031 485h1v1h-1zM1066 485h1v1h-1zM1101 485h1v1h-1zM1135 485h1v1h-1zM1170 485h1v1h-1zM1205 485h1v1h-1zM1240 485h1v1h-1zM1275 485h1v1h-1zM1310 485h1v1h-1zM1344 485h1v1h-1zM1379 485h1v1h-1zM1414 485h1v1h-1zM1449 485h1v1h-1zM1484 485h1v1h-1zM1519 485h1v1h-1zM1554 485h1v1h-1zM1588 485h1v1h-1zM1623 485h1v1h-1zM1658 485h1v1h-1zM1693 485h1v1h-1zM1728 485h1v1h-1zM20 504h1v1h-1zM55 504h1v1h-1zM90 504h1v1h-1zM125 504h1v1h-1zM160 504h1v1h-1zM195 504h1v1h-1zM230 504h1v1h-1zM264 504h1v1h-1zM299 504h1v1h-1zM334 504h1v1h-1zM369 504h1v1h-1zM404 504h1v1h-1zM439 504h1v1h-1zM473 504h1v1h-1zM508 504h1v1h-1zM543 504h1v1h-1zM578 504h1v1h-1zM613 504h1v1h-1zM648 504h1v1h-1zM682 504h1v1h-1zM717 504h1v1h-1zM752 504h1v1h-1zM787 504h1v1h-1zM822 504h1v1h-1zM857 504h1v1h-1zM892 504h1v1h-1zM926 504h1v1h-1zM961 504h1v1h-1zM996 504h1v1h-1zM1031 504h1v1h-1zM1066 504h1v1h-1zM1101 504h1v1h-1zM1135 504h1v1h-1zM1170 504h1v1h-1zM1205 504h1v1h-1zM1240 504h1v1h-1zM1275 504h1v1h-1zM1310 504h1v1h-1zM1344 504h1v1h-1zM1379 504h1v1h-1zM1414 504h1v1h-1zM1449 504h1v1h-1zM1484 504h1v1h-1zM1519 504h1v1h-1zM1554 504h1v1h-1zM1588 504h1v1h-1zM1623 504h1v1h-1zM1658 504h1v1h-1zM1693 504h1v1h-1zM1728 504h1v1h-1zM20 522h1v1h-1zM55 522h1v1h-1zM90 522h1v1h-1zM125 522h1v1h-1zM160 522h1v1h-1zM195 522h1v1h-1zM230 522h1v1h-1zM264 522h1v1h-1zM299 522h1v1h-1zM334 522h1v1h-1zM369 522h1v1h-1zM404 522h1v1h-1zM439 522h1v1h-1zM473 522h1v1h-1zM508 522h1v1h-1zM543 522h1v1h-1zM578 522h1v1h-1zM613 522h1v1h-1zM648 522h1v1h-1zM682 522h1v1h-1zM717 522h1v1h-1zM752 522h1v1h-1zM787 522h1v1h-1zM822 522h1v1h-1zM857 522h1v1h-1zM892 522h1v1h-1zM926 522h1v1h-1zM961 522h1v1h-1zM996 522h1v1h-1zM1031 522h1v1h-1zM1066 522h1v1h-1zM1101 522h1v1h-1zM1135 522h1v1h-1zM1170 522h1v1h-1zM1205 522h1v1h-1zM1240 522h1v1h-1zM1275 522h1v1h-1zM1310 522h1v1h-1zM1344 522h1v1h-1zM1379 522h1v1h-1zM1414 522h1v1h-1zM1449 522h1v1h-1zM1484 522h1v1h-1zM1519 522h1v1h-1zM1554 522h1v1h-1zM1588 522h1v1h-1zM1623 522h1v1h-1zM1658 522h1v1h-1zM1693 522h1v1h-1zM1728 522h1v1h-1zM20 541h1v1h-1zM55 541h1v1h-1zM90 541h1v1h-1zM125 541h1v1h-1zM160 541h1v1h-1zM195 541h1v1h-1zM230 541h1v1h-1zM264 541h1v1h-1zM299 541h1v1h-1zM334 541h1v1h-1zM369 541h1v1h-1zM404 541h1v1h-1zM439 541h1v1h-1zM473 541h1v1h-1zM508 541h1v1h-1zM543 541h1v1h-1zM578 541h1v1h-1zM613 541h1v1h-1zM648 541h1v1h-1zM682 541h1v1h-1zM717 541h1v1h-1zM752 541h1v1h-1zM787 541h1v1h-1zM822 541h1v1h-1zM857 541h1v1h-1zM892 541h1v1h-1zM926 541h1v1h-1zM961 541h1v1h-1zM996 541h1v1h-1zM1031 541h1v1h-1zM1066 541h1v1h-1zM1101 541h1v1h-1zM1135 541h1v1h-1zM1170 541h1v1h-1zM1205 541h1v1h-1zM1240 541h1v1h-1zM1275 541h1v1h-1zM1310 541h1v1h-1zM1344 541h1v1h-1zM1379 541h1v1h-1zM1414 541h1v1h-1zM1449 541h1v1h-1zM1484 541h1v1h-1zM1519 541h1v1h-1zM1554 541h1v1h-1zM1588 541h1v1h-1zM1623 541h1v1h-1zM1658 541h1v1h-1zM1693 541h1v1h-1zM1728 541h1v1h-1zM20 559h1v1h-1zM55 559h1v1h-1zM90 559h1v1h-1zM125 559h1v1h-1zM160 559h1v1h-1zM195 559h1v1h-1zM230 559h1v1h-1zM264 559h1v1h-1zM299 559h1v1h-1zM334 559h1v1h-1zM369 559h1v1h-1zM404 559h1v1h-1zM439 559h1v1h-1zM473 559h1v1h-1zM508 559h1v1h-1zM543 559h1v1h-1zM578 559h1v1h-1zM613 559h1v1h-1zM648 559h1v1h-1zM682 559h1v1h-1zM717 559h1v1h-1zM752 559h1v1h-1zM787 559h1v1h-1zM822 559h1v1h-1zM857 559h1v1h-1zM892 559h1v1h-1zM926 559h1v1h-1zM961 559h1v1h-1zM996 559h1v1h-1zM1031 559h1v1h-1zM1066 559h1v1h-1zM1101 559h1v1h-1zM1135 559h1v1h-1zM1170 559h1v1h-1zM1205 559h1v1h-1zM1240 559h1v1h-1zM1275 559h1v1h-1zM1310 559h1v1h-1zM1344 559h1v1h-1zM1379 559h1v1h-1zM1414 559h1v1h-1zM1449 559h1v1h-1zM1484 559h1v1h-1zM1519 559h1v1h-1zM1554 559h1v1h-1zM1588 559h1v1h-1zM1623 559h1v1h-1zM1658 559h1v1h-1zM1693 559h1v1h-1zM1728 559h1v1h-1zM20 578h1v1h-1zM55 578h1v1h-1zM90 578h1v1h-1zM125 578h1v1h-1zM160 578h1v1h-1zM195 578h1v1h-1zM230 578h1v1h-1zM264 578h1v1h-1zM299 578h1v1h-1zM334 578h1v1h-1zM369 578h1v1h-1zM404 578h1v1h-1zM439 578h1v1h-1zM473 578h1v1h-1zM508 578h1v1h-1zM543 578h1v1h-1zM578 578h1v1h-1zM613 578h1v1h-1zM648 578h1v1h-1zM682 578h1v1h-1zM717 578h1v1h-1zM752 578h1v1h-1zM787 578h1v1h-1zM822 578h1v1h-1zM857 578h1v1h-1zM892 578h1v1h-1zM926 578h1v1h-1zM961 578h1v1h-1zM996 578h1v1h-1zM1031 578h1v1h-1zM1066 578h1v1h-1zM1101 578h1v1h-1zM1135 578h1v1h-1zM1170 578h1v1h-1zM1205 578h1v1h-1zM1240 578h1v1h-1zM1275 578h1v1h-1zM1310 578h1v1h-1zM1344 578h1v1h-1zM1379 578h1v1h-1zM1414 578h1v1h-1zM1449 578h1v1h-1zM1484 578h1v1h-1zM1519 578h1v1h-1zM1554 578h1v1h-1zM1588 578h1v1h-1zM1623 578h1v1h-1zM1658 578h1v1h-1zM1693 578h1v1h-1zM1728 578h1v1h-1zM20 597h1v1h-1zM55 597h1v1h-1zM90 597h1v1h-1zM125 597h1v1h-1zM160 597h1v1h-1zM195 597h1v1h-1zM230 597h1v1h-1zM264 597h1v1h-1zM299 597h1v1h-1zM334 597h1v1h-1zM369 597h1v1h-1zM404 597h1v1h-1zM439 597h1v1h-1zM473 597h1v1h-1zM508 597h1v1h-1zM543 597h1v1h-1zM578 597h1v1h-1zM613 597h1v1h-1zM648 597h1v1h-1zM682 597h1v1h-1zM717 597h1v1h-1zM752 597h1v1h-1zM787 597h1v1h-1zM822 597h1v1h-1zM857 597h1v1h-1zM892 597h1v1h-1zM926 597h1v1h-1zM961 597h1v1h-1zM996 597h1v1h-1zM1031 597h1v1h-1zM1066 597h1v1h-1zM1101 597h1v1h-1zM1135 597h1v1h-1zM1170 597h1v1h-1zM1205 597h1v1h-1zM1240 597h1v1h-1zM1275 597h1v1h-1zM1310 597h1v1h-1zM1344 597h1v1h-1zM1379 597h1v1h-1zM1414 597h1v1h-1zM1449 597h1v1h-1zM1484 597h1v1h-1zM1519 597h1v1h-1zM1554 597h1v1h-1zM1588 597h1v1h-1zM1623 597h1v1h-1zM1658 597h1v1h-1zM1693 597h1v1h-1zM1728 597h1v1h-1zM20 615h1v1h-1zM55 615h1v1h-1zM90 615h1v1h-1zM125 615h1v1h-1zM160 615h1v1h-1zM195 615h1v1h-1zM230 615h1v1h-1zM264 615h1v1h-1zM299 615h1v1h-1zM334 615h1v1h-1zM369 615h1v1h-1zM404 615h1v1h-1zM439 615h1v1h-1zM473 615h1v1h-1zM508 615h1v1h-1zM543 615h1v1h-1zM578 615h1v1h-1zM613 615h1v1h-1zM648 615h1v1h-1zM682 615h1v1h-1zM717 615h1v1h-1zM752 615h1v1h-1zM787 615h1v1h-1zM822 615h1v1h-1zM857 615h1v1h-1zM892 615h1v1h-1zM926 615h1v1h-1zM961 615h1v1h-1zM996 615h1v1h-1zM1031 615h1v1h-1zM1066 615h1v1h-1zM1101 615h1v1h-1zM1135 615h1v1h-1zM1170 615h1v1h-1zM1205 615h1v1h-1zM1240 615h1v1h-1zM1275 615h1v1h-1zM1310 615h1v1h-1zM1344 615h1v1h-1zM1379 615h1v1h-1zM1414 615h1v1h-1zM1449 615h1v1h-1zM1484 615h1v1h-1zM1519 615h1v1h-1zM1554 615h1v1h-1zM1588 615h1v1h-1zM1623 615h1v1h-1zM1658 615h1v1h-1zM1693 615h1v1h-1zM1728 615h1v1h-1zM20 631h1v1h-1zM55 631h1v1h-1zM90 631h1v1h-1zM125 631h1v1h-1zM160 631h1v1h-1zM195 631h1v1h-1zM230 631h1v1h-1zM264 631h1v1h-1zM299 631h1v1h-1zM334 631h1v1h-1zM369 631h1v1h-1zM404 631h1v1h-1zM439 631h1v1h-1zM473 631h1v1h-1zM508 631h1v1h-1zM543 631h1v1h-1zM578 631h1v1h-1zM613 631h1v1h-1zM648 631h1v1h-1zM682 631h1v1h-1zM717 631h1v1h-1zM752 631h1v1h-1zM787 631h1v1h-1zM822 631h1v1h-1zM857 631h1v1h-1zM892 631h1v1h-1zM926 631h1v1h-1zM961 631h1v1h-1zM996 631h1v1h-1zM1031 631h1v1h-1zM1066 631h1v1h-1zM1101 631h1v1h-1zM1135 631h1v1h-1zM1170 631h1v1h-1zM1205 631h1v1h-1zM1240 631h1v1h-1zM1275 631h1v1h-1zM1310 631h1v1h-1zM1344 631h1v1h-1zM1379 631h1v1h-1zM1414 631h1v1h-1zM1449 631h1v1h-1zM1484 631h1v1h-1zM1519 631h1v1h-1zM1554 631h1v1h-1zM1588 631h1v1h-1zM1623 631h1v1h-1zM1658 631h1v1h-1zM1693 631h1v1h-1zM1728 631h1v1h-1zM20 650h1v1h-1zM55 650h1v1h-1zM90 650h1v1h-1zM125 650h1v1h-1zM160 650h1v1h-1zM195 650h1v1h-1zM230 650h1v1h-1zM264 650h1v1h-1zM299 650h1v1h-1zM334 650h1v1h-1zM369 650h1v1h-1zM404 650h1v1h-1zM439 650h1v1h-1zM473 650h1v1h-1zM508 650h1v1h-1zM543 650h1v1h-1zM578 650h1v1h-1zM613 650h1v1h-1zM648 650h1v1h-1zM682 650h1v1h-1zM717 650h1v1h-1zM752 650h1v1h-1zM787 650h1v1h-1zM822 650h1v1h-1zM857 650h1v1h-1zM892 650h1v1h-1zM926 650h1v1h-1zM961 650h1v1h-1zM996 650h1v1h-1zM1031 650h1v1h-1zM1066 650h1v1h-1zM1101 650h1v1h-1zM1135 650h1v1h-1zM1170 650h1v1h-1zM1205 650h1v1h-1zM1240 650h1v1h-1zM1275 650h1v1h-1zM1310 650h1v1h-1zM1344 650h1v1h-1zM1379 650h1v1h-1zM1414 650h1v1h-1zM1449 650h1v1h-1zM1484 650h1v1h-1zM1519 650h1v1h-1zM1554 650h1v1h-1zM1588 650h1v1h-1zM1623 650h1v1h-1zM1658 650h1v1h-1zM1693 650h1v1h-1zM1728 650h1v1h-1zM20 668h1v1h-1zM55 668h1v1h-1zM90 668h1v1h-1zM125 668h1v1h-1zM160 668h1v1h-1zM195 668h1v1h-1zM230 668h1v1h-1zM264 668h1v1h-1zM299 668h1v1h-1zM334 668h1v1h-1zM369 668h1v1h-1zM404 668h1v1h-1zM439 668h1v1h-1zM473 668h1v1h-1zM508 668h1v1h-1zM543 668h1v1h-1zM578 668h1v1h-1zM613 668h1v1h-1zM648 668h1v1h-1zM682 668h1v1h-1zM717 668h1v1h-1zM752 668h1v1h-1zM787 668h1v1h-1zM822 668h1v1h-1zM857 668h1v1h-1zM892 668h1v1h-1zM926 668h1v1h-1zM961 668h1v1h-1zM996 668h1v1h-1zM1031 668h1v1h-1zM1066 668h1v1h-1zM1101 668h1v1h-1zM1135 668h1v1h-1zM1170 668h1v1h-1zM1205 668h1v1h-1zM1240 668h1v1h-1zM1275 668h1v1h-1zM1310 668h1v1h-1zM1344 668h1v1h-1zM1379 668h1v1h-1zM1414 668h1v1h-1zM1449 668h1v1h-1zM1484 668h1v1h-1zM1519 668h1v1h-1zM1554 668h1v1h-1zM1588 668h1v1h-1zM1623 668h1v1h-1zM1658 668h1v1h-1zM1693 668h1v1h-1zM1728 668h1v1h-1zM20 687h1v1h-1zM55 687h1v1h-1zM90 687h1v1h-1zM125 687h1v1h-1zM160 687h1v1h-1zM195 687h1v1h-1zM230 687h1v1h-1zM264 687h1v1h-1zM299 687h1v1h-1zM334 687h1v1h-1zM369 687h1v1h-1zM404 687h1v1h-1zM439 687h1v1h-1zM473 687h1v1h-1zM508 687h1v1h-1zM543 687h1v1h-1zM578 687h1v1h-1zM613 687h1v1h-1zM648 687h1v1h-1zM682 687h1v1h-1zM717 687h1v1h-1zM752 687h1v1h-1zM787 687h1v1h-1zM822 687h1v1h-1zM857 687h1v1h-1zM892 687h1v1h-1zM926 687h1v1h-1zM961 687h1v1h-1zM996 687h1v1h-1zM1031 687h1v1h-1zM1066 687h1v1h-1zM1101 687h1v1h-1zM1135 687h1v1h-1zM1170 687h1v1h-1zM1205 687h1v1h-1zM1240 687h1v1h-1zM1275 687h1v1h-1zM1310 687h1v1h-1zM1344 687h1v1h-1zM1379 687h1v1h-1zM1414 687h1v1h-1zM1449 687h1v1h-1zM1484 687h1v1h-1zM1519 687h1v1h-1zM1554 687h1v1h-1zM1588 687h1v1h-1zM1623 687h1v1h-1zM1658 687h1v1h-1zM1693 687h1v1h-1zM1728 687h1v1h-1zM20 706h1v1h-1zM55 706h1v1h-1zM90 706h1v1h-1zM125 706h1v1h-1zM160 706h1v1h-1zM195 706h1v1h-1zM230 706h1v1h-1zM264 706h1v1h-1zM299 706h1v1h-1zM334 706h1v1h-1zM369 706h1v1h-1zM404 706h1v1h-1zM439 706h1v1h-1zM473 706h1v1h-1zM508 706h1v1h-1zM543 706h1v1h-1zM578 706h1v1h-1zM613 706h1v1h-1zM648 706h1v1h-1zM682 706h1v1h-1zM717 706h1v1h-1zM752 706h1v1h-1zM787 706h1v1h-1zM822 706h1v1h-1zM857 706h1v1h-1zM892 706h1v1h-1zM926 706h1v1h-1zM961 706h1v1h-1zM996 706h1v1h-1zM1031 706h1v1h-1zM1066 706h1v1h-1zM1101 706h1v1h-1zM1135 706h1v1h-1zM1170 706h1v1h-1zM1205 706h1v1h-1zM1240 706h1v1h-1zM1275 706h1v1h-1zM1310 706h1v1h-1zM1344 706h1v1h-1zM1379 706h1v1h-1zM1414 706h1v1h-1zM1449 706h1v1h-1zM1484 706h1v1h-1zM1519 706h1v1h-1zM1554 706h1v1h-1zM1588 706h1v1h-1zM1623 706h1v1h-1zM1658 706h1v1h-1zM1693 706h1v1h-1zM1728 706h1v1h-1zM20 724h1v1h-1zM55 724h1v1h-1zM90 724h1v1h-1zM125 724h1v1h-1zM160 724h1v1h-1zM195 724h1v1h-1zM230 724h1v1h-1zM264 724h1v1h-1zM299 724h1v1h-1zM334 724h1v1h-1zM369 724h1v1h-1zM404 724h1v1h-1zM439 724h1v1h-1zM473 724h1v1h-1zM508 724h1v1h-1zM543 724h1v1h-1zM578 724h1v1h-1zM613 724h1v1h-1zM648 724h1v1h-1zM682 724h1v1h-1zM717 724h1v1h-1zM752 724h1v1h-1zM787 724h1v1h-1zM822 724h1v1h-1zM857 724h1v1h-1zM892 724h1v1h-1zM926 724h1v1h-1zM961 724h1v1h-1zM996 724h1v1h-1zM1031 724h1v1h-1zM1066 724h1v1h-1zM1101 724h1v1h-1zM1135 724h1v1h-1zM1170 724h1v1h-1zM1205 724h1v1h-1zM1240 724h1v1h-1zM1275 724h1v1h-1zM1310 724h1v1h-1zM1344 724h1v1h-1zM1379 724h1v1h-1zM1414 724h1v1h-1zM1449 724h1v1h-1zM1484 724h1v1h-1zM1519 724h1v1h-1zM1554 724h1v1h-1zM1588 724h1v1h-1zM1623 724h1v1h-1zM1658 724h1v1h-1zM1693 724h1v1h-1zM1728 724h1v1h-1zM20 743h1v1h-1zM55 743h1v1h-1zM90 743h1v1h-1zM125 743h1v1h-1zM160 743h1v1h-1zM195 743h1v1h-1zM230 743h1v1h-1zM264 743h1v1h-1zM299 743h1v1h-1zM334 743h1v1h-1zM369 743h1v1h-1zM404 743h1v1h-1zM439 743h1v1h-1zM473 743h1v1h-1zM508 743h1v1h-1zM543 743h1v1h-1zM578 743h1v1h-1zM613 743h1v1h-1zM648 743h1v1h-1zM682 743h1v1h-1zM717 743h1v1h-1zM752 743h1v1h-1zM787 743h1v1h-1zM822 743h1v1h-1zM857 743h1v1h-1zM892 743h1v1h-1zM926 743h1v1h-1zM961 743h1v1h-1zM996 743h1v1h-1zM1031 743h1v1h-1zM1066 743h1v1h-1zM1101 743h1v1h-1zM1135 743h1v1h-1zM1170 743h1v1h-1zM1205 743h1v1h-1zM1240 743h1v1h-1zM1275 743h1v1h-1zM1310 743h1v1h-1zM1344 743h1v1h-1zM1379 743h1v1h-1zM1414 743h1v1h-1zM1449 743h1v1h-1zM1484 743h1v1h-1zM1519 743h1v1h-1zM1554 743h1v1h-1zM1588 743h1v1h-1zM1623 743h1v1h-1zM1658 743h1v1h-1zM1693 743h1v1h-1zM1728 743h1v1h-1zM20 762h1v1h-1zM55 762h1v1h-1zM90 762h1v1h-1zM125 762h1v1h-1zM160 762h1v1h-1zM195 762h1v1h-1zM230 762h1v1h-1zM264 762h1v1h-1zM299 762h1v1h-1zM334 762h1v1h-1zM369 762h1v1h-1zM404 762h1v1h-1zM439 762h1v1h-1zM473 762h1v1h-1zM508 762h1v1h-1zM543 762h1v1h-1zM578 762h1v1h-1zM613 762h1v1h-1zM648 762h1v1h-1zM682 762h1v1h-1zM717 762h1v1h-1zM752 762h1v1h-1zM787 762h1v1h-1zM822 762h1v1h-1zM857 762h1v1h-1zM892 762h1v1h-1zM926 762h1v1h-1zM961 762h1v1h-1zM996 762h1v1h-1zM1031 762h1v1h-1zM1066 762h1v1h-1zM1101 762h1v1h-1zM1135 762h1v1h-1zM1170 762h1v1h-1zM1205 762h1v1h-1zM1240 762h1v1h-1zM1275 762h1v1h-1zM1310 762h1v1h-1zM1344 762h1v1h-1zM1379 762h1v1h-1zM1414 762h1v1h-1zM1449 762h1v1h-1zM1484 762h1v1h-1zM1519 762h1v1h-1zM1554 762h1v1h-1zM1588 762h1v1h-1zM1623 762h1v1h-1zM1658 762h1v1h-1zM1693 762h1v1h-1zM1728 762h1v1h-1zM20 780h1v1h-1zM55 780h1v1h-1zM90 780h1v1h-1zM125 780h1v1h-1zM160 780h1v1h-1zM195 780h1v1h-1zM230 780h1v1h-1zM264 780h1v1h-1zM299 780h1v1h-1zM334 780h1v1h-1zM369 780h1v1h-1zM404 780h1v1h-1zM439 780h1v1h-1zM473 780h1v1h-1zM508 780h1v1h-1zM543 780h1v1h-1zM578 780h1v1h-1zM613 780h1v1h-1zM648 780h1v1h-1zM682 780h1v1h-1zM717 780h1v1h-1zM752 780h1v1h-1zM787 780h1v1h-1zM822 780h1v1h-1zM857 780h1v1h-1zM892 780h1v1h-1zM926 780h1v1h-1zM961 780h1v1h-1zM996 780h1v1h-1zM1031 780h1v1h-1zM1066 780h1v1h-1zM1101 780h1v1h-1zM1135 780h1v1h-1zM1170 780h1v1h-1zM1205 780h1v1h-1zM1240 780h1v1h-1zM1275 780h1v1h-1zM1310 780h1v1h-1zM1344 780h1v1h-1zM1379 780h1v1h-1zM1414 780h1v1h-1zM1449 780h1v1h-1zM1484 780h1v1h-1zM1519 780h1v1h-1zM1554 780h1v1h-1zM1588 780h1v1h-1zM1623 780h1v1h-1zM1658 780h1v1h-1zM1693 780h1v1h-1zM1728 780h1v1h-1zM20 799h1v1h-1zM55 799h1v1h-1zM90 799h1v1h-1zM125 799h1v1h-1zM160 799h1v1h-1zM195 799h1v1h-1zM230 799h1v1h-1zM264 799h1v1h-1zM299 799h1v1h-1zM334 799h1v1h-1zM369 799h1v1h-1zM404 799h1v1h-1zM439 799h1v1h-1zM473 799h1v1h-1zM508 799h1v1h-1zM543 799h1v1h-1zM578 799h1v1h-1zM613 799h1v1h-1zM648 799h1v1h-1zM682 799h1v1h-1zM717 799h1v1h-1zM752 799h1v1h-1zM787 799h1v1h-1zM822 799h1v1h-1zM857 799h1v1h-1zM892 799h1v1h-1zM926 799h1v1h-1zM961 799h1v1h-1zM996 799h1v1h-1zM1031 799h1v1h-1zM1066 799h1v1h-1zM1101 799h1v1h-1zM1135 799h1v1h-1zM1170 799h1v1h-1zM1205 799h1v1h-1zM1240 799h1v1h-1zM1275 799h1v1h-1zM1310 799h1v1h-1zM1344 799h1v1h-1zM1379 799h1v1h-1zM1414 799h1v1h-1zM1449 799h1v1h-1zM1484 799h1v1h-1zM1519 799h1v1h-1zM1554 799h1v1h-1zM1588 799h1v1h-1zM1623 799h1v1h-1zM1658 799h1v1h-1zM1693 799h1v1h-1zM1728 799h1v1h-1zM20 816h1v1h-1zM55 816h1v1h-1zM90 816h1v1h-1zM125 816h1v1h-1zM160 816h1v1h-1zM195 816h1v1h-1zM230 816h1v1h-1zM264 816h1v1h-1zM299 816h1v1h-1zM334 816h1v1h-1zM369 816h1v1h-1zM404 816h1v1h-1zM439 816h1v1h-1zM473 816h1v1h-1zM508 816h1v1h-1zM543 816h1v1h-1zM578 816h1v1h-1zM613 816h1v1h-1zM648 816h1v1h-1zM682 816h1v1h-1zM717 816h1v1h-1zM752 816h1v1h-1zM787 816h1v1h-1zM822 816h1v1h-1zM857 816h1v1h-1zM892 816h1v1h-1zM926 816h1v1h-1zM961 816h1v1h-1zM996 816h1v1h-1zM1031 816h1v1h-1zM1066 816h1v1h-1zM1101 816h1v1h-1zM1135 816h1v1h-1zM1170 816h1v1h-1zM1205 816h1v1h-1zM1240 816h1v1h-1zM1275 816h1v1h-1zM1310 816h1v1h-1zM1344 816h1v1h-1zM1379 816h1v1h-1zM1414 816h1v1h-1zM1449 816h1v1h-1zM1484 816h1v1h-1zM1519 816h1v1h-1zM1554 816h1v1h-1zM1588 816h1v1h-1zM1623 816h1v1h-1zM1658 816h1v1h-1zM1693 816h1v1h-1zM1728 816h1v1h-1zM20 834h1v1h-1zM55 834h1v1h-1zM90 834h1v1h-1zM125 834h1v1h-1zM160 834h1v1h-1zM195 834h1v1h-1zM230 834h1v1h-1zM264 834h1v1h-1zM299 834h1v1h-1zM334 834h1v1h-1zM369 834h1v1h-1zM404 834h1v1h-1zM439 834h1v1h-1zM473 834h1v1h-1zM508 834h1v1h-1zM543 834h1v1h-1zM578 834h1v1h-1zM613 834h1v1h-1zM648 834h1v1h-1zM682 834h1v1h-1zM717 834h1v1h-1zM752 834h1v1h-1zM787 834h1v1h-1zM822 834h1v1h-1zM857 834h1v1h-1zM892 834h1v1h-1zM926 834h1v1h-1zM961 834h1v1h-1zM996 834h1v1h-1zM1031 834h1v1h-1zM1066 834h1v1h-1zM1101 834h1v1h-1zM1135 834h1v1h-1zM1170 834h1v1h-1zM1205 834h1v1h-1zM1240 834h1v1h-1zM1275 834h1v1h-1zM1310 834h1v1h-1zM1344 834h1v1h-1zM1379 834h1v1h-1zM1414 834h1v1h-1zM1449 834h1v1h-1zM1484 834h1v1h-1zM1519 834h1v1h-1zM1554 834h1v1h-1zM1588 834h1v1h-1zM1623 834h1v1h-1zM1658 834h1v1h-1zM1693 834h1v1h-1zM1728 834h1v1h-1zM20 852h1v1h-1zM55 852h1v1h-1zM90 852h1v1h-1zM125 852h1v1h-1zM160 852h1v1h-1zM195 852h1v1h-1zM230 852h1v1h-1zM264 852h1v1h-1zM299 852h1v1h-1zM334 852h1v1h-1zM369 852h1v1h-1zM404 852h1v1h-1zM439 852h1v1h-1zM473 852h1v1h-1zM508 852h1v1h-1zM543 852h1v1h-1zM578 852h1v1h-1zM613 852h1v1h-1zM648 852h1v1h-1zM682 852h1v1h-1zM717 852h1v1h-1zM752 852h1v1h-1zM787 852h1v1h-1zM822 852h1v1h-1zM857 852h1v1h-1zM892 852h1v1h-1zM926 852h1v1h-1zM961 852h1v1h-1zM996 852h1v1h-1zM1031 852h1v1h-1zM1066 852h1v1h-1zM1101 852h1v1h-1zM1135 852h1v1h-1zM1170 852h1v1h-1zM1205 852h1v1h-1zM1240 852h1v1h-1zM1275 852h1v1h-1zM1310 852h1v1h-1zM1344 852h1v1h-1zM1379 852h1v1h-1zM1414 852h1v1h-1zM1449 852h1v1h-1zM1484 852h1v1h-1zM1519 852h1v1h-1zM1554 852h1v1h-1zM1588 852h1v1h-1zM1623 852h1v1h-1zM1658 852h1v1h-1zM1693 852h1v1h-1zM1728 852h1v1h-1zM20 870h1v1h-1zM55 870h1v1h-1zM90 870h1v1h-1zM125 870h1v1h-1zM160 870h1v1h-1zM195 870h1v1h-1zM230 870h1v1h-1zM264 870h1v1h-1zM299 870h1v1h-1zM334 870h1v1h-1zM369 870h1v1h-1zM404 870h1v1h-1zM439 870h1v1h-1zM473 870h1v1h-1zM508 870h1v1h-1zM543 870h1v1h-1zM578 870h1v1h-1zM613 870h1v1h-1zM648 870h1v1h-1zM682 870h1v1h-1zM717 870h1v1h-1zM752 870h1v1h-1zM787 870h1v1h-1zM822 870h1v1h-1zM857 870h1v1h-1zM892 870h1v1h-1zM926 870h1v1h-1zM961 870h1v1h-1zM996 870h1v1h-1zM1031 870h1v1h-1zM1066 870h1v1h-1zM1101 870h1v1h-1zM1135 870h1v1h-1zM1170 870h1v1h-1zM1205 870h1v1h-1zM1240 870h1v1h-1zM1275 870h1v1h-1zM1310 870h1v1h-1zM1344 870h1v1h-1zM1379 870h1v1h-1zM1414 870h1v1h-1zM1449 870h1v1h-1zM1484 870h1v1h-1zM1519 870h1v1h-1zM1554 870h1v1h-1zM1588 870h1v1h-1zM1623 870h1v1h-1zM1658 870h1v1h-1zM1693 870h1v1h-1zM1728 870h1v1h-1zM20 888h1v1h-1zM55 888h1v1h-1zM90 888h1v1h-1zM125 888h1v1h-1zM160 888h1v1h-1zM195 888h1v1h-1zM230 888h1v1h-1zM264 888h1v1h-1zM299 888h1v1h-1zM334 888h1v1h-1zM369 888h1v1h-1zM404 888h1v1h-1zM439 888h1v1h-1zM473 888h1v1h-1zM508 888h1v1h-1zM543 888h1v1h-1zM578 888h1v1h-1zM613 888h1v1h-1zM648 888h1v1h-1zM682 888h1v1h-1zM717 888h1v1h-1zM752 888h1v1h-1zM787 888h1v1h-1zM822 888h1v1h-1zM857 888h1v1h-1zM892 888h1v1h-1zM926 888h1v1h-1zM961 888h1v1h-1zM996 888h1v1h-1zM1031 888h1v1h-1zM1066 888h1v1h-1zM1101 888h1v1h-1zM1135 888h1v1h-1zM1170 888h1v1h-1zM1205 888h1v1h-1zM1240 888h1v1h-1zM1275 888h1v1h-1zM1310 888h1v1h-1zM1344 888h1v1h-1zM1379 888h1v1h-1zM1414 888h1v1h-1zM1449 888h1v1h-1zM1484 888h1v1h-1zM1519 888h1v1h-1zM1554 888h1v1h-1zM1588 888h1v1h-1zM1623 888h1v1h-1zM1658 888h1v1h-1zM1693 888h1v1h-1zM1728 888h1v1h-1zM20 906h1v1h-1zM55 906h1v1h-1zM90 906h1v1h-1zM125 906h1v1h-1zM160 906h1v1h-1zM195 906h1v1h-1zM230 906h1v1h-1zM264 906h1v1h-1zM299 906h1v1h-1zM334 906h1v1h-1zM369 906h1v1h-1zM404 906h1v1h-1zM439 906h1v1h-1zM473 906h1v1h-1zM508 906h1v1h-1zM543 906h1v1h-1zM578 906h1v1h-1zM613 906h1v1h-1zM648 906h1v1h-1zM682 906h1v1h-1zM717 906h1v1h-1zM752 906h1v1h-1zM787 906h1v1h-1zM822 906h1v1h-1zM857 906h1v1h-1zM892 906h1v1h-1zM926 906h1v1h-1zM961 906h1v1h-1zM996 906h1v1h-1zM1031 906h1v1h-1zM1066 906h1v1h-1zM1101 906h1v1h-1zM1135 906h1v1h-1zM1170 906h1v1h-1zM1205 906h1v1h-1zM1240 906h1v1h-1zM1275 906h1v1h-1zM1310 906h1v1h-1zM1344 906h1v1h-1zM1379 906h1v1h-1zM1414 906h1v1h-1zM1449 906h1v1h-1zM1484 906h1v1h-1zM1519 906h1v1h-1zM1554 906h1v1h-1zM1588 906h1v1h-1zM1623 906h1v1h-1zM1658 906h1v1h-1zM1693 906h1v1h-1zM1728 906h1v1h-1zM20 925h1v1h-1zM55 925h1v1h-1zM90 925h1v1h-1zM125 925h1v1h-1zM160 925h1v1h-1zM195 925h1v1h-1zM230 925h1v1h-1zM264 925h1v1h-1zM299 925h1v1h-1zM334 925h1v1h-1zM369 925h1v1h-1zM404 925h1v1h-1zM439 925h1v1h-1zM473 925h1v1h-1zM508 925h1v1h-1zM543 925h1v1h-1zM578 925h1v1h-1zM613 925h1v1h-1zM648 925h1v1h-1zM682 925h1v1h-1zM717 925h1v1h-1zM752 925h1v1h-1zM787 925h1v1h-1zM822 925h1v1h-1zM857 925h1v1h-1zM892 925h1v1h-1zM926 925h1v1h-1zM961 925h1v1h-1zM996 925h1v1h-1zM1031 925h1v1h-1zM1066 925h1v1h-1zM1101 925h1v1h-1zM1135 925h1v1h-1zM1170 925h1v1h-1zM1205 925h1v1h-1zM1240 925h1v1h-1zM1275 925h1v1h-1zM1310 925h1v1h-1zM1344 925h1v1h-1zM1379 925h1v1h-1zM1414 925h1v1h-1zM1449 925h1v1h-1zM1484 925h1v1h-1zM1519 925h1v1h-1zM1554 925h1v1h-1zM1588 925h1v1h-1zM1623 925h1v1h-1zM1658 925h1v1h-1zM1693 925h1v1h-1zM1728 925h1v1h-1zM20 943h1v1h-1zM55 943h1v1h-1zM90 943h1v1h-1zM125 943h1v1h-1zM160 943h1v1h-1zM195 943h1v1h-1zM230 943h1v1h-1zM264 943h1v1h-1zM299 943h1v1h-1zM334 943h1v1h-1zM369 943h1v1h-1zM404 943h1v1h-1zM439 943h1v1h-1zM473 943h1v1h-1zM508 943h1v1h-1zM543 943h1v1h-1zM578 943h1v1h-1zM613 943h1v1h-1zM648 943h1v1h-1zM682 943h1v1h-1zM717 943h1v1h-1zM752 943h1v1h-1zM787 943h1v1h-1zM822 943h1v1h-1zM857 943h1v1h-1zM892 943h1v1h-1zM926 943h1v1h-1zM961 943h1v1h-1zM996 943h1v1h-1zM1031 943h1v1h-1zM1066 943h1v1h-1zM1101 943h1v1h-1zM1135 943h1v1h-1zM1170 943h1v1h-1zM1205 943h1v1h-1zM1240 943h1v1h-1zM1275 943h1v1h-1zM1310 943h1v1h-1zM1344 943h1v1h-1zM1379 943h1v1h-1zM1414 943h1v1h-1zM1449 943h1v1h-1zM1484 943h1v1h-1zM1519 943h1v1h-1zM1554 943h1v1h-1zM1588 943h1v1h-1zM1623 943h1v1h-1zM1658 943h1v1h-1zM1693 943h1v1h-1zM1728 943h1v1h-1zM20 961h1v1h-1zM55 961h1v1h-1zM90 961h1v1h-1zM125 961h1v1h-1zM160 961h1v1h-1zM195 961h1v1h-1zM230 961h1v1h-1zM264 961h1v1h-1zM299 961h1v1h-1zM334 961h1v1h-1zM369 961h1v1h-1zM404 961h1v1h-1zM439 961h1v1h-1zM473 961h1v1h-1zM508 961h1v1h-1zM543 961h1v1h-1zM578 961h1v1h-1zM613 961h1v1h-1zM648 961h1v1h-1zM682 961h1v1h-1zM717 961h1v1h-1zM752 961h1v1h-1zM787 961h1v1h-1zM822 961h1v1h-1zM857 961h1v1h-1zM892 961h1v1h-1zM926 961h1v1h-1zM961 961h1v1h-1zM996 961h1v1h-1zM1031 961h1v1h-1zM1066 961h1v1h-1zM1101 961h1v1h-1zM1135 961h1v1h-1zM1170 961h1v1h-1zM1205 961h1v1h-1zM1240 961h1v1h-1zM1275 961h1v1h-1zM1310 961h1v1h-1zM1344 961h1v1h-1zM1379 961h1v1h-1zM1414 961h1v1h-1zM1449 961h1v1h-1zM1484 961h1v1h-1zM1519 961h1v1h-1zM1554 961h1v1h-1zM1588 961h1v1h-1zM1623 961h1v1h-1zM1658 961h1v1h-1zM1693 961h1v1h-1zM1728 961h1v1h-1zM20 979h1v1h-1zM55 979h1v1h-1zM90 979h1v1h-1zM125 979h1v1h-1zM160 979h1v1h-1zM195 979h1v1h-1zM230 979h1v1h-1zM264 979h1v1h-1zM299 979h1v1h-1zM334 979h1v1h-1zM369 979h1v1h-1zM404 979h1v1h-1zM439 979h1v1h-1zM473 979h1v1h-1zM508 979h1v1h-1zM543 979h1v1h-1zM578 979h1v1h-1zM613 979h1v1h-1zM648 979h1v1h-1zM682 979h1v1h-1zM717 979h1v1h-1zM752 979h1v1h-1zM787 979h1v1h-1zM822 979h1v1h-1zM857 979h1v1h-1zM892 979h1v1h-1zM926 979h1v1h-1zM961 979h1v1h-1zM996 979h1v1h-1zM1031 979h1v1h-1zM1066 979h1v1h-1zM1101 979h1v1h-1zM1135 979h1v1h-1zM1170 979h1v1h-1zM1205 979h1v1h-1zM1240 979h1v1h-1zM1275 979h1v1h-1zM1310 979h1v1h-1zM1344 979h1v1h-1zM1379 979h1v1h-1zM1414 979h1v1h-1zM1449 979h1v1h-1zM1484 979h1v1h-1zM1519 979h1v1h-1zM1554 979h1v1h-1zM1588 979h1v1h-1zM1623 979h1v1h-1zM1658 979h1v1h-1zM1693 979h1v1h-1zM1728 979h1v1h-1z" fill="#c4c4c4"/>
<line x1="125.5" y1="243" x2="125.5" y2="987" stroke="#c4c4c4" stroke-width="1" stroke-dasharray="1 3"/>
<line x1="299.5" y1="243" x2="299.5" y2="987" stroke="#c4c4c4" stroke-width="1" stroke-dasharray="1 3"/>
<line x1="473.5" y1="243" x2="473.5" y2="987" stroke="#c4c4c4" stroke-width="1" stroke-dasharray="1 3"/>
<line x1="648.5" y1="243" x2="648.5" y2="987" stroke="#c4c4c4" stroke-width="1" stroke-dasharray="1 3"/>
<line x1="822.5" y1="243" x2="822.5" y2="987" stroke="#c4c4c4" stroke-width="1" stroke-dasharray="1 3"/>
<line x1="996.5" y1="243" x2="996.5" y2="987" stroke="#c4c4c4" stroke-width="1" stroke-dasharray="1 3"/>
<line x1="1170.5" y1="243" x2="1170.5" y2="987" stroke="#c4c4c4" stroke-width="1" stroke-dasharray="1 3"/>
<line x1="1344.5" y1="243" x2="1344.5" y2="987" stroke="#c4c4c4" stroke-width="1" stroke-dasharray="1 3"/>
<line x1="1519.5" y1="243" x2="1519.5" y2="987" stroke="#c4c4c4" stroke-width="1" stroke-dasharray="1 3"/>
<line x1="1693.5" y1="243" x2="1693.5" y2="987" stroke="#c4c4c4" stroke-width="1" stroke-dasharray="1 3"/>
<line x1="42" y1="363.5" x2="1716" y2="363.5" stroke="#d4d4d4" stroke-width="1" stroke-dasharray="5 5"/>
<line x1="42" y1="504.5" x2="1716" y2="504.5" stroke="#d4d4d4" stroke-width="1" stroke-dasharray="5 5"/>
<line x1="42" y1="650.5" x2="1716" y2="650.5" stroke="#d4d4d4" stroke-width="1" stroke-dasharray="5 5"/>
<line x1="42" y1="961.5" x2="1716" y2="961.5" stroke="#d4d4d4" stroke-width="1" stroke-dasharray="5 5"/>
<text x="1741" y="257.0" font-size="12.3" fill="#e68a2c" text-anchor="end" font-weight="normal">95.506 W</text>
<text x="1741" y="275.6" font-size="12.3" fill="#e68a2c" text-anchor="end" font-weight="normal">79.588 W</text>
<text x="1741" y="294.1" font-size="12.3" fill="#e68a2c" text-anchor="end" font-weight="normal">63.671 W</text>
<text x="1741" y="312.7" font-size="12.3" fill="#e68a2c" text-anchor="end" font-weight="normal">47.753 W</text>
<text x="1741" y="331.2" font-size="12.3" fill="#e68a2c" text-anchor="end" font-weight="normal">31.835 W</text>
<text x="1741" y="349.8" font-size="12.3" fill="#e68a2c" text-anchor="end" font-weight="normal">15.918 W</text>
<text x="1741" y="368.4" font-size="12.3" fill="#e68a2c" text-anchor="end" font-weight="normal">0 W</text>
<text x="1741" y="386.9" font-size="12.3" fill="#e68a2c" text-anchor="end" font-weight="normal">-15.918 W</text>
<text x="1741" y="405.5" font-size="12.3" fill="#e68a2c" text-anchor="end" font-weight="normal">-31.835 W</text>
<text x="1741" y="424.0" font-size="12.3" fill="#e68a2c" text-anchor="end" font-weight="normal">-47.753 W</text>
<text x="1741" y="453.1" font-size="12.3" fill="#e6e024" text-anchor="end" font-weight="normal">30 V</text>
<text x="1741" y="471.7" font-size="12.3" fill="#e6e024" text-anchor="end" font-weight="normal">20 V</text>
<text x="1741" y="490.3" font-size="12.3" fill="#e6e024" text-anchor="end" font-weight="normal">10 V</text>
<text x="1741" y="508.9" font-size="12.3" fill="#e6e024" text-anchor="end" font-weight="normal">0 V</text>
<text x="1741" y="527.5" font-size="12.3" fill="#e6e024" text-anchor="end" font-weight="normal">-10 V</text>
<text x="1741" y="546.1" font-size="12.3" fill="#e6e024" text-anchor="end" font-weight="normal">-20 V</text>
<text x="1741" y="564.7" font-size="12.3" fill="#e6e024" text-anchor="end" font-weight="normal">-30 V</text>
<text x="1741" y="583.3" font-size="12.3" fill="#e6e024" text-anchor="end" font-weight="normal">-40 V</text>
<text x="1741" y="601.9" font-size="12.3" fill="#e6e024" text-anchor="end" font-weight="normal">-50 V</text>
<text x="1741" y="636.1" font-size="12.3" fill="#26c2d2" text-anchor="end" font-weight="normal">530 mA</text>
<text x="1741" y="654.8" font-size="12.3" fill="#26c2d2" text-anchor="end" font-weight="normal">0 A</text>
<text x="1741" y="673.5" font-size="12.3" fill="#26c2d2" text-anchor="end" font-weight="normal">-530 mA</text>
<text x="1741" y="692.2" font-size="12.3" fill="#26c2d2" text-anchor="end" font-weight="normal">-1.06 A</text>
<text x="1741" y="710.9" font-size="12.3" fill="#26c2d2" text-anchor="end" font-weight="normal">-1.59 A</text>
<text x="1741" y="729.6" font-size="12.3" fill="#26c2d2" text-anchor="end" font-weight="normal">-2.12 A</text>
<text x="1741" y="748.3" font-size="12.3" fill="#26c2d2" text-anchor="end" font-weight="normal">-2.65 A</text>
<text x="1741" y="767.0" font-size="12.3" fill="#26c2d2" text-anchor="end" font-weight="normal">-3.18 A</text>
<text x="1741" y="821.1" font-size="12.3" fill="#e04a62" text-anchor="end" font-weight="normal">13.6 V</text>
<text x="1741" y="839.2" font-size="12.3" fill="#e04a62" text-anchor="end" font-weight="normal">11.9 V</text>
<text x="1741" y="857.3" font-size="12.3" fill="#e04a62" text-anchor="end" font-weight="normal">10.2 V</text>
<text x="1741" y="875.5" font-size="12.3" fill="#e04a62" text-anchor="end" font-weight="normal">8.5 V</text>
<text x="1741" y="893.6" font-size="12.3" fill="#e04a62" text-anchor="end" font-weight="normal">6.8 V</text>
<text x="1741" y="911.7" font-size="12.3" fill="#e04a62" text-anchor="end" font-weight="normal">5.1 V</text>
<text x="1741" y="929.8" font-size="12.3" fill="#e04a62" text-anchor="end" font-weight="normal">3.4 V</text>
<text x="1741" y="947.9" font-size="12.3" fill="#e04a62" text-anchor="end" font-weight="normal">1.7 V</text>
<text x="1741" y="966.1" font-size="12.3" fill="#e04a62" text-anchor="end" font-weight="normal">0 V</text>
<text x="1741" y="984.2" font-size="12.3" fill="#e04a62" text-anchor="end" font-weight="normal">-1.7 V</text>
<text x="125.5" y="798.8" font-size="12.5" fill="#c4c4c4" text-anchor="middle" font-weight="normal">24.92 µs</text>
<text x="299.7" y="798.8" font-size="12.5" fill="#c4c4c4" text-anchor="middle" font-weight="normal">24.94 µs</text>
<text x="473.9" y="798.8" font-size="12.5" fill="#c4c4c4" text-anchor="middle" font-weight="normal">24.96 µs</text>
<text x="648.1" y="798.8" font-size="12.5" fill="#c4c4c4" text-anchor="middle" font-weight="normal">24.98 µs</text>
<text x="822.3" y="798.8" font-size="12.5" fill="#c4c4c4" text-anchor="middle" font-weight="normal">25 µs</text>
<text x="996.6" y="798.8" font-size="12.5" fill="#c4c4c4" text-anchor="middle" font-weight="normal">25.02 µs</text>
<text x="1170.8" y="798.8" font-size="12.5" fill="#c4c4c4" text-anchor="middle" font-weight="normal">25.04 µs</text>
<text x="1345.0" y="798.8" font-size="12.5" fill="#c4c4c4" text-anchor="middle" font-weight="normal">25.06 µs</text>
<text x="1519.2" y="798.8" font-size="12.5" fill="#c4c4c4" text-anchor="middle" font-weight="normal">25.08 µs</text>
<text x="1693.4" y="798.8" font-size="12.5" fill="#c4c4c4" text-anchor="middle" font-weight="normal">25.10 µs</text>
<line x1="503.5" y1="618" x2="503.5" y2="804" stroke="#f4a010" stroke-width="1.2" stroke-dasharray="6 3"/>
<line x1="1090.5" y1="618" x2="1090.5" y2="804" stroke="#f4a010" stroke-width="1.2" stroke-dasharray="6 3"/>
<polyline points="3.0,358.2 4.5,358.2 6.0,358.2 7.5,358.2 9.0,358.2 10.5,358.2 12.0,358.2 13.5,358.2 15.0,358.2 16.5,358.2 18.0,358.1 19.5,358.1 21.0,358.1 22.5,358.1 24.0,358.1 25.5,358.1 27.0,358.1 28.5,358.1 30.0,358.1 31.5,358.1 33.0,358.1 34.5,358.1 36.0,358.1 37.5,358.1 39.0,358.1 40.5,358.1 42.0,358.1 43.5,358.1 45.0,358.0 46.5,358.0 48.0,358.0 49.5,358.0 51.0,358.0 52.5,358.0 54.0,358.0 55.5,358.0 57.0,358.0 58.5,358.0 60.0,358.0 61.5,358.0 63.0,358.0 64.5,358.0 66.0,358.0 67.5,358.0 69.0,358.0 70.5,358.0 72.0,358.0 73.5,358.0 75.0,358.0 76.5,358.0 78.0,357.9 79.5,357.9 81.0,357.9 82.5,357.9 84.0,357.9 85.5,357.9 87.0,357.9 88.5,357.9 90.0,357.9 91.5,357.9 93.0,357.9 94.5,357.9 96.0,357.9 97.5,357.9 99.0,357.9 100.5,357.9 102.0,357.9 103.5,357.9 105.0,357.9 106.5,357.9 108.0,357.9 109.5,357.9 111.0,357.9 112.5,357.9 114.0,357.8 115.5,357.8 117.0,357.8 118.5,357.8 120.0,357.8 121.5,357.8 123.0,357.8 124.5,357.8 126.0,357.8 127.5,357.8 129.0,357.8 130.5,357.8 132.0,357.8 133.5,357.8 135.0,357.8 136.5,357.8 138.0,357.8 139.5,357.8 141.0,357.8 142.5,357.8 144.0,357.8 145.5,357.8 147.0,357.8 148.5,357.8 150.0,357.8 151.5,357.8 153.0,357.8 154.5,357.8 156.0,357.8 157.5,357.8 159.0,357.8 160.5,357.8 162.0,357.8 163.5,357.8 165.0,357.8 166.5,357.8 168.0,357.8 169.5,357.8 171.0,357.8 172.5,357.8 174.0,357.8 175.5,357.8 177.0,357.8 178.5,357.8 180.0,357.8 181.5,357.8 183.0,357.8 184.5,357.8 186.0,357.8 187.5,357.8 189.0,357.8 190.5,357.8 192.0,357.8 193.5,357.8 195.0,357.8 196.5,357.8 198.0,357.8 199.5,357.9 201.0,357.9 202.5,357.9 204.0,357.9 205.5,357.9 207.0,357.9 208.5,357.9 210.0,357.9 211.5,357.9 213.0,357.9 214.5,357.9 216.0,357.9 217.5,357.9 219.0,357.9 220.5,357.9 222.0,357.9 223.5,357.9 225.0,357.9 226.5,357.9 228.0,357.9 229.5,357.9 231.0,357.9 232.5,357.9 234.0,357.9 235.5,357.9 237.0,357.9 238.5,357.9 240.0,357.9 241.5,357.9 243.0,357.9 244.5,357.9 246.0,357.9 247.5,357.9 249.0,357.9 250.5,357.9 252.0,358.0 253.5,358.0 255.0,358.0 256.5,358.0 258.0,358.0 259.5,358.0 261.0,358.0 262.5,358.0 264.0,358.0 265.5,358.0 267.0,358.0 268.5,358.0 270.0,358.0 271.5,358.0 273.0,358.0 274.5,358.0 276.0,358.0 277.5,358.0 279.0,358.0 280.5,358.0 282.0,358.0 283.5,358.0 285.0,358.0 286.5,358.0 288.0,358.0 289.5,358.0 291.0,358.0 292.5,358.0 294.0,358.0 295.5,358.0 297.0,358.0 298.5,358.0 300.0,358.0 301.5,358.0 303.0,358.0 304.5,358.0 306.0,358.0 307.5,358.0 309.0,358.0 310.5,358.0 312.0,358.0 313.5,358.0 315.0,358.0 316.5,358.0 318.1,358.0 319.6,358.0 321.1,358.0 322.6,358.0 324.1,358.0 325.6,358.0 327.1,358.0 328.6,358.0 330.1,358.0 331.6,358.0 333.1,358.0 334.6,358.0 336.1,358.0 337.6,358.0 339.1,358.0 340.6,358.0 342.1,358.0 343.6,358.0 345.1,358.0 346.6,358.0 348.1,358.0 349.6,358.0 351.2,358.0 352.7,358.0 354.2,358.0 355.7,358.0 357.2,358.0 358.7,358.0 360.2,358.0 361.7,358.0 363.2,358.0 364.7,358.0 366.2,358.0 367.7,358.0 369.2,358.0 370.7,358.0 372.2,358.0 373.7,358.0 375.2,358.0 376.7,358.0 378.2,358.0 379.7,358.0 381.2,358.0 382.7,358.0 384.2,358.0 385.8,358.0 387.3,358.0 388.8,358.0 390.3,358.0 391.8,358.0 393.3,358.0 394.8,358.0 396.3,358.0 397.8,358.0 399.3,358.0 400.8,358.0 402.3,358.0 403.8,358.0 405.3,358.0 406.8,358.0 408.3,358.0 409.8,358.0 411.3,358.0 412.8,358.0 414.3,358.0 415.8,358.0 417.3,358.0 418.8,358.0 420.4,358.0 421.9,358.0 423.4,358.0 424.9,358.0 426.4,358.0 427.9,358.0 429.4,358.0 430.9,358.0 432.4,358.0 433.9,358.0 435.4,358.0 436.9,358.0 438.4,358.0 439.9,358.0 441.4,358.0 442.9,358.0 444.4,358.0 445.9,358.0 447.4,358.0 448.9,358.0 450.4,358.0 451.9,358.0 453.5,358.0 455.0,358.0 456.5,358.0 458.0,358.0 459.5,358.0 461.0,358.0 462.5,358.0 464.0,358.0 465.5,358.0 467.0,358.0 468.5,358.0 470.0,358.0 471.5,358.0 473.0,358.1 474.5,358.2 476.0,358.3 477.5,358.4 479.0,358.6 480.5,358.7 482.0,359.0 483.5,359.2 485.0,359.4 486.5,359.7 488.0,359.9 489.5,360.2 491.0,360.4 492.5,360.7 494.0,361.0 495.5,361.2 497.0,361.5 498.5,361.8 500.0,362.0 501.5,362.2 503.1,362.5 504.6,362.8 506.2,363.0 507.7,363.3 509.2,363.6 510.8,363.9 512.3,364.2 513.8,364.5 515.4,364.8 516.9,365.2 518.5,365.5 520.0,365.8 521.5,366.1 523.1,366.5 524.6,366.8 526.2,367.1 527.7,367.4 529.2,367.8 530.8,368.1 532.3,368.4 533.8,368.7 535.4,369.1 536.9,369.4 538.5,369.7 540.0,370.0 541.5,370.3 543.1,370.6 544.6,371.0 546.2,371.3 547.7,371.6 549.3,371.9 550.8,372.3 552.3,372.6 553.9,373.0 555.4,373.3 557.0,373.6 558.5,373.9 560.1,374.3 561.6,374.6 563.2,374.9 564.7,375.2 566.2,375.5 567.8,375.8 569.3,376.0 570.9,376.3 572.4,376.6 574.0,376.8 575.5,377.0 577.0,377.2 578.5,377.4 580.0,377.5 581.5,377.7 583.0,377.8 584.5,378.0 586.0,378.1 587.5,378.3 589.0,378.4 590.5,378.5 592.0,378.7 593.5,378.9 595.0,379.0 596.5,379.2 598.0,379.4 599.5,379.6 601.0,379.8 602.6,380.1 604.1,380.4 605.6,380.6 607.1,380.9 608.7,381.2 610.2,381.5 611.7,381.8 613.2,382.1 614.8,382.5 616.3,382.8 617.8,383.1 619.4,383.5 620.9,383.8 622.4,384.1 623.9,384.5 625.5,384.8 627.0,385.2 628.5,385.5 630.0,385.8 631.5,386.2 633.0,386.5 634.6,386.9 636.1,387.2 637.6,387.6 639.1,387.9 640.6,388.3 642.1,388.7 643.6,389.0 645.2,389.4 646.7,389.8 648.2,390.2 649.7,390.6 651.2,391.0 652.8,391.5 654.3,391.9 655.8,392.4 657.3,392.9 658.9,393.4 660.4,393.8 661.9,394.3 663.4,394.8 665.0,395.2 666.5,395.6 668.0,396.0 669.5,396.4 671.0,396.7 672.5,397.0 674.0,397.4 675.5,397.7 677.0,398.1 678.5,398.4 680.0,398.7 681.5,399.0 683.0,399.3 684.5,399.6 686.0,399.9 687.5,400.1 689.0,400.4 690.5,400.6 692.0,400.8 693.5,401.0 695.0,401.2 696.5,401.4 698.0,401.5 699.6,401.7 701.1,401.9 702.6,402.0 704.1,402.2 705.6,402.3 707.2,402.4 708.7,402.6 710.2,402.7 711.7,402.8 713.2,402.9 714.8,403.0 716.3,403.2 717.8,403.3 719.3,403.4 720.9,403.5 722.4,403.6 723.9,403.7 725.4,403.8 726.9,403.9 728.5,404.0 730.0,404.1 731.5,404.2 733.0,404.3 734.5,404.4 736.0,404.5 737.6,404.6 739.1,404.7 740.6,404.8 742.1,405.0 743.6,405.1 745.1,405.2 746.7,405.3 748.2,405.4 749.7,405.5 751.2,405.6 752.7,405.7 754.2,405.8 755.8,405.9 757.3,406.0 758.8,406.1 760.3,406.2 761.8,406.3 763.4,406.4 764.9,406.4 766.4,406.5 767.9,406.5 769.4,406.6 770.9,406.6 772.5,406.7 774.0,406.7 775.5,406.7 777.0,406.7 778.5,406.7 780.0,406.7 781.5,406.7 783.0,406.7 784.5,406.7 786.0,406.7 787.5,406.7 789.0,406.7 790.5,406.7 792.0,406.6 793.5,406.6 795.0,406.6 796.5,406.6 798.0,406.6 799.5,406.6 801.0,406.6 802.5,406.6 804.0,406.6 805.5,406.6 807.0,406.6 808.5,406.5 810.0,406.5 811.5,406.5 813.0,406.5 814.5,406.5 816.0,406.5 817.5,406.5 819.0,406.5 820.5,406.5 822.0,406.5 823.5,406.5 825.1,406.6 826.6,406.7 828.2,406.8 829.7,406.9 831.3,407.1 832.8,407.2 834.3,407.4 835.9,407.6 837.4,407.7 839.0,407.8 840.5,407.9 842.1,408.0 843.6,408.0 845.1,408.0 846.6,407.9 848.2,407.9 849.7,407.7 851.2,407.6 852.8,407.5 854.3,407.3 855.8,407.1 857.3,406.9 858.9,406.7 860.4,406.4 861.9,406.2 863.4,405.9 865.0,405.7 866.5,405.4 868.0,405.2 869.5,404.9 871.0,404.6 872.5,404.3 874.0,404.0 875.5,403.6 877.0,403.2 878.5,402.8 880.0,402.4 881.5,401.9 883.0,401.4 884.5,401.0 886.0,400.5 887.5,400.0 889.0,399.5 890.5,399.0 892.0,398.6 893.5,398.1 895.0,397.6 896.5,397.1 898.0,396.6 899.6,396.2 901.1,395.7 902.6,395.2 904.1,394.7 905.7,394.2 907.2,393.7 908.7,393.1 910.2,392.6 911.8,392.0 913.3,391.5 914.8,390.9 916.4,390.3 917.9,389.7 919.4,389.1 921.0,388.4 922.6,387.7 924.2,386.9 925.7,386.1 927.3,385.2 928.9,384.4 930.5,383.5 932.1,382.7 933.7,381.8 935.2,381.0 936.8,380.3 938.4,379.5 940.0,378.9 941.6,378.4 943.1,377.9 944.7,377.5 946.2,377.0 947.8,376.6 949.3,376.0 950.9,375.3 952.4,374.3 953.9,372.9 955.4,371.2 957.0,369.3 958.5,367.3 960.0,365.3 961.5,363.3 963.0,361.4 964.7,359.5 966.3,357.7 968.0,356.0 969.6,354.2 971.3,352.3 973.0,350.3 974.6,348.1 976.3,345.6 978.0,342.4 979.7,338.6 981.4,334.4 983.1,330.2 984.8,326.3 986.6,322.6 988.5,319.2 990.3,315.6 992.1,311.7 993.9,307.1 995.7,302.0 997.5,296.9 999.3,292.4 1000.9,288.9 1002.5,285.5 1004.1,282.3 1005.8,279.3 1007.4,276.6 1009.0,274.2 1010.7,271.9 1012.4,269.6 1014.1,267.6 1015.8,265.9 1017.5,264.5 1019.1,263.3 1020.7,262.2 1022.2,261.2 1023.8,260.6 1025.4,260.3 1027.5,260.7 1029.6,261.5 1031.4,262.6 1033.2,264.2 1035.1,266.1 1036.9,268.2 1038.5,270.3 1040.1,272.7 1041.7,275.4 1043.3,278.2 1044.9,281.1 1046.5,283.9 1048.2,286.9 1049.9,290.0 1051.6,293.1 1053.3,296.3 1055.0,299.6 1056.5,302.7 1058.0,305.8 1059.5,309.1 1061.0,312.4 1062.6,315.7 1064.1,319.0 1065.6,322.1 1067.1,325.1 1068.7,328.1 1070.3,331.1 1071.9,334.0 1073.6,336.8 1075.2,339.5 1076.8,342.0 1078.4,344.4 1079.9,346.7 1081.5,349.0 1083.1,351.2 1084.7,353.4 1086.2,355.5 1087.8,357.5 1089.4,359.3 1090.9,361.0 1092.5,362.6 1094.2,364.2 1095.9,365.7 1097.6,367.1 1099.3,368.3 1101.0,369.2 1102.5,369.8 1104.0,370.4 1105.5,371.0 1107.0,371.5 1108.6,371.9 1110.1,372.2 1111.6,372.4 1113.1,372.5 1114.7,372.4 1116.3,372.2 1117.9,371.9 1119.5,371.5 1121.2,371.0 1122.8,370.6 1124.4,370.1 1126.0,369.6 1127.6,369.2 1129.1,368.8 1130.7,368.4 1132.2,368.0 1133.8,367.6 1135.3,367.2 1136.9,366.9 1138.5,366.5 1140.0,366.2 1141.5,365.9 1143.1,365.6 1144.6,365.3 1146.2,365.0 1147.7,364.7 1149.2,364.4 1150.8,364.2 1152.3,363.9 1153.8,363.7 1155.4,363.5 1156.9,363.4 1158.5,363.3 1160.0,363.3 1161.5,363.3 1163.0,363.3 1164.5,363.3 1166.0,363.3 1167.5,363.3 1169.0,363.3 1170.5,363.3 1172.1,363.3 1173.6,363.3 1175.1,363.3 1176.6,363.3 1178.1,363.3 1179.6,363.3 1181.1,363.3 1182.6,363.3 1184.1,363.3 1185.6,363.3 1187.1,363.3 1188.6,363.3 1190.1,363.3 1191.6,363.3 1193.2,363.3 1194.7,363.3 1196.2,363.4 1197.7,363.4 1199.2,363.4 1200.7,363.4 1202.2,363.4 1203.7,363.4 1205.2,363.4 1206.7,363.4 1208.2,363.4 1209.7,363.4 1211.2,363.4 1212.7,363.4 1214.2,363.4 1215.8,363.4 1217.3,363.4 1218.8,363.4 1220.3,363.4 1221.8,363.4 1223.3,363.4 1224.8,363.4 1226.3,363.5 1227.8,363.5 1229.3,363.5 1230.8,363.5 1232.3,363.5 1233.8,363.5 1235.3,363.5 1236.8,363.5 1238.4,363.5 1239.9,363.5 1241.4,363.5 1242.9,363.5 1244.4,363.5 1245.9,363.5 1247.4,363.5 1248.9,363.6 1250.4,363.6 1251.9,363.6 1253.4,363.6 1254.9,363.6 1256.4,363.6 1257.9,363.6 1259.5,363.6 1261.0,363.6 1262.5,363.6 1264.0,363.6 1265.5,363.6 1267.0,363.6 1268.5,363.6 1270.0,363.6 1271.5,363.7 1273.0,363.7 1274.5,363.7 1276.0,363.7 1277.5,363.7 1279.0,363.7 1280.5,363.7 1282.1,363.7 1283.6,363.7 1285.1,363.7 1286.6,363.7 1288.1,363.7 1289.6,363.7 1291.1,363.7 1292.6,363.8 1294.1,363.8 1295.6,363.8 1297.1,363.8 1298.6,363.8 1300.1,363.8 1301.6,363.8 1303.2,363.8 1304.7,363.8 1306.2,363.8 1307.7,363.8 1309.2,363.8 1310.7,363.8 1312.2,363.8 1313.7,363.8 1315.2,363.9 1316.7,363.9 1318.2,363.9 1319.7,363.9 1321.2,363.9 1322.7,363.9 1324.2,363.9 1325.8,363.9 1327.3,363.9 1328.8,363.9 1330.3,363.9 1331.8,363.9 1333.3,363.9 1334.8,363.9 1336.3,363.9 1337.8,363.9 1339.3,363.9 1340.8,363.9 1342.3,363.9 1343.8,363.9 1345.3,364.0 1346.8,364.0 1348.4,364.0 1349.9,364.0 1351.4,364.0 1352.9,364.0 1354.4,364.0 1355.9,364.0 1357.4,364.0 1358.9,364.0 1360.4,364.0 1361.9,364.0 1363.4,364.0 1364.9,364.0 1366.4,364.0 1367.9,364.0 1369.5,364.0 1371.0,364.0 1372.5,364.0 1374.0,364.0 1375.5,364.0 1377.0,364.0 1378.5,364.0 1380.0,364.0 1381.5,364.0 1383.0,364.0 1384.5,364.0 1386.0,364.0 1387.6,364.0 1389.1,364.0 1390.6,364.0 1392.1,364.0 1393.6,364.0 1395.1,364.0 1396.6,364.0 1398.1,364.0 1399.7,364.0 1401.2,364.0 1402.7,364.0 1404.2,364.0 1405.7,364.0 1407.2,364.0 1408.7,364.0 1410.2,364.0 1411.7,364.0 1413.3,364.0 1414.8,364.0 1416.3,364.0 1417.8,364.0 1419.3,364.0 1420.8,364.0 1422.3,364.0 1423.8,364.0 1425.3,364.0 1426.9,364.0 1428.4,364.0 1429.9,364.0 1431.4,364.0 1432.9,364.0 1434.4,364.0 1435.9,364.0 1437.4,364.0 1439.0,364.0 1440.5,364.0 1442.0,364.0 1443.5,364.0 1445.0,364.0 1446.5,364.0 1448.0,364.0 1449.5,363.9 1451.0,363.9 1452.5,363.8 1454.0,363.7 1455.5,363.7 1457.0,363.6 1458.5,363.5 1460.0,363.4 1461.5,363.2 1463.0,363.1 1464.5,363.0 1466.0,362.9 1467.5,362.8 1469.0,362.6 1470.5,362.5 1472.0,362.4 1473.5,362.3 1475.0,362.1 1476.5,362.0 1478.0,361.9 1479.5,361.8 1481.0,361.8 1482.5,361.7 1484.0,361.6 1485.5,361.6 1487.0,361.5 1488.5,361.5 1490.0,361.5 1491.5,361.5 1493.0,361.5 1494.6,361.5 1496.1,361.5 1497.6,361.5 1499.1,361.5 1500.7,361.5 1502.2,361.5 1503.7,361.5 1505.2,361.5 1506.7,361.5 1508.3,361.5 1509.8,361.5 1511.3,361.5 1512.8,361.5 1514.3,361.5 1515.9,361.5 1517.4,361.5 1518.9,361.5 1520.4,361.5 1522.0,361.5 1523.5,361.5 1525.0,361.5 1526.5,361.5 1528.0,361.5 1529.6,361.5 1531.1,361.5 1532.6,361.5 1534.1,361.5 1535.7,361.5 1537.2,361.5 1538.7,361.5 1540.2,361.5 1541.7,361.5 1543.3,361.5 1544.8,361.5 1546.3,361.5 1547.8,361.5 1549.3,361.5 1550.9,361.5 1552.4,361.5 1553.9,361.5 1555.4,361.5 1557.0,361.5 1558.5,361.5 1560.0,361.5 1561.5,361.5 1563.1,361.5 1564.6,361.6 1566.2,361.6 1567.7,361.7 1569.2,361.8 1570.8,361.9 1572.3,362.0 1573.8,362.1 1575.4,362.2 1576.9,362.3 1578.5,362.4 1580.0,362.5 1581.5,362.6 1583.1,362.7 1584.6,362.8 1586.2,362.9 1587.7,363.0 1589.2,363.1 1590.8,363.2 1592.3,363.3 1593.8,363.4 1595.4,363.4 1596.9,363.5 1598.5,363.5 1600.0,363.5 1601.5,363.5 1603.0,363.5 1604.5,363.5 1606.0,363.5 1607.6,363.5 1609.1,363.5 1610.6,363.5 1612.1,363.5 1613.6,363.5 1615.1,363.5 1616.6,363.5 1618.1,363.5 1619.6,363.5 1621.1,363.5 1622.7,363.5 1624.2,363.5 1625.7,363.5 1627.2,363.5 1628.7,363.5 1630.2,363.5 1631.7,363.5 1633.2,363.5 1634.7,363.5 1636.2,363.5 1637.8,363.5 1639.3,363.5 1640.8,363.5 1642.3,363.5 1643.8,363.5 1645.3,363.5 1646.8,363.5 1648.3,363.5 1649.8,363.5 1651.4,363.5 1652.9,363.5 1654.4,363.5 1655.9,363.5 1657.4,363.5 1658.9,363.5 1660.4,363.5 1661.9,363.5 1663.4,363.5 1664.9,363.5 1666.5,363.5 1668.0,363.5 1669.5,363.5 1671.0,363.5 1672.5,363.5 1674.0,363.5 1675.5,363.5 1677.0,363.5 1678.5,363.5 1680.1,363.5 1681.6,363.5 1683.1,363.5 1684.6,363.5 1686.1,363.5 1687.6,363.5 1689.1,363.5 1690.6,363.5 1692.1,363.5 1693.6,363.5 1695.2,363.5 1696.7,363.5 1698.2,363.5 1699.7,363.5 1701.2,363.5 1702.7,363.5 1704.2,363.5 1705.7,363.5 1707.2,363.5 1708.8,363.5 1710.3,363.5 1711.8,363.5 1713.3,363.5 1714.8,363.5 1716.3,363.5 1717.8,363.5 1719.3,363.5 1720.8,363.5 1722.3,363.5 1723.9,363.5 1725.4,363.5 1726.9,363.5 1728.4,363.5 1729.9,363.5 1731.4,363.5 1732.9,363.5 1734.4,363.5 1735.9,363.5 1737.4,363.5 1739.0,363.5 1740.5,363.5 1742.0,363.5 1743.5,363.5 1745.0,363.5" fill="none" stroke="#e8892a" stroke-width="1.3" stroke-linejoin="round" shape-rendering="crispEdges"/>
<polyline points="3.0,464.4 4.5,464.4 6.0,464.4 7.5,464.4 9.1,464.4 10.6,464.4 12.1,464.4 13.6,464.3 15.1,464.3 16.6,464.3 18.1,464.3 19.6,464.3 21.2,464.3 22.7,464.3 24.2,464.3 25.7,464.3 27.2,464.3 28.7,464.2 30.2,464.2 31.7,464.2 33.3,464.2 34.8,464.2 36.3,464.2 37.8,464.2 39.3,464.2 40.8,464.2 42.3,464.2 43.8,464.1 45.4,464.1 46.9,464.1 48.4,464.1 49.9,464.1 51.4,464.1 52.9,464.1 54.4,464.1 55.9,464.1 57.5,464.1 59.0,464.0 60.5,464.0 62.0,464.0 63.5,464.0 65.0,464.0 66.5,464.0 68.1,464.0 69.6,464.0 71.1,464.0 72.6,464.0 74.1,464.0 75.6,463.9 77.1,463.9 78.6,463.9 80.2,463.9 81.7,463.9 83.2,463.9 84.7,463.9 86.2,463.9 87.7,463.9 89.2,463.9 90.7,463.9 92.3,463.9 93.8,463.9 95.3,463.9 96.8,463.8 98.3,463.8 99.8,463.8 101.3,463.8 102.8,463.8 104.4,463.8 105.9,463.8 107.4,463.8 108.9,463.8 110.4,463.8 111.9,463.8 113.4,463.8 114.9,463.8 116.5,463.8 118.0,463.8 119.5,463.8 121.0,463.8 122.5,463.8 124.0,463.8 125.5,463.8 127.0,463.8 128.5,463.8 130.0,463.8 131.5,463.8 133.0,463.8 134.5,463.8 136.0,463.8 137.5,463.8 139.0,463.8 140.6,463.8 142.1,463.8 143.6,463.8 145.1,463.8 146.6,463.8 148.1,463.8 149.6,463.8 151.1,463.8 152.6,463.8 154.1,463.8 155.6,463.8 157.1,463.8 158.6,463.9 160.1,463.9 161.6,463.9 163.1,463.9 164.6,463.9 166.1,463.9 167.6,463.9 169.1,463.9 170.6,463.9 172.1,463.9 173.6,463.9 175.1,463.9 176.7,463.9 178.2,463.9 179.7,463.9 181.2,463.9 182.7,463.9 184.2,463.9 185.7,463.9 187.2,463.9 188.7,463.9 190.2,464.0 191.7,464.0 193.2,464.0 194.7,464.0 196.2,464.0 197.7,464.0 199.2,464.0 200.7,464.0 202.2,464.0 203.7,464.0 205.2,464.0 206.7,464.0 208.2,464.0 209.7,464.0 211.2,464.0 212.8,464.0 214.3,464.1 215.8,464.1 217.3,464.1 218.8,464.1 220.3,464.1 221.8,464.1 223.3,464.1 224.8,464.1 226.3,464.1 227.8,464.1 229.3,464.1 230.8,464.1 232.3,464.1 233.8,464.1 235.3,464.1 236.8,464.2 238.3,464.2 239.8,464.2 241.3,464.2 242.8,464.2 244.3,464.2 245.8,464.2 247.3,464.2 248.9,464.2 250.4,464.2 251.9,464.2 253.4,464.2 254.9,464.2 256.4,464.2 257.9,464.2 259.4,464.3 260.9,464.3 262.4,464.3 263.9,464.3 265.4,464.3 266.9,464.3 268.4,464.3 269.9,464.3 271.4,464.3 272.9,464.3 274.4,464.3 275.9,464.3 277.4,464.3 278.9,464.3 280.4,464.3 281.9,464.3 283.4,464.3 285.0,464.3 286.5,464.4 288.0,464.4 289.5,464.4 291.0,464.4 292.5,464.4 294.0,464.4 295.5,464.4 297.0,464.4 298.5,464.4 300.0,464.4 301.5,464.4 303.0,464.4 304.5,464.4 306.0,464.4 307.5,464.4 309.0,464.4 310.5,464.4 312.0,464.4 313.5,464.4 315.0,464.4 316.5,464.4 318.0,464.4 319.5,464.4 321.0,464.4 322.5,464.4 324.0,464.4 325.5,464.4 327.0,464.4 328.5,464.4 330.0,464.5 331.5,464.5 333.0,464.5 334.5,464.5 336.0,464.5 337.5,464.5 339.0,464.5 340.5,464.5 342.0,464.5 343.5,464.5 345.0,464.5 346.5,464.5 348.0,464.5 349.5,464.5 351.0,464.5 352.5,464.5 354.0,464.5 355.5,464.5 357.0,464.5 358.5,464.5 360.0,464.5 361.5,464.5 363.0,464.5 364.5,464.5 366.0,464.5 367.5,464.5 369.0,464.5 370.5,464.5 372.0,464.5 373.5,464.5 375.0,464.5 376.5,464.5 378.0,464.5 379.5,464.5 381.0,464.5 382.5,464.5 384.0,464.5 385.5,464.5 387.0,464.5 388.5,464.5 390.0,464.5 391.5,464.5 393.0,464.5 394.5,464.5 396.0,464.5 397.5,464.5 399.0,464.5 400.5,464.5 402.0,464.5 403.5,464.5 405.0,464.5 406.5,464.5 408.0,464.5 409.5,464.5 411.0,464.6 412.5,464.6 414.0,464.6 415.5,464.6 417.0,464.6 418.5,464.6 420.0,464.6 421.5,464.6 423.0,464.6 424.5,464.6 426.0,464.6 427.5,464.6 429.0,464.6 430.5,464.6 432.0,464.6 433.5,464.6 435.0,464.6 436.5,464.6 438.0,464.6 439.5,464.6 441.0,464.6 442.5,464.6 444.0,464.7 445.5,464.7 447.0,464.7 448.5,464.7 450.0,464.7 451.5,464.7 453.0,464.7 454.5,464.7 456.0,464.7 457.5,464.7 459.1,464.8 460.6,464.9 462.1,464.9 463.6,465.0 465.1,465.1 466.7,465.2 468.2,465.3 469.7,465.4 471.2,465.5 472.8,465.7 474.3,465.8 475.8,465.9 477.3,466.0 478.8,466.2 480.3,466.3 481.8,466.5 483.3,466.7 484.8,466.9 486.4,467.1 487.9,467.3 489.4,467.5 490.9,467.7 492.4,468.0 493.9,468.2 495.4,468.5 496.9,468.7 498.4,468.9 499.9,469.2 501.4,469.4 502.9,469.7 504.4,469.9 506.0,470.1 507.5,470.3 509.0,470.6 510.5,470.8 512.0,471.0 513.5,471.1 515.0,471.3 516.5,471.5 518.0,471.6 519.6,471.8 521.1,471.9 522.6,472.1 524.1,472.2 525.7,472.4 527.2,472.5 528.7,472.7 530.2,472.8 531.8,472.9 533.3,473.1 534.8,473.2 536.4,473.3 537.9,473.4 539.4,473.5 540.9,473.7 542.5,473.8 544.0,473.9 545.5,474.0 547.0,474.1 548.5,474.2 550.0,474.3 551.5,474.4 553.0,474.5 554.5,474.7 556.0,474.8 557.5,474.9 559.0,475.0 560.5,475.1 562.0,475.2 563.5,475.3 565.0,475.4 566.5,475.5 568.0,475.6 569.5,475.6 571.0,475.7 572.5,475.8 574.0,475.8 575.5,475.9 577.0,475.9 578.5,476.0 580.0,476.0 581.5,476.0 583.0,476.0 584.5,476.1 586.1,476.1 587.6,476.1 589.1,476.1 590.6,476.2 592.1,476.2 593.6,476.2 595.2,476.2 596.7,476.2 598.2,476.3 599.7,476.3 601.2,476.3 602.7,476.3 604.3,476.3 605.8,476.3 607.3,476.4 608.8,476.4 610.3,476.4 611.8,476.4 613.3,476.4 614.9,476.4 616.4,476.4 617.9,476.4 619.4,476.4 620.9,476.5 622.4,476.5 624.0,476.5 625.5,476.5 627.0,476.5 628.5,476.5 630.0,476.5 631.5,476.5 633.1,476.5 634.6,476.5 636.1,476.5 637.6,476.5 639.1,476.5 640.6,476.5 642.1,476.4 643.7,476.4 645.2,476.3 646.7,476.2 648.2,476.2 649.7,476.1 651.2,476.0 652.8,475.9 654.3,475.8 655.8,475.7 657.3,475.6 658.8,475.6 660.3,475.5 661.8,475.4 663.4,475.4 664.9,475.3 666.4,475.3 667.9,475.3 669.4,475.3 670.9,475.3 672.4,475.3 674.0,475.3 675.5,475.3 677.0,475.4 678.5,475.4 680.0,475.4 681.5,475.4 683.0,475.4 684.5,475.5 686.0,475.5 687.6,475.5 689.1,475.5 690.6,475.6 692.1,475.6 693.6,475.6 695.1,475.7 696.6,475.7 698.2,475.8 699.7,475.8 701.2,475.9 702.7,475.9 704.2,476.0 705.7,476.0 707.3,476.1 708.8,476.2 710.3,476.2 711.8,476.3 713.3,476.4 714.8,476.5 716.3,476.5 717.9,476.6 719.4,476.7 720.9,476.8 722.4,476.9 723.9,477.0 725.4,477.1 727.0,477.1 728.5,477.2 730.0,477.3 731.5,477.4 733.0,477.5 734.5,477.6 736.0,477.7 737.6,477.8 739.1,477.9 740.6,478.0 742.1,478.1 743.6,478.3 745.1,478.4 746.7,478.5 748.2,478.6 749.7,478.8 751.2,478.9 752.7,479.0 754.2,479.1 755.8,479.3 757.3,479.4 758.8,479.5 760.3,479.6 761.8,479.7 763.4,479.8 764.9,479.9 766.4,480.0 767.9,480.1 769.4,480.2 770.9,480.3 772.4,480.3 774.0,480.4 775.5,480.5 777.0,480.6 778.5,480.6 780.0,480.7 781.5,480.8 783.0,480.8 784.6,480.9 786.1,481.0 787.6,481.0 789.1,481.1 790.6,481.1 792.1,481.2 793.6,481.3 795.2,481.3 796.7,481.4 798.2,481.4 799.7,481.5 801.2,481.6 802.7,481.6 804.2,481.7 805.8,481.7 807.3,481.8 808.8,481.8 810.3,481.9 811.8,482.0 813.3,482.0 814.8,482.1 816.4,482.1 817.9,482.2 819.4,482.2 820.9,482.3 822.4,482.3 824.0,482.4 825.5,482.4 827.0,482.4 828.5,482.5 830.0,482.5 831.5,482.6 833.0,482.6 834.6,482.7 836.1,482.7 837.6,482.8 839.1,482.9 840.6,482.9 842.2,483.0 843.7,483.1 845.2,483.1 846.7,483.2 848.2,483.3 849.7,483.4 851.2,483.5 852.8,483.6 854.3,483.7 855.8,483.8 857.3,483.9 858.8,484.0 860.3,484.1 861.8,484.3 863.3,484.4 864.9,484.6 866.4,484.7 867.9,484.9 869.4,485.0 870.9,485.2 872.4,485.3 873.9,485.5 875.4,485.6 877.0,485.8 878.5,486.0 880.0,486.2 881.5,486.3 883.0,486.5 884.5,486.7 886.0,486.9 887.5,487.1 889.1,487.3 890.6,487.5 892.1,487.7 893.6,487.9 895.1,488.1 896.6,488.3 898.2,488.6 899.7,488.8 901.2,489.1 902.7,489.3 904.2,489.6 905.8,489.8 907.3,490.1 908.8,490.3 910.3,490.6 911.8,490.9 913.3,491.1 914.9,491.4 916.4,491.7 917.9,491.9 919.4,492.2 921.0,492.5 922.6,492.8 924.2,493.1 925.7,493.4 927.3,493.7 928.9,494.0 930.5,494.3 932.1,494.7 933.7,495.0 935.2,495.3 936.8,495.7 938.4,496.0 940.0,496.3 941.6,496.6 943.2,496.9 944.8,497.2 946.5,497.5 948.1,497.8 949.7,498.2 951.3,498.6 952.9,499.1 954.5,499.8 956.1,500.5 957.8,501.3 959.4,502.2 961.0,503.0 962.6,503.8 964.2,504.5 965.7,505.2 967.3,505.9 968.9,506.7 970.4,507.4 972.0,508.2 973.5,509.1 975.1,510.1 976.6,511.2 978.1,512.4 979.6,513.7 981.1,515.1 982.7,516.6 984.2,518.2 985.7,519.8 987.2,521.5 988.7,523.3 990.2,525.1 991.8,527.1 993.3,529.3 994.9,531.6 996.4,533.9 998.0,536.2 999.5,538.5 1001.1,540.9 1002.7,543.2 1004.3,545.6 1005.9,548.0 1007.4,550.3 1009.0,552.7 1010.6,555.1 1012.1,557.5 1013.7,559.9 1015.2,562.3 1016.8,564.7 1018.4,567.0 1019.9,569.3 1021.5,571.5 1023.2,573.8 1024.8,576.2 1026.5,578.5 1028.2,580.6 1029.8,582.5 1031.5,584.1 1033.0,585.3 1034.5,586.5 1036.0,587.7 1037.5,588.8 1039.0,589.9 1040.6,590.8 1042.1,591.6 1043.6,592.2 1045.1,592.7 1046.6,592.9 1048.2,593.0 1049.8,593.2 1051.4,593.3 1053.1,593.4 1054.7,593.4 1056.3,593.5 1057.9,593.5 1059.4,593.4 1061.0,593.1 1062.5,592.7 1064.0,592.1 1065.6,591.4 1067.1,590.7 1068.6,589.9 1070.2,589.2 1071.7,588.5 1073.3,587.8 1074.8,587.0 1076.4,586.2 1078.0,585.4 1079.5,584.6 1081.1,583.7 1082.7,582.7 1084.2,581.8 1085.8,580.8 1087.4,579.8 1088.9,578.8 1090.5,577.8 1092.1,576.8 1093.6,575.7 1095.2,574.6 1096.8,573.4 1098.3,572.2 1099.9,571.0 1101.4,569.7 1103.0,568.4 1104.5,567.1 1106.0,565.7 1107.5,564.2 1109.0,562.7 1110.5,561.1 1112.1,559.5 1113.6,557.9 1115.1,556.2 1116.6,554.5 1118.1,552.7 1119.7,550.7 1121.4,548.5 1123.0,546.2 1124.6,543.9 1126.2,541.5 1127.9,539.1 1129.5,536.7 1131.1,534.4 1132.8,532.2 1134.4,530.2 1135.9,528.4 1137.5,526.6 1139.0,524.9 1140.5,523.3 1142.1,521.7 1143.6,520.1 1145.1,518.6 1146.7,517.1 1148.2,515.7 1149.7,514.3 1151.2,512.8 1152.7,511.5 1154.2,510.3 1155.7,509.5 1157.2,508.9 1158.7,508.4 1160.2,508.0 1161.7,507.6 1163.2,507.3 1164.7,507.0 1166.2,506.7 1167.7,506.4 1169.2,506.1 1170.7,505.7 1172.2,505.3 1173.8,504.8 1175.3,504.3 1176.9,503.8 1178.5,503.5 1180.0,503.2 1181.5,503.0 1183.1,502.9 1184.6,502.7 1186.2,502.5 1187.7,502.4 1189.3,502.3 1190.8,502.1 1192.4,502.0 1193.9,501.9 1195.4,501.8 1197.0,501.7 1198.5,501.6 1200.1,501.5 1201.6,501.4 1203.2,501.4 1204.7,501.3 1206.3,501.2 1207.8,501.1 1209.3,501.1 1210.9,501.0 1212.4,500.9 1214.0,500.9 1215.5,500.8 1217.1,500.7 1218.6,500.6 1220.2,500.6 1221.7,500.5 1223.2,500.4 1224.8,500.3 1226.3,500.3 1227.8,500.2 1229.4,500.1 1230.9,500.0 1232.5,499.9 1234.0,499.8 1235.5,499.8 1237.1,499.7 1238.6,499.7 1240.1,499.6 1241.7,499.6 1243.2,499.6 1244.7,499.6 1246.3,499.7 1247.8,499.8 1249.4,499.9 1250.9,500.1 1252.4,500.3 1254.0,500.5 1255.5,500.7 1257.1,501.0 1258.6,501.2 1260.2,501.5 1261.7,501.7 1263.2,502.0 1264.8,502.2 1266.3,502.5 1267.9,502.7 1269.4,502.9 1270.9,503.1 1272.5,503.3 1274.0,503.4 1275.6,503.5 1277.1,503.6 1278.6,503.6 1280.2,503.7 1281.8,503.7 1283.3,503.8 1284.8,503.8 1286.4,503.8 1287.9,503.9 1289.5,503.9 1291.0,503.9 1292.6,503.9 1294.1,503.9 1295.7,503.8 1297.2,503.8 1298.8,503.7 1300.3,503.6 1301.8,503.4 1303.4,503.3 1304.9,503.1 1306.5,502.9 1308.0,502.7 1309.5,502.4 1311.1,502.2 1312.6,502.0 1314.2,501.7 1315.7,501.4 1317.2,501.2 1318.8,500.9 1320.3,500.6 1321.9,500.3 1323.4,500.0 1324.9,499.7 1326.5,499.4 1328.0,499.2 1329.6,498.9 1331.1,498.6 1332.6,498.3 1334.2,498.1 1335.7,497.8 1337.3,497.6 1338.8,497.4 1340.3,497.2 1341.9,497.0 1343.4,496.7 1345.0,496.5 1346.5,496.2 1348.1,496.0 1349.6,495.7 1351.1,495.4 1352.7,495.2 1354.2,494.9 1355.8,494.6 1357.3,494.4 1358.8,494.1 1360.4,493.9 1361.9,493.6 1363.5,493.4 1365.0,493.2 1366.6,493.0 1368.1,492.8 1369.6,492.7 1371.2,492.5 1372.7,492.4 1374.3,492.3 1375.8,492.3 1377.4,492.2 1378.9,492.2 1380.4,492.2 1382.0,492.2 1383.5,492.2 1385.1,492.3 1386.6,492.3 1388.1,492.4 1389.7,492.4 1391.2,492.5 1392.8,492.6 1394.3,492.6 1395.8,492.7 1397.4,492.8 1398.9,492.9 1400.4,493.0 1402.0,493.1 1403.5,493.2 1405.1,493.3 1406.6,493.4 1408.1,493.5 1409.7,493.7 1411.2,493.9 1412.8,494.1 1414.3,494.3 1415.8,494.5 1417.4,494.8 1418.9,495.1 1420.5,495.4 1422.0,495.7 1423.5,496.0 1425.1,496.3 1426.6,496.7 1428.2,497.0 1429.7,497.3 1431.2,497.7 1432.8,498.0 1434.3,498.3 1435.9,498.6 1437.4,498.9 1438.9,499.2 1440.5,499.5 1442.0,499.8 1443.6,500.1 1445.1,500.3 1446.7,500.6 1448.2,500.9 1449.8,501.2 1451.3,501.5 1452.8,501.8 1454.4,502.1 1455.9,502.4 1457.5,502.7 1459.0,503.0 1460.6,503.4 1462.1,503.7 1463.7,504.0 1465.2,504.4 1466.8,504.7 1468.3,505.1 1469.8,505.5 1471.4,505.9 1472.9,506.4 1474.5,506.8 1476.0,507.3 1477.5,507.8 1479.1,508.4 1480.6,508.9 1482.2,509.4 1483.7,509.9 1485.2,510.5 1486.8,511.0 1488.3,511.5 1489.9,512.0 1491.4,512.5 1492.9,512.9 1494.5,513.3 1496.0,513.7 1497.6,514.1 1499.1,514.4 1500.6,514.7 1502.2,515.0 1503.7,515.3 1505.3,515.6 1506.8,515.9 1508.4,516.2 1509.9,516.5 1511.4,516.7 1513.0,516.9 1514.5,517.1 1516.1,517.3 1517.6,517.4 1519.2,517.5 1520.7,517.5 1522.2,517.5 1523.8,517.5 1525.3,517.5 1526.8,517.5 1528.4,517.5 1529.9,517.5 1531.5,517.5 1533.0,517.5 1534.5,517.5 1536.1,517.5 1537.6,517.5 1539.1,517.5 1540.7,517.5 1542.2,517.5 1543.7,517.5 1545.3,517.4 1546.8,517.4 1548.4,517.3 1549.9,517.2 1551.5,517.0 1553.0,516.9 1554.5,516.7 1556.1,516.5 1557.6,516.3 1559.2,516.0 1560.7,515.8 1562.3,515.5 1563.8,515.3 1565.4,515.0 1566.9,514.7 1568.4,514.4 1570.0,514.1 1571.5,513.7 1573.1,513.4 1574.6,513.1 1576.2,512.8 1577.7,512.5 1579.2,512.1 1580.8,511.8 1582.3,511.5 1583.9,511.2 1585.4,510.9 1587.0,510.6 1588.5,510.3 1590.1,510.0 1591.6,509.7 1593.1,509.4 1594.7,509.1 1596.2,508.8 1597.8,508.5 1599.3,508.2 1600.8,507.9 1602.4,507.6 1603.9,507.3 1605.5,506.9 1607.0,506.6 1608.6,506.3 1610.1,506.0 1611.6,505.6 1613.2,505.3 1614.7,505.0 1616.3,504.7 1617.8,504.4 1619.3,504.1 1620.9,503.8 1622.4,503.6 1624.0,503.3 1625.5,503.0 1627.1,502.8 1628.6,502.6 1630.1,502.4 1631.6,502.2 1633.1,502.0 1634.6,501.8 1636.1,501.6 1637.6,501.4 1639.1,501.2 1640.6,500.9 1642.1,500.7 1643.6,500.5 1645.1,500.3 1646.6,500.1 1648.1,499.9 1649.6,499.7 1651.1,499.5 1652.6,499.3 1654.1,499.1 1655.6,499.0 1657.1,498.8 1658.6,498.6 1660.2,498.4 1661.7,498.3 1663.2,498.1 1664.7,497.9 1666.2,497.8 1667.7,497.7 1669.2,497.5 1670.7,497.4 1672.2,497.3 1673.7,497.1 1675.2,497.0 1676.7,496.9 1678.2,496.9 1679.7,496.8 1681.2,496.7 1682.7,496.6 1684.2,496.6 1685.7,496.6 1687.2,496.5 1688.7,496.5 1690.2,496.5 1691.7,496.5 1693.3,496.5 1694.8,496.6 1696.4,496.6 1697.9,496.6 1699.5,496.7 1701.0,496.8 1702.6,496.8 1704.1,496.9 1705.6,497.0 1707.2,497.1 1708.7,497.1 1710.3,497.2 1711.8,497.3 1713.4,497.4 1714.9,497.5 1716.5,497.6 1718.0,497.7 1719.5,497.8 1721.0,497.9 1722.5,498.0 1724.0,498.1 1725.5,498.3 1727.0,498.4 1728.5,498.5 1730.0,498.7 1731.5,498.8 1733.0,499.0 1734.5,499.1 1736.0,499.3 1737.5,499.5 1739.0,499.6 1740.5,499.8 1742.0,499.9 1743.5,500.1 1745.0,500.2" fill="none" stroke="#f0ee1c" stroke-width="1.3" stroke-linejoin="round" shape-rendering="crispEdges"/>
<polyline points="3.0,643.3 4.5,643.3 6.0,643.3 7.5,643.3 9.0,643.3 10.5,643.3 12.0,643.3 13.5,643.3 15.0,643.3 16.5,643.3 18.0,643.3 19.5,643.3 21.0,643.3 22.5,643.3 24.0,643.3 25.5,643.3 27.0,643.3 28.5,643.3 30.0,643.3 31.5,643.3 33.0,643.3 34.5,643.3 36.0,643.3 37.5,643.3 39.0,643.3 40.5,643.3 42.0,643.3 43.5,643.3 45.0,643.3 46.5,643.3 48.0,643.3 49.5,643.3 51.0,643.3 52.5,643.3 54.0,643.3 55.5,643.3 57.0,643.3 58.5,643.3 60.0,643.3 61.5,643.3 63.0,643.3 64.5,643.3 66.0,643.3 67.5,643.3 69.0,643.3 70.5,643.3 72.0,643.3 73.5,643.3 75.0,643.3 76.5,643.3 78.0,643.3 79.5,643.3 81.0,643.3 82.5,643.3 84.0,643.3 85.5,643.3 87.0,643.3 88.5,643.3 90.0,643.3 91.5,643.3 93.0,643.3 94.5,643.3 96.0,643.3 97.5,643.3 99.0,643.3 100.5,643.3 102.0,643.3 103.5,643.3 105.0,643.3 106.5,643.3 108.0,643.3 109.5,643.3 111.0,643.3 112.5,643.3 114.0,643.3 115.5,643.3 117.0,643.3 118.5,643.3 120.0,643.3 121.5,643.3 123.0,643.3 124.5,643.3 126.0,643.3 127.5,643.3 129.0,643.3 130.5,643.3 132.0,643.3 133.5,643.3 135.0,643.3 136.5,643.3 138.0,643.3 139.5,643.3 141.0,643.3 142.5,643.3 144.0,643.3 145.5,643.3 147.0,643.3 148.5,643.3 150.0,643.3 151.5,643.3 153.0,643.3 154.5,643.3 156.0,643.3 157.5,643.3 159.0,643.3 160.5,643.3 162.0,643.3 163.5,643.3 165.0,643.3 166.5,643.3 168.0,643.3 169.5,643.3 171.0,643.3 172.5,643.3 174.0,643.3 175.5,643.3 177.0,643.3 178.5,643.3 180.0,643.3 181.5,643.3 183.0,643.3 184.5,643.3 186.0,643.3 187.5,643.3 189.0,643.3 190.5,643.3 192.0,643.3 193.5,643.3 195.0,643.3 196.5,643.3 198.0,643.3 199.5,643.3 201.0,643.3 202.5,643.3 204.0,643.3 205.5,643.3 207.0,643.3 208.5,643.3 210.0,643.3 211.5,643.3 213.0,643.3 214.5,643.3 216.0,643.3 217.5,643.3 219.0,643.3 220.5,643.3 222.0,643.3 223.5,643.3 225.0,643.3 226.5,643.3 228.0,643.3 229.5,643.3 231.0,643.3 232.5,643.3 234.0,643.3 235.5,643.3 237.0,643.3 238.5,643.3 240.0,643.3 241.5,643.3 243.0,643.3 244.5,643.3 246.0,643.3 247.5,643.3 249.0,643.3 250.5,643.3 252.0,643.3 253.5,643.3 255.0,643.3 256.5,643.3 258.0,643.3 259.5,643.3 261.0,643.3 262.5,643.3 264.0,643.3 265.5,643.3 267.0,643.3 268.5,643.3 270.0,643.3 271.5,643.3 273.0,643.3 274.5,643.3 276.0,643.3 277.5,643.3 279.0,643.3 280.5,643.3 282.0,643.3 283.5,643.3 285.0,643.3 286.5,643.3 288.0,643.3 289.5,643.3 291.0,643.3 292.5,643.3 294.0,643.3 295.5,643.3 297.0,643.3 298.5,643.3 300.0,643.3 301.5,643.3 303.0,643.3 304.5,643.3 306.0,643.3 307.5,643.3 309.1,643.3 310.6,643.3 312.1,643.3 313.6,643.3 315.1,643.3 316.6,643.3 318.1,643.3 319.6,643.3 321.1,643.3 322.6,643.3 324.2,643.3 325.7,643.3 327.2,643.3 328.7,643.3 330.2,643.3 331.7,643.2 333.2,643.2 334.7,643.2 336.2,643.2 337.7,643.2 339.2,643.2 340.8,643.2 342.3,643.2 343.8,643.2 345.3,643.2 346.8,643.2 348.3,643.2 349.8,643.2 351.3,643.2 352.8,643.2 354.3,643.2 355.8,643.2 357.4,643.2 358.9,643.1 360.4,643.1 361.9,643.1 363.4,643.1 364.9,643.1 366.4,643.1 367.9,643.1 369.4,643.1 370.9,643.1 372.5,643.1 374.0,643.1 375.5,643.1 377.0,643.1 378.5,643.1 380.0,643.0 381.5,643.0 383.0,643.0 384.5,643.0 386.0,643.0 387.5,643.0 389.1,643.0 390.6,643.0 392.1,643.0 393.6,643.0 395.1,643.0 396.6,643.0 398.1,643.0 399.6,643.0 401.1,643.0 402.6,642.9 404.2,642.9 405.7,642.9 407.2,642.9 408.7,642.9 410.2,642.9 411.7,642.9 413.2,642.9 414.7,642.9 416.2,642.9 417.7,642.9 419.2,642.9 420.8,642.9 422.3,642.9 423.8,642.9 425.3,642.9 426.8,642.9 428.3,642.9 429.8,642.8 431.3,642.8 432.8,642.8 434.3,642.8 435.8,642.8 437.4,642.8 438.9,642.8 440.4,642.8 441.9,642.8 443.4,642.8 444.9,642.8 446.4,642.8 447.9,642.8 449.4,642.8 450.9,642.8 452.5,642.8 454.0,642.8 455.5,642.8 457.0,642.8 458.5,642.8 460.0,642.8 461.5,642.8 463.0,642.8 464.5,642.8 466.0,642.8 467.6,642.9 469.1,642.9 470.6,642.9 472.1,643.0 473.6,643.0 475.1,643.1 476.6,643.2 478.1,643.4 479.6,643.6 481.2,643.8 482.7,644.1 484.2,644.3 485.7,644.6 487.2,644.9 488.8,645.2 490.5,645.6 492.1,646.0 493.7,646.4 495.4,646.9 497.0,647.4 498.6,647.9 500.2,648.5 501.9,649.1 503.5,649.7 505.1,650.4 506.8,651.3 508.4,652.2 510.0,653.0 511.5,653.6 513.0,654.3 514.5,654.9 516.0,655.5 517.5,656.1 519.0,656.7 520.5,657.2 522.0,657.8 523.5,658.4 525.0,658.9 526.5,659.5 528.0,660.0 529.5,660.5 531.0,661.1 532.5,661.6 534.0,662.2 535.5,662.7 537.0,663.3 538.5,663.9 540.0,664.5 541.5,665.0 543.0,665.6 544.5,666.2 546.0,666.8 547.5,667.4 549.0,668.0 550.5,668.6 552.0,669.2 553.5,669.8 555.0,670.4 556.5,671.0 558.0,671.6 559.5,672.1 561.0,672.7 562.5,673.3 564.0,673.9 565.5,674.5 567.0,675.1 568.5,675.7 570.0,676.3 571.5,676.9 573.0,677.5 574.5,678.1 576.0,678.7 577.5,679.3 579.0,679.9 580.5,680.6 582.0,681.2 583.5,681.8 585.0,682.4 586.5,683.0 588.0,683.6 589.5,684.2 591.0,684.8 592.5,685.4 594.0,686.0 595.5,686.6 597.0,687.2 598.5,687.8 600.0,688.4 601.5,689.0 603.0,689.6 604.5,690.2 606.0,690.8 607.5,691.4 609.0,692.0 610.5,692.6 612.0,693.2 613.5,693.8 615.0,694.4 616.5,695.1 618.0,695.7 619.5,696.3 621.0,696.9 622.5,697.5 624.0,698.1 625.5,698.7 627.0,699.3 628.5,699.9 630.0,700.5 631.5,701.1 633.0,701.7 634.5,702.3 636.0,702.9 637.5,703.4 639.0,704.0 640.5,704.6 642.0,705.2 643.5,705.8 645.0,706.4 646.5,707.0 648.0,707.6 649.5,708.2 651.0,708.8 652.5,709.4 654.0,710.0 655.5,710.6 657.0,711.2 658.5,711.7 660.0,712.3 661.5,712.9 663.0,713.5 664.5,714.1 666.0,714.6 667.5,715.2 669.0,715.8 670.5,716.4 672.0,717.0 673.5,717.5 675.0,718.1 676.5,718.7 678.0,719.3 679.5,719.8 681.0,720.4 682.5,721.0 684.0,721.5 685.5,722.1 687.0,722.7 688.5,723.2 690.0,723.8 691.5,724.4 693.0,724.9 694.5,725.5 696.0,726.0 697.5,726.6 699.0,727.1 700.5,727.7 702.0,728.3 703.5,728.8 705.0,729.4 706.5,729.9 708.0,730.4 709.5,731.0 711.0,731.5 712.5,732.1 714.0,732.6 715.5,733.2 717.0,733.7 718.5,734.2 720.0,734.8 721.5,735.3 723.0,735.8 724.5,736.3 726.0,736.9 727.5,737.4 729.0,737.9 730.5,738.4 732.0,738.9 733.5,739.5 735.0,740.0 736.5,740.5 738.0,741.0 739.5,741.5 741.0,742.0 742.5,742.5 744.0,743.0 745.5,743.5 747.0,744.0 748.5,744.5 750.0,745.0 751.5,745.5 753.0,746.0 754.5,746.5 756.0,747.0 757.5,747.5 759.0,747.9 760.5,748.4 762.0,748.9 763.5,749.4 765.0,749.9 766.5,750.3 768.0,750.8 769.5,751.3 771.0,751.7 772.5,752.2 774.0,752.7 775.5,753.1 777.0,753.6 778.5,754.0 780.0,754.5 781.5,754.9 783.0,755.4 784.5,755.8 786.0,756.2 787.5,756.7 789.0,757.1 790.5,757.6 792.0,758.0 793.5,758.4 795.0,758.9 796.5,759.3 798.0,759.7 799.5,760.1 801.0,760.5 802.5,761.0 804.0,761.4 805.5,761.8 807.0,762.2 808.5,762.6 810.0,763.0 811.5,763.4 813.0,763.8 814.5,764.2 816.0,764.6 817.5,765.0 819.0,765.3 820.5,765.7 822.0,766.1 823.5,766.5 825.0,766.9 826.5,767.2 828.0,767.6 829.5,768.0 831.0,768.3 832.5,768.7 834.0,769.1 835.5,769.4 837.0,769.8 838.5,770.1 840.0,770.5 841.5,770.8 843.0,771.2 844.5,771.5 846.0,771.8 847.5,772.2 849.0,772.5 850.5,772.8 852.0,773.1 853.5,773.5 855.0,773.8 856.5,774.1 858.0,774.4 859.5,774.7 861.0,775.0 862.5,775.3 864.0,775.6 865.5,775.9 867.0,776.2 868.5,776.5 870.0,776.8 871.5,777.1 873.0,777.4 874.5,777.7 876.0,778.0 877.5,778.3 879.0,778.6 880.5,778.9 882.0,779.2 883.5,779.4 885.0,779.7 886.5,780.0 888.0,780.3 889.5,780.5 891.0,780.8 892.5,781.0 894.0,781.2 895.5,781.4 897.0,781.6 898.5,781.8 900.0,781.9 901.5,782.0 903.0,782.2 904.5,782.3 906.0,782.4 907.6,782.6 909.1,782.7 910.6,782.8 912.1,783.0 913.6,783.1 915.1,783.2 916.6,783.3 918.1,783.4 919.6,783.5 921.2,783.7 922.7,783.8 924.2,783.9 925.7,784.0 927.2,784.1 928.7,784.2 930.2,784.2 931.7,784.3 933.2,784.4 934.8,784.5 936.3,784.6 937.8,784.6 939.3,784.7 940.8,784.7 942.3,784.8 943.8,784.8 945.3,784.9 946.8,784.9 948.4,784.9 949.9,785.0 951.4,785.0 952.9,785.0 954.4,785.0 956.0,784.9 957.5,784.8 959.1,784.5 960.6,784.2 962.2,783.8 963.8,783.3 965.3,782.8 966.9,782.3 968.4,781.7 970.0,781.2 971.6,780.6 973.2,779.9 974.9,779.2 976.5,778.3 978.1,777.4 979.7,776.5 981.3,775.5 982.9,774.5 984.5,773.4 986.2,772.3 987.8,771.1 989.4,770.0 991.1,768.8 992.8,767.4 994.5,766.0 996.2,764.5 997.9,763.0 999.6,761.3 1001.3,759.6 1002.9,757.8 1004.6,755.9 1006.2,753.9 1007.8,751.7 1009.4,749.5 1011.1,747.2 1012.7,744.9 1014.3,742.6 1015.9,740.2 1017.6,737.9 1019.2,735.7 1020.8,733.5 1022.4,731.3 1024.1,729.0 1025.7,726.8 1027.3,724.5 1028.9,722.2 1030.5,720.0 1032.1,717.8 1033.8,715.5 1035.4,713.4 1037.0,711.2 1038.6,709.1 1040.2,706.9 1041.8,704.8 1043.5,702.7 1045.1,700.6 1046.7,698.5 1048.3,696.4 1049.9,694.4 1051.6,692.4 1053.2,690.4 1054.8,688.5 1056.4,686.6 1058.0,684.8 1059.6,683.0 1061.2,681.3 1062.8,679.6 1064.4,677.9 1066.0,676.2 1067.6,674.6 1069.1,673.0 1070.7,671.4 1072.3,669.8 1073.9,668.2 1075.5,666.6 1077.1,665.1 1078.7,663.5 1080.4,661.8 1082.1,660.1 1083.8,658.5 1085.5,656.8 1087.2,655.2 1088.9,653.7 1090.6,652.3 1092.1,651.1 1093.6,649.9 1095.1,648.7 1096.6,647.6 1098.1,646.6 1099.6,645.7 1101.1,644.9 1102.8,644.1 1104.6,643.4 1106.3,642.7 1108.0,642.1 1109.8,641.6 1111.5,641.2 1113.2,640.9 1114.9,640.6 1116.6,640.3 1118.3,640.1 1120.0,639.9 1121.7,639.7 1123.4,639.7 1125.0,639.7 1126.7,639.8 1128.3,639.9 1129.9,640.1 1131.5,640.2 1133.2,640.5 1134.8,640.7 1136.4,640.9 1138.0,641.1 1139.7,641.4 1141.3,641.6 1142.9,641.8 1144.5,642.1 1146.1,642.4 1147.7,642.7 1149.3,643.0 1150.9,643.4 1152.6,643.7 1154.2,644.0 1155.8,644.4 1157.4,644.7 1159.0,644.9 1160.6,645.2 1162.2,645.4 1163.8,645.7 1165.4,645.9 1167.1,646.2 1168.7,646.4 1170.3,646.6 1171.9,646.8 1173.5,647.0 1175.2,647.2 1176.8,647.3 1178.4,647.5 1180.0,647.6 1181.5,647.7 1183.1,647.8 1184.6,647.9 1186.2,648.0 1187.7,648.1 1189.2,648.2 1190.8,648.2 1192.3,648.3 1193.9,648.4 1195.4,648.5 1197.0,648.5 1198.5,648.6 1200.0,648.6 1201.6,648.7 1203.1,648.7 1204.7,648.7 1206.2,648.7 1207.7,648.7 1209.3,648.7 1210.8,648.7 1212.4,648.7 1213.9,648.7 1215.5,648.7 1217.0,648.7 1218.5,648.7 1220.1,648.7 1221.6,648.7 1223.2,648.7 1224.7,648.7 1226.3,648.7 1227.8,648.7 1229.3,648.7 1230.9,648.7 1232.4,648.7 1234.0,648.7 1235.5,648.7 1237.1,648.7 1238.6,648.7 1240.2,648.7 1241.7,648.7 1243.2,648.7 1244.8,648.7 1246.3,648.7 1247.9,648.7 1249.4,648.7 1251.0,648.7 1252.5,648.7 1254.0,648.7 1255.6,648.7 1257.1,648.7 1258.7,648.6 1260.2,648.6 1261.7,648.6 1263.3,648.5 1264.8,648.5 1266.4,648.4 1267.9,648.4 1269.4,648.3 1271.0,648.3 1272.5,648.2 1274.1,648.2 1275.6,648.1 1277.1,648.0 1278.7,648.0 1280.2,647.9 1281.8,647.9 1283.3,647.8 1284.8,647.8 1286.4,647.7 1287.9,647.7 1289.5,647.6 1291.0,647.6 1292.5,647.6 1294.1,647.5 1295.6,647.5 1297.2,647.5 1298.7,647.5 1300.2,647.5 1301.8,647.5 1303.3,647.6 1304.9,647.6 1306.4,647.7 1308.0,647.7 1309.5,647.8 1311.0,647.9 1312.6,648.0 1314.1,648.1 1315.7,648.2 1317.2,648.3 1318.8,648.4 1320.3,648.5 1321.8,648.7 1323.4,648.8 1324.9,648.9 1326.5,649.1 1328.0,649.2 1329.6,649.4 1331.1,649.5 1332.7,649.7 1334.2,649.8 1335.7,650.0 1337.3,650.2 1338.8,650.3 1340.4,650.5 1341.9,650.6 1343.5,650.8 1345.0,650.9 1346.5,651.0 1348.1,651.2 1349.6,651.4 1351.2,651.5 1352.7,651.7 1354.2,651.8 1355.8,652.0 1357.3,652.2 1358.9,652.4 1360.4,652.6 1361.9,652.8 1363.5,652.9 1365.0,653.1 1366.6,653.3 1368.1,653.5 1369.6,653.7 1371.2,653.9 1372.7,654.1 1374.3,654.4 1375.8,654.6 1377.3,654.8 1378.9,655.0 1380.4,655.2 1382.0,655.4 1383.5,655.6 1385.0,655.8 1386.6,656.1 1388.1,656.3 1389.7,656.5 1391.2,656.7 1392.7,656.9 1394.2,657.1 1395.7,657.4 1397.2,657.6 1398.7,657.9 1400.2,658.2 1401.7,658.5 1403.2,658.8 1404.7,659.1 1406.2,659.4 1407.7,659.7 1409.2,660.0 1410.7,660.3 1412.2,660.6 1413.7,660.9 1415.2,661.2 1416.7,661.6 1418.2,661.9 1419.7,662.2 1421.2,662.5 1422.7,662.7 1424.2,663.0 1425.7,663.3 1427.2,663.6 1428.7,663.8 1430.2,664.0 1431.7,664.2 1433.2,664.5 1434.7,664.6 1436.2,664.8 1437.7,665.0 1439.2,665.1 1440.7,665.2 1442.2,665.3 1443.7,665.3 1445.2,665.4 1446.7,665.4 1448.2,665.4 1449.8,665.4 1451.3,665.4 1452.9,665.4 1454.4,665.4 1455.9,665.4 1457.5,665.4 1459.0,665.4 1460.6,665.4 1462.1,665.4 1463.6,665.4 1465.2,665.4 1466.7,665.4 1468.3,665.4 1469.8,665.4 1471.3,665.4 1472.9,665.4 1474.4,665.4 1476.0,665.4 1477.5,665.4 1479.0,665.4 1480.6,665.3 1482.1,665.2 1483.7,665.1 1485.2,665.0 1486.8,664.8 1488.3,664.6 1489.8,664.4 1491.4,664.2 1492.9,663.9 1494.5,663.6 1496.0,663.4 1497.5,663.1 1499.1,662.8 1500.6,662.5 1502.2,662.1 1503.7,661.8 1505.2,661.5 1506.8,661.2 1508.3,660.9 1509.9,660.6 1511.4,660.3 1513.0,660.1 1514.5,659.8 1516.0,659.5 1517.6,659.3 1519.1,659.0 1520.7,658.8 1522.2,658.5 1523.7,658.2 1525.3,657.9 1526.8,657.7 1528.4,657.4 1529.9,657.1 1531.4,656.8 1533.0,656.5 1534.5,656.2 1536.1,655.9 1537.6,655.7 1539.1,655.4 1540.7,655.1 1542.2,654.8 1543.8,654.5 1545.3,654.2 1546.8,653.9 1548.4,653.6 1549.9,653.4 1551.5,653.1 1553.0,652.8 1554.5,652.5 1556.1,652.3 1557.6,652.0 1559.2,651.8 1560.7,651.5 1562.2,651.2 1563.8,651.0 1565.3,650.7 1566.9,650.4 1568.4,650.1 1570.0,649.7 1571.5,649.4 1573.1,649.1 1574.6,648.8 1576.2,648.5 1577.7,648.2 1579.2,648.0 1580.8,647.7 1582.3,647.5 1583.9,647.3 1585.4,647.1 1587.0,647.0 1588.5,646.9 1590.1,646.8 1591.6,646.8 1593.1,646.8 1594.7,646.8 1596.2,646.8 1597.8,646.8 1599.3,646.8 1600.8,646.8 1602.4,646.8 1603.9,646.8 1605.5,646.8 1607.0,646.8 1608.6,646.8 1610.1,646.8 1611.6,646.8 1613.2,646.8 1614.7,646.8 1616.3,646.8 1617.8,646.8 1619.3,646.8 1620.9,646.8 1622.4,646.8 1624.0,646.8 1625.5,646.8 1627.1,646.8 1628.6,646.8 1630.1,646.8 1631.7,646.8 1633.2,646.9 1634.8,646.9 1636.3,647.0 1637.8,647.0 1639.4,647.1 1640.9,647.2 1642.4,647.3 1644.0,647.4 1645.5,647.6 1647.1,647.7 1648.6,647.8 1650.1,648.0 1651.7,648.1 1653.2,648.3 1654.8,648.4 1656.3,648.6 1657.8,648.8 1659.4,648.9 1660.9,649.1 1662.4,649.2 1664.0,649.4 1665.5,649.6 1667.1,649.7 1668.6,649.9 1670.1,650.1 1671.7,650.3 1673.2,650.5 1674.8,650.7 1676.3,650.9 1677.9,651.1 1679.4,651.4 1680.9,651.6 1682.5,651.9 1684.0,652.1 1685.6,652.4 1687.1,652.7 1688.7,653.0 1690.2,653.2 1691.7,653.5 1693.3,653.8 1694.8,654.1 1696.4,654.3 1697.9,654.6 1699.4,654.8 1701.0,655.1 1702.5,655.3 1704.1,655.5 1705.6,655.7 1707.2,655.9 1708.7,656.1 1710.2,656.3 1711.7,656.4 1713.2,656.6 1714.8,656.7 1716.3,656.9 1717.8,657.0 1719.3,657.1 1720.8,657.3 1722.3,657.4 1723.8,657.5 1725.3,657.6 1726.8,657.8 1728.4,657.9 1729.9,658.0 1731.4,658.1 1732.9,658.2 1734.4,658.3 1735.9,658.5 1737.4,658.6 1739.0,658.7 1740.5,658.8 1742.0,658.9 1743.5,659.1 1745.0,659.2" fill="none" stroke="#22b8cc" stroke-width="1.3" stroke-linejoin="round" shape-rendering="crispEdges"/>
<polyline points="3.0,962.2 4.5,962.2 6.0,962.2 7.6,962.2 9.1,962.3 10.6,962.3 12.1,962.3 13.6,962.3 15.1,962.3 16.7,962.4 18.2,962.4 19.7,962.4 21.2,962.4 22.7,962.4 24.2,962.5 25.8,962.5 27.3,962.5 28.8,962.5 30.3,962.5 31.8,962.6 33.3,962.6 34.9,962.6 36.4,962.6 37.9,962.6 39.4,962.7 40.9,962.7 42.4,962.7 44.0,962.7 45.5,962.7 47.0,962.8 48.5,962.8 50.0,962.8 51.6,962.8 53.1,962.8 54.6,962.9 56.1,962.9 57.6,962.9 59.1,962.9 60.7,962.9 62.2,962.9 63.7,963.0 65.2,963.0 66.7,963.0 68.2,963.0 69.8,963.0 71.3,963.0 72.8,963.0 74.3,963.0 75.8,963.1 77.3,963.1 78.9,963.1 80.4,963.1 81.9,963.1 83.4,963.1 84.9,963.1 86.4,963.1 88.0,963.1 89.5,963.1 91.0,963.1 92.5,963.1 94.0,963.0 95.5,963.0 97.0,962.9 98.5,962.7 100.1,962.6 101.6,962.4 103.1,962.3 104.6,962.1 106.1,961.9 107.6,961.7 109.1,961.5 110.6,961.4 112.1,961.2 113.7,961.1 115.2,960.9 116.7,960.8 118.2,960.8 119.7,960.7 121.2,960.7 122.7,960.7 124.2,960.7 125.7,960.7 127.3,960.8 128.8,960.8 130.3,960.8 131.8,960.9 133.3,960.9 134.8,961.0 136.3,961.0 137.9,961.1 139.4,961.2 140.9,961.2 142.4,961.3 143.9,961.4 145.4,961.4 147.0,961.5 148.5,961.6 150.0,961.7 151.5,961.8 153.0,961.8 154.5,961.9 156.0,962.0 157.6,962.1 159.1,962.1 160.6,962.2 162.1,962.3 163.6,962.3 165.1,962.4 166.7,962.5 168.2,962.5 169.7,962.6 171.2,962.6 172.7,962.7 174.2,962.7 175.7,962.7 177.3,962.8 178.8,962.8 180.3,962.8 181.8,962.8 183.3,962.8 184.8,962.8 186.3,962.8 187.9,962.8 189.4,962.8 190.9,962.8 192.4,962.8 193.9,962.8 195.4,962.8 197.0,962.8 198.5,962.8 200.0,962.8 201.5,962.8 203.0,962.8 204.5,962.8 206.0,962.8 207.6,962.8 209.1,962.8 210.6,962.8 212.1,962.8 213.6,962.8 215.1,962.7 216.6,962.7 218.2,962.7 219.7,962.7 221.2,962.7 222.7,962.7 224.2,962.7 225.7,962.7 227.2,962.7 228.8,962.7 230.3,962.7 231.8,962.7 233.3,962.7 234.8,962.7 236.3,962.7 237.9,962.7 239.4,962.6 240.9,962.6 242.4,962.6 243.9,962.6 245.4,962.6 246.9,962.6 248.5,962.6 250.0,962.6 251.5,962.6 253.0,962.6 254.5,962.6 256.0,962.6 257.6,962.5 259.1,962.5 260.6,962.5 262.1,962.5 263.6,962.5 265.1,962.5 266.6,962.5 268.2,962.5 269.7,962.5 271.2,962.5 272.7,962.4 274.2,962.4 275.7,962.4 277.2,962.4 278.8,962.4 280.3,962.4 281.8,962.4 283.3,962.4 284.8,962.4 286.3,962.3 287.9,962.3 289.4,962.3 290.9,962.3 292.4,962.3 293.9,962.3 295.4,962.3 296.9,962.3 298.5,962.2 300.0,962.2 301.5,962.2 303.0,962.2 304.5,962.2 306.0,962.2 307.5,962.2 309.0,962.1 310.5,962.1 312.1,962.1 313.6,962.1 315.1,962.0 316.6,962.0 318.1,962.0 319.6,962.0 321.1,961.9 322.6,961.9 324.1,961.9 325.6,961.8 327.2,961.8 328.7,961.8 330.2,961.7 331.7,961.7 333.2,961.7 334.7,961.6 336.2,961.6 337.7,961.5 339.2,961.5 340.7,961.4 342.3,961.4 343.8,961.4 345.3,961.3 346.8,961.3 348.3,961.2 349.8,961.2 351.3,961.1 352.8,961.1 354.3,961.0 355.8,961.0 357.4,960.9 358.9,960.9 360.4,960.8 361.9,960.8 363.4,960.7 364.9,960.7 366.4,960.6 367.9,960.6 369.4,960.5 370.9,960.5 372.5,960.4 374.0,960.4 375.5,960.3 377.0,960.3 378.5,960.2 380.0,960.2 381.5,960.2 383.1,960.1 384.6,960.1 386.2,960.0 387.7,960.0 389.2,959.9 390.8,959.9 392.3,959.8 393.9,959.8 395.4,959.7 396.9,959.7 398.5,959.6 400.0,959.5 401.6,959.4 403.1,959.3 404.7,959.1 406.3,958.9 407.9,958.6 409.5,958.2 411.1,957.7 412.8,957.2 414.4,956.6 416.0,956.0 417.6,955.3 419.2,954.6 420.8,953.9 422.4,953.0 424.0,952.0 425.6,950.7 427.2,949.2 428.8,947.7 430.4,946.0 432.0,944.3 433.6,942.6 435.2,941.0 436.8,939.3 438.4,937.8 440.0,936.3 441.6,934.9 443.2,933.4 444.8,931.9 446.4,930.5 448.1,929.0 449.7,927.5 451.3,926.0 452.9,924.5 454.5,923.0 456.1,921.5 457.7,919.9 459.4,918.3 461.0,916.7 462.6,915.0 464.2,913.4 465.9,911.7 467.5,910.1 469.1,908.4 470.8,906.8 472.4,905.2 473.9,903.7 475.4,902.2 476.9,900.7 478.4,899.2 480.0,897.7 481.5,896.2 483.0,894.9 484.5,893.5 486.0,892.3 487.5,891.1 489.0,889.9 490.5,888.8 492.0,887.6 493.6,886.6 495.1,885.6 496.6,884.7 498.1,883.9 499.6,883.2 501.2,882.6 502.8,881.9 504.4,881.3 505.9,880.8 507.5,880.5 509.1,880.4 510.7,880.4 512.3,880.4 514.0,880.4 515.6,880.5 517.2,880.5 518.8,880.6 520.4,880.8 522.0,881.1 523.6,881.5 525.2,881.9 526.8,882.4 528.3,882.8 529.9,883.3 531.5,883.6 533.1,883.9 534.7,884.1 536.3,884.2 537.9,884.2 539.5,884.2 541.1,884.2 542.7,884.2 544.3,884.2 545.9,884.2 547.5,884.2 549.1,884.2 550.7,884.2 552.3,884.2 553.9,884.2 555.5,884.1 557.1,883.9 558.6,883.5 560.2,883.0 561.8,882.5 563.4,881.8 565.0,881.2 566.6,880.5 568.1,879.8 569.7,879.2 571.3,878.5 572.9,878.0 574.5,877.5 576.1,876.9 577.7,876.4 579.3,875.9 580.9,875.3 582.6,874.8 584.2,874.3 585.8,873.8 587.4,873.4 589.0,872.9 590.6,872.6 592.2,872.3 593.7,872.0 595.3,871.8 596.9,871.5 598.4,871.3 600.0,871.1 601.6,870.9 603.2,870.7 604.7,870.5 606.3,870.3 607.9,870.1 609.4,869.8 611.0,869.6 612.5,869.4 614.1,869.1 615.6,868.9 617.1,868.6 618.6,868.4 620.2,868.1 621.7,867.9 623.2,867.6 624.7,867.4 626.3,867.1 627.8,866.9 629.3,866.6 630.8,866.3 632.4,866.0 633.9,865.7 635.4,865.4 636.9,865.1 638.5,864.8 640.0,864.5 641.6,864.1 643.1,863.7 644.7,863.2 646.3,862.8 647.8,862.2 649.4,861.7 651.0,861.3 652.5,860.8 654.1,860.4 655.7,860.0 657.2,859.7 658.8,859.5 660.3,859.3 661.8,859.2 663.3,859.1 664.9,858.9 666.4,858.8 667.9,858.7 669.4,858.6 670.9,858.4 672.4,858.3 673.9,858.2 675.5,858.1 677.0,858.0 678.5,858.0 680.0,857.9 681.5,857.8 683.0,857.7 684.5,857.6 686.1,857.6 687.6,857.5 689.1,857.4 690.6,857.4 692.1,857.3 693.6,857.3 695.1,857.2 696.7,857.2 698.2,857.1 699.7,857.1 701.2,857.0 702.7,856.9 704.2,856.9 705.8,856.8 707.3,856.8 708.8,856.7 710.3,856.7 711.8,856.6 713.3,856.6 714.9,856.5 716.4,856.5 717.9,856.4 719.4,856.4 720.9,856.4 722.4,856.3 724.0,856.3 725.5,856.2 727.0,856.2 728.5,856.2 730.0,856.2 731.5,856.1 733.1,856.1 734.6,856.1 736.1,856.1 737.6,856.1 739.1,856.1 740.6,856.1 742.1,856.1 743.7,856.1 745.2,856.1 746.7,856.2 748.2,856.2 749.7,856.2 751.2,856.2 752.8,856.2 754.3,856.3 755.8,856.3 757.3,856.3 758.8,856.3 760.3,856.4 761.8,856.4 763.4,856.4 764.9,856.4 766.4,856.4 767.9,856.4 769.4,856.4 770.9,856.4 772.4,856.4 774.0,856.3 775.5,856.3 777.0,856.2 778.5,856.2 780.0,856.1 781.5,856.1 783.0,856.0 784.6,855.9 786.1,855.8 787.6,855.7 789.1,855.6 790.6,855.5 792.1,855.4 793.6,855.3 795.2,855.2 796.7,855.1 798.2,855.0 799.7,854.9 801.2,854.8 802.7,854.6 804.2,854.5 805.8,854.4 807.3,854.3 808.8,854.1 810.3,854.0 811.8,853.8 813.3,853.6 814.8,853.4 816.4,853.2 817.9,852.9 819.4,852.6 820.9,852.3 822.4,852.1 824.0,851.9 825.5,851.7 827.0,851.6 828.5,851.6 830.0,851.6 831.5,851.6 833.0,851.6 834.6,851.6 836.1,851.6 837.6,851.6 839.1,851.6 840.6,851.6 842.2,851.6 843.7,851.6 845.2,851.6 846.7,851.6 848.2,851.6 849.7,851.6 851.2,851.7 852.8,851.8 854.3,851.8 855.8,851.9 857.3,852.1 858.8,852.2 860.3,852.3 861.8,852.5 863.3,852.6 864.9,852.8 866.4,853.0 867.9,853.1 869.4,853.3 870.9,853.5 872.4,853.7 873.9,853.9 875.4,854.0 877.0,854.2 878.5,854.4 880.0,854.6 881.5,854.7 883.0,854.9 884.5,855.1 886.0,855.2 887.5,855.4 889.1,855.6 890.6,855.9 892.1,856.1 893.6,856.3 895.1,856.5 896.6,856.7 898.1,857.0 899.7,857.2 901.2,857.4 902.7,857.6 904.2,857.8 905.7,857.9 907.2,858.1 908.8,858.2 910.3,858.3 911.8,858.4 913.3,858.5 914.8,858.5 916.3,858.6 917.8,858.6 919.4,858.7 920.9,858.7 922.4,858.7 923.9,858.7 925.4,858.8 927.0,858.8 928.5,858.8 930.0,858.8 931.5,858.8 933.0,858.9 934.5,858.9 936.0,858.9 937.6,858.9 939.1,858.9 940.6,859.0 942.1,859.0 943.6,859.0 945.2,859.1 946.7,859.1 948.2,859.1 949.7,859.2 951.2,859.3 952.7,859.4 954.2,859.5 955.8,859.6 957.3,859.7 958.8,859.9 960.3,860.1 961.8,860.3 963.3,860.5 964.8,860.8 966.3,861.0 967.9,861.3 969.4,861.6 970.9,861.9 972.4,862.2 973.9,862.5 975.4,862.9 976.9,863.4 978.5,863.9 980.0,864.6 981.5,865.3 983.0,866.0 984.5,866.9 986.0,867.7 987.6,868.6 989.1,869.6 990.6,870.5 992.1,871.5 993.6,872.4 995.2,873.4 996.7,874.3 998.2,875.2 999.7,876.1 1001.2,877.1 1002.7,878.2 1004.3,879.3 1005.8,880.4 1007.3,881.6 1008.8,882.7 1010.3,884.0 1011.8,885.2 1013.3,886.4 1014.9,887.6 1016.4,888.8 1017.9,889.9 1019.4,891.1 1020.9,892.2 1022.4,893.2 1023.9,894.2 1025.4,895.1 1027.0,895.9 1028.5,896.7 1030.0,897.3 1031.5,897.9 1033.0,898.4 1034.5,898.9 1036.1,899.5 1037.6,899.9 1039.1,900.4 1040.6,900.8 1042.1,901.1 1043.7,901.4 1045.2,901.5 1046.7,901.6 1048.2,901.5 1049.7,901.3 1051.2,900.9 1052.7,900.5 1054.2,899.9 1055.8,899.3 1057.3,898.6 1058.8,897.9 1060.3,897.1 1061.8,896.4 1063.3,895.6 1064.8,894.9 1066.3,894.2 1067.8,893.4 1069.4,892.5 1070.9,891.6 1072.4,890.7 1073.9,889.7 1075.4,888.7 1077.0,887.7 1078.5,886.6 1080.0,885.6 1081.5,884.5 1083.0,883.4 1084.6,882.3 1086.1,881.2 1087.6,880.2 1089.1,879.1 1090.6,878.1 1092.2,877.1 1093.7,876.1 1095.2,875.2 1096.7,874.3 1098.2,873.4 1099.7,872.6 1101.3,871.8 1102.8,871.0 1104.3,870.2 1105.8,869.4 1107.3,868.6 1108.8,867.8 1110.3,867.0 1111.9,866.3 1113.4,865.5 1114.9,864.7 1116.4,863.8 1117.9,863.0 1119.4,862.2 1121.0,861.3 1122.5,860.4 1124.0,859.5 1125.5,858.5 1127.0,857.5 1128.5,856.4 1130.0,855.2 1131.5,854.0 1133.0,852.7 1134.5,851.4 1136.0,850.0 1137.5,848.7 1139.0,847.3 1140.5,845.9 1142.0,844.5 1143.5,843.1 1145.0,841.7 1146.5,840.4 1148.0,839.1 1149.5,837.8 1151.0,836.6 1152.5,835.5 1154.0,834.5 1155.5,833.5 1157.0,832.7 1158.5,831.9 1160.0,831.3 1161.5,830.7 1163.1,830.1 1164.6,829.5 1166.2,829.0 1167.7,828.5 1169.2,828.0 1170.8,827.6 1172.3,827.3 1173.9,827.2 1175.4,827.1 1176.9,827.2 1178.5,827.3 1180.0,827.6 1181.6,827.9 1183.1,828.3 1184.6,828.8 1186.2,829.3 1187.7,829.8 1189.3,830.4 1190.8,831.0 1192.3,831.5 1193.9,832.1 1195.4,832.6 1197.0,833.1 1198.5,833.6 1200.0,834.0 1201.6,834.3 1203.1,834.6 1204.7,834.7 1206.2,834.8 1207.7,834.8 1209.3,834.7 1210.8,834.6 1212.4,834.5 1213.9,834.4 1215.5,834.2 1217.0,834.0 1218.5,833.8 1220.1,833.6 1221.6,833.4 1223.2,833.1 1224.7,832.9 1226.2,832.6 1227.8,832.4 1229.3,832.2 1230.9,831.9 1232.4,831.7 1234.0,831.5 1235.5,831.3 1237.0,831.1 1238.6,830.9 1240.1,830.8 1241.7,830.7 1243.2,830.6 1244.8,830.5 1246.3,830.5 1247.8,830.5 1249.4,830.6 1250.9,830.8 1252.5,831.0 1254.0,831.2 1255.5,831.5 1257.1,831.9 1258.6,832.2 1260.2,832.7 1261.7,833.1 1263.3,833.6 1264.8,834.1 1266.3,834.6 1267.9,835.1 1269.4,835.6 1271.0,836.2 1272.5,836.7 1274.0,837.3 1275.6,837.8 1277.1,838.4 1278.7,838.9 1280.2,839.4 1281.7,839.9 1283.3,840.4 1284.8,840.9 1286.4,841.3 1287.9,841.7 1289.5,842.0 1291.0,842.4 1292.5,842.6 1294.1,842.9 1295.6,843.0 1297.2,843.1 1298.7,843.2 1300.2,843.2 1301.8,843.2 1303.3,843.3 1304.9,843.3 1306.4,843.3 1307.9,843.3 1309.5,843.3 1311.0,843.3 1312.6,843.3 1314.1,843.4 1315.6,843.4 1317.2,843.4 1318.7,843.4 1320.3,843.4 1321.8,843.4 1323.3,843.4 1324.9,843.4 1326.4,843.5 1328.0,843.5 1329.5,843.5 1331.0,843.5 1332.5,843.6 1334.0,843.6 1335.5,843.7 1337.1,843.8 1338.6,843.8 1340.1,843.9 1341.6,844.0 1343.1,844.1 1344.6,844.3 1346.1,844.4 1347.6,844.5 1349.2,844.7 1350.7,844.8 1352.2,845.0 1353.7,845.1 1355.2,845.3 1356.7,845.5 1358.2,845.6 1359.7,845.8 1361.2,846.0 1362.8,846.2 1364.3,846.4 1365.8,846.6 1367.3,846.8 1368.8,847.0 1370.3,847.2 1371.8,847.5 1373.3,847.7 1374.9,847.9 1376.4,848.1 1377.9,848.3 1379.4,848.6 1380.9,848.8 1382.4,849.0 1383.9,849.2 1385.4,849.5 1386.9,849.7 1388.5,849.9 1390.0,850.1 1391.5,850.4 1393.0,850.6 1394.5,850.8 1396.0,851.0 1397.5,851.2 1399.0,851.4 1400.6,851.6 1402.1,851.8 1403.6,852.0 1405.1,852.2 1406.6,852.4 1408.1,852.6 1409.6,852.8 1411.1,853.0 1412.6,853.2 1414.1,853.4 1415.6,853.6 1417.1,853.9 1418.7,854.1 1420.2,854.4 1421.7,854.6 1423.2,854.9 1424.7,855.1 1426.2,855.4 1427.7,855.6 1429.2,855.9 1430.7,856.1 1432.2,856.4 1433.7,856.7 1435.2,856.9 1436.7,857.2 1438.2,857.4 1439.7,857.7 1441.3,857.9 1442.8,858.1 1444.3,858.4 1445.8,858.6 1447.3,858.8 1448.8,859.0 1450.3,859.3 1451.8,859.5 1453.3,859.6 1454.8,859.8 1456.3,860.0 1457.8,860.2 1459.3,860.3 1460.8,860.5 1462.3,860.6 1463.9,860.7 1465.4,860.8 1466.9,860.9 1468.4,861.0 1469.9,861.0 1471.4,861.1 1472.9,861.1 1474.4,861.1 1475.9,861.1 1477.4,861.1 1478.9,861.1 1480.4,861.1 1481.9,861.1 1483.4,861.0 1484.9,861.0 1486.4,861.0 1487.9,861.0 1489.4,860.9 1491.0,860.9 1492.5,860.9 1494.0,860.8 1495.5,860.8 1497.0,860.7 1498.5,860.7 1500.0,860.6 1501.5,860.6 1503.0,860.5 1504.5,860.5 1506.0,860.4 1507.5,860.4 1509.0,860.3 1510.5,860.2 1512.0,860.2 1513.5,860.1 1515.0,860.0 1516.5,860.0 1518.0,859.9 1519.5,859.8 1521.1,859.7 1522.6,859.7 1524.1,859.6 1525.6,859.5 1527.1,859.4 1528.6,859.3 1530.1,859.2 1531.6,859.2 1533.1,859.1 1534.6,859.0 1536.1,858.9 1537.6,858.8 1539.2,858.7 1540.7,858.6 1542.3,858.4 1543.8,858.3 1545.4,858.1 1546.9,857.9 1548.4,857.7 1550.0,857.6 1551.5,857.3 1553.1,857.1 1554.6,856.9 1556.2,856.7 1557.7,856.5 1559.2,856.2 1560.8,856.0 1562.3,855.7 1563.9,855.5 1565.4,855.2 1566.9,855.0 1568.5,854.7 1570.0,854.4 1571.6,854.2 1573.1,853.9 1574.7,853.7 1576.2,853.4 1577.7,853.1 1579.3,852.8 1580.8,852.5 1582.4,852.1 1583.9,851.8 1585.4,851.4 1587.0,850.9 1588.5,850.5 1590.0,850.1 1591.6,849.7 1593.1,849.2 1594.7,848.8 1596.2,848.4 1597.7,848.0 1599.3,847.6 1600.8,847.2 1602.4,846.8 1603.9,846.5 1605.4,846.1 1607.0,845.9 1608.5,845.6 1610.0,845.4 1611.6,845.2 1613.1,845.1 1614.7,845.0 1616.2,845.0 1617.7,845.0 1619.3,845.0 1620.8,845.0 1622.4,845.0 1623.9,845.0 1625.5,845.0 1627.0,845.0 1628.5,845.0 1630.1,845.0 1631.6,845.0 1633.2,845.0 1634.7,845.0 1636.2,845.0 1637.8,845.0 1639.3,845.0 1640.9,845.0 1642.4,845.0 1644.0,845.0 1645.5,845.0 1647.0,845.0 1648.6,845.0 1650.1,845.0 1651.7,845.0 1653.2,845.0 1654.7,845.0 1656.3,845.1 1657.8,845.1 1659.4,845.2 1660.9,845.3 1662.4,845.5 1664.0,845.6 1665.5,845.8 1667.1,846.0 1668.6,846.2 1670.1,846.4 1671.7,846.7 1673.2,846.9 1674.8,847.2 1676.3,847.4 1677.8,847.7 1679.4,848.0 1680.9,848.3 1682.5,848.6 1684.0,848.8 1685.6,849.1 1687.1,849.4 1688.6,849.7 1690.2,850.0 1691.7,850.2 1693.3,850.5 1694.8,850.7 1696.3,851.0 1697.9,851.2 1699.4,851.4 1701.0,851.6 1702.5,851.8 1704.0,852.0 1705.5,852.1 1707.1,852.3 1708.6,852.4 1710.1,852.6 1711.6,852.8 1713.1,852.9 1714.6,853.0 1716.2,853.2 1717.7,853.3 1719.2,853.5 1720.7,853.6 1722.2,853.8 1723.8,853.9 1725.3,854.0 1726.8,854.2 1728.3,854.3 1729.8,854.4 1731.3,854.6 1732.9,854.7 1734.4,854.8 1735.9,855.0 1737.4,855.1 1738.9,855.2 1740.4,855.4 1742.0,855.5 1743.5,855.7 1745.0,855.8" fill="none" stroke="#e03050" stroke-width="1.3" stroke-linejoin="round" shape-rendering="crispEdges"/>
<path d="M9 350.95 L31 350.95 L42 363.2 L31 375.45 L9 375.45 Q6 375.45 6 372.45 L6 353.95 Q6 350.95 9 350.95 Z" fill="#2c1a08" stroke="#d4822e" stroke-width="1.2"/>
<text x="23.8" y="368.78" font-size="15.5" fill="#ee9440" text-anchor="middle" font-weight="normal" textLength="24" lengthAdjust="spacingAndGlyphs">M 1</text>
<path d="M9 491.4 L31 491.4 L42 503.9 L31 516.4 L9 516.4 Q6 516.4 6 513.4 L6 494.4 Q6 491.4 9 491.4 Z" fill="#2a2810" stroke="#d8d030" stroke-width="1.2"/>
<text x="23" y="509.29999999999995" font-size="15" fill="#ecea40" text-anchor="middle" font-weight="normal" textLength="20" lengthAdjust="spacingAndGlyphs">R 1</text>
<path d="M9.5 638.25 L30.5 638.25 L41.5 650 L30.5 661.75 L9.5 661.75 Q6.5 661.75 6.5 658.75 L6.5 641.25 Q6.5 638.25 9.5 638.25 Z" fill="#2ccad8" stroke="#2ccad8" stroke-width="1.2"/>
<text x="23" y="655.4" font-size="15" fill="#0a1418" text-anchor="middle" font-weight="normal" textLength="20" lengthAdjust="spacingAndGlyphs">R 2</text>
<path d="M9 948.7 L31 948.7 L42 961.2 L31 973.7 L9 973.7 Q6 973.7 6 970.7 L6 951.7 Q6 948.7 9 948.7 Z" fill="#2a1018" stroke="#c84862" stroke-width="1.2"/>
<text x="23" y="966.6" font-size="15" fill="#f4f4f4" text-anchor="middle" font-weight="normal" textLength="20" lengthAdjust="spacingAndGlyphs">R 3</text>
<text x="13" y="339.2" font-size="21.5" fill="#f0922e" text-anchor="start" font-weight="normal" textLength="187" lengthAdjust="spacingAndGlyphs">Err:Power(meas2)</text>
<text x="8.2" y="541.5" font-size="20.5" fill="#f0ee1c" text-anchor="start" font-weight="normal" textLength="32.5" lengthAdjust="spacingAndGlyphs">Vrr</text>
<text x="13.5" y="686" font-size="20.5" fill="#26c2d2" text-anchor="start" font-weight="normal" textLength="22.8" lengthAdjust="spacingAndGlyphs">Irr</text>
<text x="12" y="938" font-size="20.5" fill="#e8405c" text-anchor="start" font-weight="normal" textLength="38" lengthAdjust="spacingAndGlyphs">Vgs</text>
<circle cx="1756" cy="500.4" r="2.1" fill="#b4b4b4"/>
<circle cx="1756" cy="509.2" r="2.1" fill="#b4b4b4"/>
<circle cx="1756" cy="517.7" r="2.1" fill="#b4b4b4"/>
<path d="M1763.5 990 L1763.5 29.5 L1914 29.5" fill="none" stroke="#5e5a55" stroke-width="1"/>
<line x1="1763" y1="989.5" x2="1914" y2="989.5" stroke="#6a625a" stroke-width="1"/>
<text x="1838.5" y="46" font-size="15.5" fill="#eeeeee" text-anchor="middle" font-weight="bold" textLength="81" lengthAdjust="spacingAndGlyphs">Add New...</text>
<rect x="1772.5" y="56.5" width="62" height="36" rx="5" fill="url(#btn)" stroke="#6e655c" stroke-width="1"/>
<rect x="1844.5" y="56.5" width="62" height="36" rx="5" fill="url(#btn)" stroke="#6e655c" stroke-width="1"/>
<rect x="1772.5" y="102.5" width="62" height="36" rx="5" fill="url(#btn)" stroke="#6e655c" stroke-width="1"/>
<rect x="1844.5" y="102.5" width="62" height="36" rx="5" fill="url(#btn)" stroke="#6e655c" stroke-width="1"/>
<rect x="1772.5" y="148.5" width="62" height="36" rx="5" fill="url(#btn)" stroke="#6e655c" stroke-width="1"/>
<rect x="1844.5" y="148.5" width="62" height="36" rx="5" fill="url(#btn)" stroke="#6e655c" stroke-width="1"/>
<rect x="1772.5" y="198.5" width="62" height="36" rx="5" fill="url(#btn)" stroke="#6e655c" stroke-width="1"/>
<rect x="1844.5" y="198.5" width="62" height="36" rx="5" fill="url(#btn)" stroke="#6e655c" stroke-width="1"/>
<text x="1779" y="80.2" font-size="14.8" fill="#eaeaea" text-anchor="start" font-weight="normal" textLength="49.6" lengthAdjust="spacingAndGlyphs">Cursors</text>
<text x="1851.6" y="80.2" font-size="14.8" fill="#eaeaea" text-anchor="start" font-weight="normal" textLength="48.3" lengthAdjust="spacingAndGlyphs">Callout</text>
<text x="1774.3" y="126" font-size="14.8" fill="#eaeaea" text-anchor="start" font-weight="normal" textLength="57.8" lengthAdjust="spacingAndGlyphs">Measure</text>
<text x="1851.9" y="126" font-size="14.8" fill="#eaeaea" text-anchor="start" font-weight="normal" textLength="45.7" lengthAdjust="spacingAndGlyphs">Search</text>
<text x="1779.6" y="162.9" font-size="14.8" fill="#eaeaea" text-anchor="start" font-weight="normal" textLength="46.7" lengthAdjust="spacingAndGlyphs">Results</text>
<text x="1786.6" y="180.5" font-size="14.8" fill="#eaeaea" text-anchor="start" font-weight="normal" textLength="33.7" lengthAdjust="spacingAndGlyphs">Table</text>
<text x="1862.2" y="171.7" font-size="14.8" fill="#eaeaea" text-anchor="start" font-weight="normal" textLength="26.5" lengthAdjust="spacingAndGlyphs">Plot</text>
<text x="1851.6" y="221.6" font-size="14.8" fill="#eaeaea" text-anchor="start" font-weight="normal" textLength="47.7" lengthAdjust="spacingAndGlyphs">More...</text>
<line x1="1767" y1="191.5" x2="1911" y2="191.5" stroke="#6a625a" stroke-width="1"/>
<line x1="1767" y1="246.5" x2="1911" y2="246.5" stroke="#6a625a" stroke-width="1"/>
<rect x="1792" y="205" width="22" height="19" fill="none" stroke="#a8a8a8" stroke-width="2" stroke-dasharray="3 2"/>
<circle cx="1805.5" cy="212" r="4.3" fill="none" stroke="#b0b0b0" stroke-width="1.8"/>
<line x1="1802.5" y1="215" x2="1797" y2="220" stroke="#b0b0b0" stroke-width="2.4" stroke-linecap="round"/>
<path d="M1809 218.5 L1817 225 L1813.5 225.5 L1815.5 229 L1814 229.8 L1812 226.3 L1809.5 228.5 Z" fill="#b0b0b0"/>
<rect x="1767" y="266" width="144" height="116" rx="4" fill="#c9c9c9"/>
<path d="M1767 270 Q1767 266 1771 266 L1907 266 Q1911 266 1911 270 L1911 285 L1767 285 Z" fill="#5a5a5a"/>
<rect x="1767" y="285" width="144" height="2" fill="#a9a9a9"/>
<text x="1772.5" y="281.3" font-size="15.3" fill="#ececec" text-anchor="start" font-weight="normal" textLength="45.5" lengthAdjust="spacingAndGlyphs">Meas 1</text>
<rect x="1852.5" y="269.5" width="53.40000000000009" height="13" rx="6.5" fill="#333"/>
<clipPath id="pc266"><rect x="1853" y="270" width="52.40000000000009" height="12" rx="6"/></clipPath>
<g clip-path="url(#pc266)"><rect x="1853" y="270" width="52.40000000000009" height="12" fill="#e8405c"/><path d="M1853 270 L1883.2 270 L1875.2 282 L1853 282 Z" fill="#22c8d4"/></g>
<text x="1865.5" y="279.8" font-size="11.5" fill="#0a0a0a" text-anchor="middle" font-weight="normal" textLength="14" lengthAdjust="spacingAndGlyphs">R2</text>
<text x="1892.9" y="279.8" font-size="11.5" fill="#f4f4f4" text-anchor="middle" font-weight="normal" textLength="14" lengthAdjust="spacingAndGlyphs">R3</text>
<text x="1772.5" y="299.3" font-size="14" fill="#111111" text-anchor="start" font-weight="normal" textLength="20.5" lengthAdjust="spacingAndGlyphs">Trr'</text>
<text x="1772.5" y="318.7" font-size="14" fill="#111111" text-anchor="start" font-weight="normal" textLength="19.3" lengthAdjust="spacingAndGlyphs">Trr:</text>
<text x="1843.7" y="318.7" font-size="14" fill="#111111" text-anchor="start" font-weight="normal" textLength="52.5" lengthAdjust="spacingAndGlyphs">66.98 ns</text>
<text x="1772.5" y="337.5" font-size="14" fill="#111111" text-anchor="start" font-weight="normal" textLength="16.3" lengthAdjust="spacingAndGlyphs">Ta:</text>
<text x="1843.7" y="337.5" font-size="14" fill="#111111" text-anchor="start" font-weight="normal" textLength="52.5" lengthAdjust="spacingAndGlyphs">50.50 ns</text>
<text x="1772.5" y="356.9" font-size="14" fill="#111111" text-anchor="start" font-weight="normal" textLength="18.1" lengthAdjust="spacingAndGlyphs">Tb:</text>
<text x="1843.7" y="356.9" font-size="14" fill="#111111" text-anchor="start" font-weight="normal" textLength="52.5" lengthAdjust="spacingAndGlyphs">16.48 ns</text>
<text x="1772.5" y="375.6" font-size="14" fill="#111111" text-anchor="start" font-weight="normal" textLength="24.8" lengthAdjust="spacingAndGlyphs">RSF:</text>
<text x="1843.7" y="375.6" font-size="14" fill="#111111" text-anchor="start" font-weight="normal" textLength="51.7" lengthAdjust="spacingAndGlyphs">326.3 m</text>
<rect x="1767" y="390" width="144" height="59" rx="4" fill="#c9c9c9"/>
<path d="M1767 394 Q1767 390 1771 390 L1907 390 Q1911 390 1911 394 L1911 409 L1767 409 Z" fill="#5a5a5a"/>
<rect x="1767" y="409" width="144" height="2" fill="#a9a9a9"/>
<text x="1772.5" y="405.3" font-size="15.3" fill="#ececec" text-anchor="start" font-weight="normal" textLength="45.5" lengthAdjust="spacingAndGlyphs">Meas 2</text>
<rect x="1852.5" y="393.5" width="53.40000000000009" height="13" rx="6.5" fill="#333"/>
<clipPath id="pc390"><rect x="1853" y="394" width="52.40000000000009" height="12" rx="6"/></clipPath>
<g clip-path="url(#pc390)"><rect x="1853" y="394" width="52.40000000000009" height="12" fill="#707070"/><path d="M1853 394 L1883.2 394 L1875.2 406 L1853 406 Z" fill="#f0ee20"/></g>
<text x="1865.5" y="403.8" font-size="11.5" fill="#0a0a0a" text-anchor="middle" font-weight="normal" textLength="14" lengthAdjust="spacingAndGlyphs">R1</text>
<text x="1892.9" y="403.8" font-size="11" fill="#1a1a1a" text-anchor="middle" font-weight="normal">+</text>
<text x="1772.5" y="423.4" font-size="14" fill="#111111" text-anchor="start" font-weight="normal" textLength="20.8" lengthAdjust="spacingAndGlyphs">Err'</text>
<text x="1772.5" y="442.3" font-size="14" fill="#111111" text-anchor="start" font-weight="normal" textLength="20.2" lengthAdjust="spacingAndGlyphs">Err:</text>
<text x="1842.8" y="442.3" font-size="14" fill="#111111" text-anchor="start" font-weight="normal" textLength="58" lengthAdjust="spacingAndGlyphs">-629.4 nJ</text>
<rect x="1767" y="457" width="144" height="59" rx="4" fill="#c9c9c9"/>
<path d="M1767 461 Q1767 457 1771 457 L1907 457 Q1911 457 1911 461 L1911 476 L1767 476 Z" fill="#000000"/>
<rect x="1767" y="476" width="144" height="2" fill="#a9a9a9"/>
<text x="1772.5" y="472.3" font-size="15.3" fill="#26c6d4" text-anchor="start" font-weight="normal" textLength="45.5" lengthAdjust="spacingAndGlyphs">Meas 3</text>
<rect x="1852.5" y="460.5" width="53.40000000000009" height="13" rx="6.5" fill="#333"/>
<clipPath id="pc457"><rect x="1853" y="461" width="52.40000000000009" height="12" rx="6"/></clipPath>
<g clip-path="url(#pc457)"><rect x="1853" y="461" width="52.40000000000009" height="12" fill="#e8405c"/><path d="M1853 461 L1883.2 461 L1875.2 473 L1853 473 Z" fill="#22c8d4"/></g>
<text x="1865.5" y="470.8" font-size="11.5" fill="#0a0a0a" text-anchor="middle" font-weight="normal" textLength="14" lengthAdjust="spacingAndGlyphs">R2</text>
<text x="1892.9" y="470.8" font-size="11.5" fill="#f4f4f4" text-anchor="middle" font-weight="normal" textLength="14" lengthAdjust="spacingAndGlyphs">R3</text>
<text x="1772.5" y="489.9" font-size="14" fill="#111111" text-anchor="start" font-weight="normal" textLength="24.1" lengthAdjust="spacingAndGlyphs">Qrr'</text>
<text x="1772.5" y="509.5" font-size="14" fill="#111111" text-anchor="start" font-weight="normal" textLength="23.4" lengthAdjust="spacingAndGlyphs">Qrr:</text>
<text x="1842.8" y="509.5" font-size="14" fill="#111111" text-anchor="start" font-weight="normal" textLength="62" lengthAdjust="spacingAndGlyphs">-154.8 nC</text>
<rect x="3" y="993" width="90" height="78" rx="4.5" fill="#c9c9c9"/>
<path d="M3 997.5 Q3 993 7.5 993 L88.5 993 Q93 993 93 997.5 L93 1011.5 L3 1011.5 Z" fill="#4a3420"/>
<rect x="3" y="1011.5" width="90" height="1.8" fill="#a8a8a8"/>
<text x="8.7" y="1008" font-size="14.6" fill="#f5a02a" text-anchor="start" font-weight="normal" textLength="46" lengthAdjust="spacingAndGlyphs">Math 1</text>
<text x="8.7" y="1026.7" font-size="14.8" fill="#101010" text-anchor="start" font-weight="normal" textLength="69" lengthAdjust="spacingAndGlyphs">15.9176 ...</text>
<text x="8.7" y="1045.6" font-size="14.8" fill="#101010" text-anchor="start" font-weight="normal" textLength="65" lengthAdjust="spacingAndGlyphs">Ref1 *Ref2</text>
<text x="8.7" y="1064.5" font-size="14.8" fill="#101010" text-anchor="start" font-weight="normal" textLength="46" lengthAdjust="spacingAndGlyphs">Meas 2</text>
<rect x="98" y="993" width="90" height="78" rx="4.5" fill="#c9c9c9"/>
<path d="M98 997.5 Q98 993 102.5 993 L183.5 993 Q188 993 188 997.5 L188 1011.5 L98 1011.5 Z" fill="#4a4824"/>
<rect x="98" y="1011.5" width="90" height="1.8" fill="#a8a8a8"/>
<text x="103.7" y="1008" font-size="14.6" fill="#f0f024" text-anchor="start" font-weight="normal" textLength="32" lengthAdjust="spacingAndGlyphs">Ref 1</text>
<text x="103.7" y="1026.7" font-size="14.8" fill="#101010" text-anchor="start" font-weight="normal" textLength="50" lengthAdjust="spacingAndGlyphs">10 V/div</text>
<text x="103.7" y="1045.6" font-size="14.8" fill="#101010" text-anchor="start" font-weight="normal" textLength="60" lengthAdjust="spacingAndGlyphs">6.25 GS/s</text>
<text x="103.7" y="1064.5" font-size="14.8" fill="#101010" text-anchor="start" font-weight="normal" textLength="50" lengthAdjust="spacingAndGlyphs">Vrr.wfm</text>
<rect x="193" y="993" width="90" height="78" rx="4.5" fill="#c9c9c9"/>
<path d="M193 997.5 Q193 993 197.5 993 L278.5 993 Q283 993 283 997.5 L283 1011.5 L193 1011.5 Z" fill="#24ccd6"/>
<rect x="193" y="1011.5" width="90" height="1.8" fill="#a8a8a8"/>
<text x="198.7" y="1008" font-size="14.6" fill="#0a0a0a" text-anchor="start" font-weight="normal" textLength="34" lengthAdjust="spacingAndGlyphs">Ref 2</text>
<text x="198.7" y="1026.7" font-size="14.8" fill="#101010" text-anchor="start" font-weight="normal" textLength="71" lengthAdjust="spacingAndGlyphs">530 mA/div</text>
<text x="198.7" y="1045.6" font-size="14.8" fill="#101010" text-anchor="start" font-weight="normal" textLength="60" lengthAdjust="spacingAndGlyphs">6.25 GS/s</text>
<text x="198.7" y="1064.5" font-size="14.8" fill="#101010" text-anchor="start" font-weight="normal" textLength="45" lengthAdjust="spacingAndGlyphs">Irr.wfm</text>
<rect x="288" y="993" width="90" height="78" rx="4.5" fill="#c9c9c9"/>
<path d="M288 997.5 Q288 993 292.5 993 L373.5 993 Q378 993 378 997.5 L378 1011.5 L288 1011.5 Z" fill="#4a2428"/>
<rect x="288" y="1011.5" width="90" height="1.8" fill="#a8a8a8"/>
<text x="293.7" y="1008" font-size="14.6" fill="#f4f4f4" text-anchor="start" font-weight="normal" textLength="34" lengthAdjust="spacingAndGlyphs">Ref 3</text>
<text x="293.7" y="1026.7" font-size="14.8" fill="#101010" text-anchor="start" font-weight="normal" textLength="52" lengthAdjust="spacingAndGlyphs">1.7 V/div</text>
<text x="293.7" y="1045.6" font-size="14.8" fill="#101010" text-anchor="start" font-weight="normal" textLength="60" lengthAdjust="spacingAndGlyphs">6.25 GS/s</text>
<text x="293.7" y="1064.5" font-size="14.8" fill="#101010" text-anchor="start" font-weight="normal" textLength="51" lengthAdjust="spacingAndGlyphs">Vgs.wfm</text>
<rect x="636.5" y="993.5" width="39" height="77" rx="6" fill="url(#cbtn)" stroke="#6e655c" stroke-width="1"/>
<rect x="640" y="1001" width="32" height="2.2" fill="#f4e820"/>
<text x="656" y="1044.3" font-size="20.5" fill="#dedede" text-anchor="middle" font-weight="normal">1</text>
<rect x="681.5" y="993.5" width="39" height="77" rx="6" fill="url(#cbtn)" stroke="#6e655c" stroke-width="1"/>
<rect x="685" y="1001" width="32" height="2.2" fill="#22d2e2"/>
<text x="701" y="1044.3" font-size="20.5" fill="#dedede" text-anchor="middle" font-weight="normal">2</text>
<rect x="726.5" y="993.5" width="39" height="77" rx="6" fill="url(#cbtn)" stroke="#6e655c" stroke-width="1"/>
<rect x="730" y="1001" width="32" height="2.2" fill="#e8405a"/>
<text x="746" y="1044.3" font-size="20.5" fill="#dedede" text-anchor="middle" font-weight="normal">3</text>
<rect x="771.5" y="993.5" width="39" height="77" rx="6" fill="url(#cbtn)" stroke="#6e655c" stroke-width="1"/>
<rect x="775" y="1001" width="32" height="2.2" fill="#8cd82c"/>
<text x="791" y="1044.3" font-size="20.5" fill="#dedede" text-anchor="middle" font-weight="normal">4</text>
<rect x="816.5" y="993.5" width="39" height="77" rx="6" fill="url(#cbtn)" stroke="#6e655c" stroke-width="1"/>
<rect x="820" y="1001" width="32" height="2.2" fill="#f4962c"/>
<text x="836" y="1044.3" font-size="20.5" fill="#dedede" text-anchor="middle" font-weight="normal">5</text>
<rect x="861.5" y="993.5" width="39" height="77" rx="6" fill="url(#cbtn)" stroke="#6e655c" stroke-width="1"/>
<rect x="865" y="1001" width="32" height="2.2" fill="#2828d4"/>
<text x="881" y="1044.3" font-size="20.5" fill="#dedede" text-anchor="middle" font-weight="normal">6</text>
<rect x="906.5" y="993.5" width="39" height="77" rx="6" fill="url(#cbtn)" stroke="#6e655c" stroke-width="1"/>
<rect x="910" y="1001" width="32" height="2.2" fill="#e848a8"/>
<text x="926" y="1044.3" font-size="20.5" fill="#dedede" text-anchor="middle" font-weight="normal">7</text>
<rect x="951.5" y="993.5" width="39" height="77" rx="6" fill="url(#cbtn)" stroke="#6e655c" stroke-width="1"/>
<rect x="955" y="1001" width="32" height="2.2" fill="#18e0a0"/>
<text x="971" y="1044.3" font-size="20.5" fill="#dedede" text-anchor="middle" font-weight="normal">8</text>
<line x1="1001.5" y1="993" x2="1001.5" y2="1071" stroke="#5e5750" stroke-width="1"/>
<line x1="1152.5" y1="993" x2="1152.5" y2="1071" stroke="#5e5750" stroke-width="1"/>
<line x1="1263.5" y1="993" x2="1263.5" y2="1071" stroke="#5e5750" stroke-width="1"/>
<line x1="1805.5" y1="993" x2="1805.5" y2="1071" stroke="#5e5750" stroke-width="1"/>
<rect x="1012.5" y="993.5" width="39" height="77" rx="6" fill="url(#cbtn)" stroke="#6e655c" stroke-width="1"/>
<rect x="1016" y="1001" width="32" height="2.2" fill="#7a2c9c"/>
<text x="1032" y="1024.6" font-size="14.5" fill="#ececec" text-anchor="middle" font-weight="normal">Add</text>
<text x="1032" y="1041.5" font-size="14.5" fill="#ececec" text-anchor="middle" font-weight="normal">New</text>
<text x="1032" y="1058.4" font-size="14.5" fill="#ececec" text-anchor="middle" font-weight="normal">Math</text>
<rect x="1057.5" y="993.5" width="39" height="77" rx="6" fill="url(#cbtn)" stroke="#6e655c" stroke-width="1"/>
<rect x="1061" y="1001" width="32" height="2.2" fill="#a8f0f0"/>
<text x="1077" y="1024.6" font-size="14.5" fill="#ececec" text-anchor="middle" font-weight="normal">Add</text>
<text x="1077" y="1041.5" font-size="14.5" fill="#ececec" text-anchor="middle" font-weight="normal">New</text>
<text x="1077" y="1058.4" font-size="14.5" fill="#ececec" text-anchor="middle" font-weight="normal">Ref</text>
<rect x="1102.5" y="993.5" width="39" height="77" rx="6" fill="url(#cbtn)" stroke="#6e655c" stroke-width="1"/>
<rect x="1106" y="1001" width="32" height="2.2" fill="#d050f0"/>
<text x="1122" y="1024.6" font-size="14.5" fill="#ececec" text-anchor="middle" font-weight="normal">Add</text>
<text x="1122" y="1041.5" font-size="14.5" fill="#ececec" text-anchor="middle" font-weight="normal">New</text>
<text x="1122" y="1058.4" font-size="14.5" fill="#ececec" text-anchor="middle" font-weight="normal">Bus</text>
<rect x="1163.5" y="993.5" width="39" height="77" rx="6" fill="url(#cbtn)" stroke="#6e655c" stroke-width="1"/>
<rect x="1167" y="1001" width="32" height="2.2" fill="#4c4c4c"/>
<text x="1183" y="1041.5" font-size="14.5" fill="#ececec" text-anchor="middle" font-weight="normal">DVM</text>
<rect x="1213.5" y="993.5" width="39" height="77" rx="6" fill="url(#cbtn)" stroke="#6e655c" stroke-width="1"/>
<rect x="1217" y="1001" width="32" height="2.2" fill="#4c4c4c"/>
<text x="1233" y="1041.5" font-size="14.5" fill="#ececec" text-anchor="middle" font-weight="normal">AFG</text>
<rect x="1274.5" y="993.5" width="199" height="77" rx="5" fill="#161616"/>
<rect x="1275" y="994" width="198" height="76" rx="4.5" fill="#c9c9c9"/>
<path d="M1275 998.5 Q1275 994 1279.5 994 L1468.5 994 Q1473 994 1473 998.5 L1473 1012.5 L1275 1012.5 Z" fill="#5a5a5a"/>
<rect x="1275" y="1012.5" width="198" height="2" fill="#a8a8a8"/>
<text x="1280.5" y="1008.6" font-size="14.6" fill="#e4e4e4" text-anchor="start" font-weight="normal" textLength="72.7" lengthAdjust="spacingAndGlyphs">Horizontal</text>
<text x="1279.5" y="1026.8" font-size="14.5" fill="#101010" text-anchor="start" font-weight="normal" textLength="46.7" lengthAdjust="spacingAndGlyphs">4 µs/div</text>
<text x="1384.7" y="1026.8" font-size="14.5" fill="#101010" text-anchor="start" font-weight="normal" textLength="33.4" lengthAdjust="spacingAndGlyphs">40 µs</text>
<text x="1279.5" y="1046" font-size="14.5" fill="#101010" text-anchor="start" font-weight="normal" textLength="71.7" lengthAdjust="spacingAndGlyphs">SR: 25 GS/s</text>
<text x="1384.7" y="1046" font-size="14.5" fill="#101010" text-anchor="start" font-weight="normal" textLength="75.7" lengthAdjust="spacingAndGlyphs">40 ps/pt (IT)</text>
<text x="1279.5" y="1065.2" font-size="14.5" fill="#101010" text-anchor="start" font-weight="normal" textLength="65.7" lengthAdjust="spacingAndGlyphs">RL: 1 Mpts</text>
<path d="M1385.5 1053.5 L1393.5 1053.5 L1393.5 1062 L1391 1062 L1389.5 1064.5 L1388 1062 L1385.5 1062 Z" fill="#111" stroke="#f08a1c" stroke-width="1.2"/>
<text x="1389.5" y="1061" font-size="7.5" fill="#f0f0f0" text-anchor="middle" font-weight="bold">T</text>
<text x="1400.6" y="1065.2" font-size="14.5" fill="#101010" text-anchor="start" font-weight="normal" textLength="39.5" lengthAdjust="spacingAndGlyphs">12.3%</text>
<rect x="1479.5" y="993.5" width="159" height="77" rx="5" fill="#161616"/>
<rect x="1480" y="994" width="158" height="76" rx="4.5" fill="#c9c9c9"/>
<path d="M1480 998.5 Q1480 994 1484.5 994 L1633.5 994 Q1638 994 1638 998.5 L1638 1012.5 L1480 1012.5 Z" fill="#5a5a5a"/>
<rect x="1480" y="1012.5" width="158" height="2" fill="#a8a8a8"/>
<text x="1485.5" y="1008.6" font-size="14.6" fill="#e4e4e4" text-anchor="start" font-weight="normal" textLength="46.5" lengthAdjust="spacingAndGlyphs">Trigger</text>
<rect x="1484.8" y="1015.8" width="29" height="14.5" rx="5" fill="#f4f020" stroke="#222" stroke-width="1"/>
<text x="1499" y="1027.5" font-size="13" fill="#111" text-anchor="middle" font-weight="normal">1</text>
<polyline points="1524.2,1027 1528.5,1027 1535.3,1017.5 1540,1017.5" fill="none" stroke="#3a3a8c" stroke-width="1.3"/>
<text x="1550.6" y="1026.6" font-size="14.5" fill="#101010" text-anchor="start" font-weight="normal" textLength="20.1" lengthAdjust="spacingAndGlyphs">0 V</text>
<rect x="1644.5" y="993.5" width="149" height="77" rx="5" fill="#161616"/>
<rect x="1645" y="994" width="148" height="76" rx="4.5" fill="#c9c9c9"/>
<path d="M1645 998.5 Q1645 994 1649.5 994 L1788.5 994 Q1793 994 1793 998.5 L1793 1012.5 L1645 1012.5 Z" fill="#5a5a5a"/>
<rect x="1645" y="1012.5" width="148" height="2" fill="#a8a8a8"/>
<text x="1650.5" y="1008.6" font-size="14.6" fill="#e4e4e4" text-anchor="start" font-weight="normal" textLength="77.2" lengthAdjust="spacingAndGlyphs">Acquisition</text>
<text x="1649.4" y="1026.6" font-size="14.5" fill="#101010" text-anchor="start" font-weight="normal" textLength="34.1" lengthAdjust="spacingAndGlyphs">Auto,</text>
<text x="1730.3" y="1026.6" font-size="14.5" fill="#101010" text-anchor="start" font-weight="normal" textLength="49.9" lengthAdjust="spacingAndGlyphs">Analyze</text>
<text x="1649.4" y="1045.4" font-size="14.5" fill="#101010" text-anchor="start" font-weight="normal" textLength="87.8" lengthAdjust="spacingAndGlyphs">Sample: 8 bits</text>
<text x="1649.4" y="1064.1" font-size="14.5" fill="#101010" text-anchor="start" font-weight="normal" textLength="41.8" lengthAdjust="spacingAndGlyphs">0 Acqs</text>
<rect x="1816.5" y="993.5" width="89" height="35" rx="6" fill="#fe2029" stroke="#8a8a8a" stroke-width="1"/>
<text x="1835.6" y="1016.1" font-size="13" fill="#ffffff" text-anchor="start" font-weight="bold" textLength="50.6" lengthAdjust="spacingAndGlyphs">Preview</text>
</svg></body></html>
